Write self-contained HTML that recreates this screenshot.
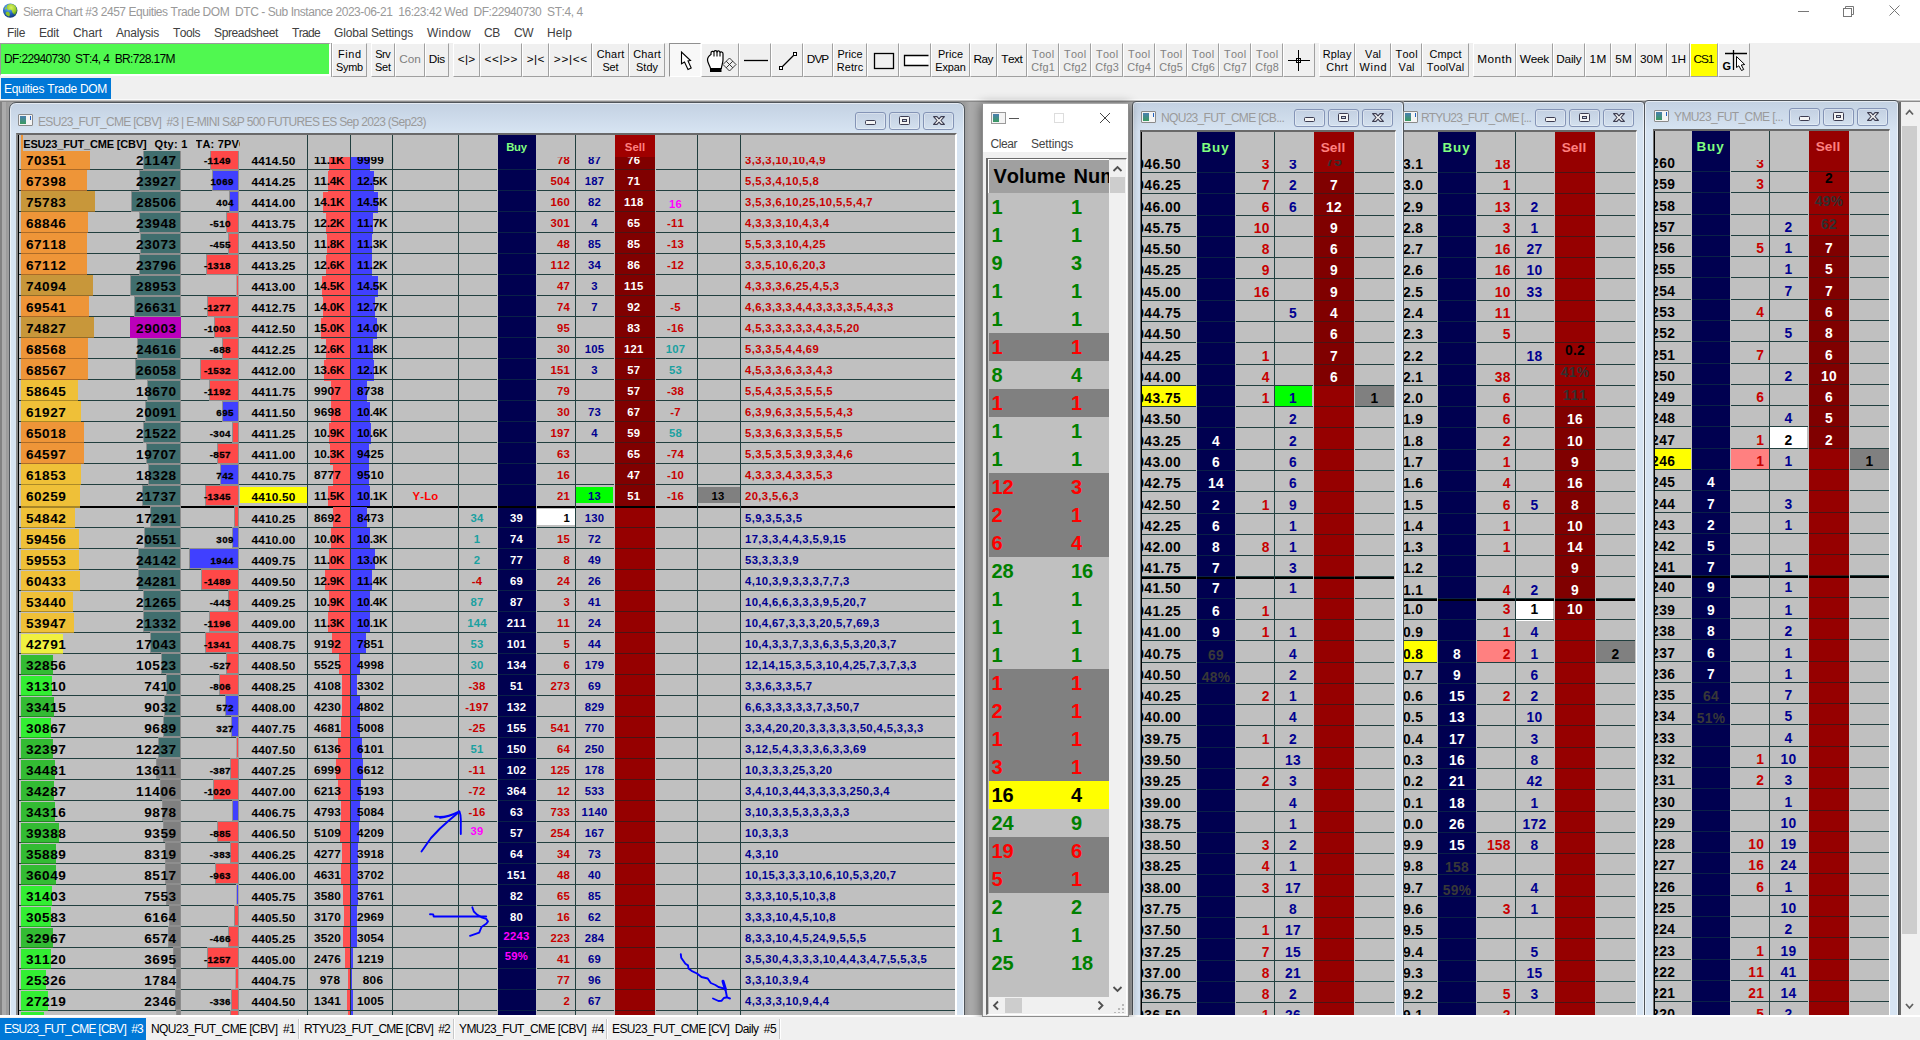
<!DOCTYPE html>
<html><head><meta charset="utf-8"><title>Sierra Chart</title>
<style>
html,body{margin:0;padding:0}
body{width:1920px;height:1040px;overflow:hidden;background:#f0f0f0;position:relative;font-family:"Liberation Sans",sans-serif;font-kerning:none;font-size:12px}
div,span{position:absolute;box-sizing:border-box}
.t{white-space:pre}
.btn{background:#f0f0f0;border-top:1px solid #fff;border-left:1px solid #fff;border-right:1px solid #a0a0a0;border-bottom:1px solid #a0a0a0;top:43px;height:34px}
.bt{white-space:pre;text-align:center;font-size:12px;line-height:13px;color:#000}
.g{color:#7f7f7f}
.win{background:#d4e2f1;border:1px solid #50555a;box-shadow:inset 0 0 0 1px rgba(255,255,255,.55);border-radius:7px 7px 0 0;background:linear-gradient(#c3d1e2 0,#d7e4f2 30px,#d7e4f2 100%)}
.wb{border:1px solid #8494b6;border-radius:3px;background:linear-gradient(#c3d0e2,#d3e0ee);box-shadow:inset 0 0 0 1px rgba(255,255,255,.35)}
</style></head><body>

<div style="left:0px;top:0px;width:1920px;height:22px;background:#fff;"></div>
<svg style="position:absolute;left:2px;top:2px" width="17" height="17" viewBox="0 0 17 17"><defs><radialGradient id="gl" cx="40%" cy="30%" r="75%"><stop offset="0" stop-color="#7fc0ff"/><stop offset="0.55" stop-color="#2668c0"/><stop offset="1" stop-color="#0e2f70"/></radialGradient><radialGradient id="gd" cx="45%" cy="35%" r="70%"><stop offset="0" stop-color="#d8f060"/><stop offset="0.7" stop-color="#98cc28"/><stop offset="1" stop-color="#5a9a18"/></radialGradient></defs><circle cx="8.200" cy="8.600" r="7.200" fill="url(#gl)"/><path d="M5.500 3c1.500-1.200 4-1.500 6-.5 1.500.8 2.800 2.500 3.200 4.500.3 2-.2 4-1.500 5.500-1 .3-1.800-.5-2.500-1.500s-.5-2.500-1.500-3-2.500.5-3.500-.5S4.500 5 5 4.200z" fill="url(#gd)"/><path d="M4.500 10c1-.5 2.500 0 3 1s.5 2.500-.5 3.500c-1.500-.3-2.800-1.500-3.500-3 .2-.7.500-1.200 1-1.500z" fill="#8cc428"/><path d="M3 5.500c.8-.5 1.500-.3 1.500.5s-.8 1.500-1.800 1.500c0-.8.100-1.400.3-2z" fill="#9ad030"/></svg>
<span class="t" style="left:23px;top:4px;font-size:12px;line-height:16px;color:#999;letter-spacing:-0.44px;">Sierra Chart #3 2457 Equities Trade DOM  DTC - Sub Instance 2023-06-21  16:23:42 Wed  DF:22940730  ST:4, 4</span>
<svg style="position:absolute;left:1780px;top:0" width="140" height="22" viewBox="0 0 140 22"><g stroke="#777" stroke-width="1" fill="none"><path d="M18 11.500h11"/><rect x="63.500" y="8.500" width="8" height="8" fill="#fff"/><path d="M65.500 8.500v-2h8v8h-2"/><path d="M109.500 5.500l10 10M119.500 5.500l-10 10"/></g></svg>
<div style="left:0px;top:22px;width:1920px;height:21px;background:#fff;"></div>
<span class="t" style="left:7px;top:25px;font-size:12px;line-height:16px;color:#404040;letter-spacing:-0.33px;">File</span>
<span class="t" style="left:39px;top:25px;font-size:12px;line-height:16px;color:#404040;letter-spacing:-0.17px;">Edit</span>
<span class="t" style="left:73px;top:25px;font-size:12px;line-height:16px;color:#404040;letter-spacing:-0.07px;">Chart</span>
<span class="t" style="left:116px;top:25px;font-size:12px;line-height:16px;color:#404040;letter-spacing:-0.21px;">Analysis</span>
<span class="t" style="left:173px;top:25px;font-size:12px;line-height:16px;color:#404040;letter-spacing:-0.47px;">Tools</span>
<span class="t" style="left:214px;top:25px;font-size:12px;line-height:16px;color:#404040;letter-spacing:-0.37px;">Spreadsheet</span>
<span class="t" style="left:292px;top:25px;font-size:12px;line-height:16px;color:#404040;letter-spacing:-0.67px;">Trade</span>
<span class="t" style="left:334px;top:25px;font-size:12px;line-height:16px;color:#404040;letter-spacing:-0.16px;">Global Settings</span>
<span class="t" style="left:427px;top:25px;font-size:12px;line-height:16px;color:#404040;letter-spacing:0.22px;">Window</span>
<span class="t" style="left:484px;top:25px;font-size:12px;line-height:16px;color:#404040;letter-spacing:-0.34px;">CB</span>
<span class="t" style="left:514px;top:25px;font-size:12px;line-height:16px;color:#404040;letter-spacing:-0.5px;">CW</span>
<span class="t" style="left:547px;top:25px;font-size:12px;line-height:16px;color:#404040;letter-spacing:0.08px;">Help</span>
<div style="left:0px;top:43px;width:1920px;height:34px;background:#f0f0f0;"></div>
<div style="left:0px;top:43px;width:331px;height:33px;background:#50f850;border-top:1px solid #9a9a9a;border-left:1px solid #9a9a9a;border-right:2px solid #fff;border-bottom:2px solid #fff"></div>
<div style="left:331px;top:43px;width:1px;height:34px;background:#a0a0a0;"></div>
<span class="t" style="left:4px;top:51px;font-size:12px;line-height:16px;color:#000;letter-spacing:-0.64px;">DF:22940730  ST:4, 4  BR:728.17M</span>
<div class="btn" style="left:332px;width:35px;"></div>
<span class="bt" style="left:322px;width:55.57px;top:46.5px;font-size:10.9px;line-height:14px;letter-spacing:0.57px">Find</span>
<span class="bt" style="left:322px;width:54.72px;top:59.5px;font-size:10.9px;line-height:14px;letter-spacing:-0.28px">Symb</span>
<div class="btn" style="left:371px;width:24px;"></div>
<span class="bt" style="left:361px;width:43.55px;top:46.5px;font-size:10.9px;line-height:14px;letter-spacing:-0.45px">Srv</span>
<span class="bt" style="left:361px;width:43.88px;top:59.5px;font-size:10.9px;line-height:14px;letter-spacing:-0.12px">Set</span>
<div class="btn" style="left:395px;width:30px;"></div>
<span class="bt g" style="left:385px;width:49.95px;top:51.5px;font-size:11.8px;line-height:14px;letter-spacing:-0.05px">Con</span>
<div class="btn" style="left:425px;width:24px;"></div>
<span class="bt" style="left:415px;width:43.65px;top:51.5px;font-size:11.8px;line-height:14px;letter-spacing:-0.35px">Dis</span>
<div class="btn" style="left:453px;width:27px;"></div>
<span class="bt" style="left:443px;width:47.22px;top:51.5px;font-size:11.8px;line-height:14px;letter-spacing:0.22px">&lt;|&gt;</span>
<div class="btn" style="left:480px;width:42px;"></div>
<span class="bt" style="left:470px;width:62.57px;top:51.5px;font-size:11.8px;line-height:14px;letter-spacing:0.57px">&lt;&lt;|&gt;&gt;</span>
<div class="btn" style="left:522px;width:27px;"></div>
<span class="bt" style="left:512px;width:47.38px;top:51.5px;font-size:11.8px;line-height:14px;letter-spacing:0.38px">&gt;|&lt;</span>
<div class="btn" style="left:549px;width:43px;"></div>
<span class="bt" style="left:539px;width:63.67px;top:51.5px;font-size:11.8px;line-height:14px;letter-spacing:0.67px">&gt;&gt;|&lt;&lt;</span>
<div class="btn" style="left:592px;width:37px;"></div>
<span class="bt" style="left:582px;width:57.27px;top:46.5px;font-size:10.9px;line-height:14px;letter-spacing:0.27px">Chart</span>
<span class="bt" style="left:582px;width:56.88px;top:59.5px;font-size:10.9px;line-height:14px;letter-spacing:-0.12px">Set</span>
<div class="btn" style="left:629px;width:36px;"></div>
<span class="bt" style="left:619px;width:56.27px;top:46.5px;font-size:10.9px;line-height:14px;letter-spacing:0.27px">Chart</span>
<span class="bt" style="left:619px;width:56.11px;top:59.5px;font-size:10.9px;line-height:14px;letter-spacing:0.11px">Stdy</span>
<div class="btn" style="left:669px;width:32px;background:#f8f8f8;border-color:#909090 #fff #fff #909090;"></div>
<div class="btn" style="left:701px;width:38px;"></div>
<div class="btn" style="left:739px;width:32px;"></div>
<div class="btn" style="left:771px;width:32px;"></div>
<div class="btn" style="left:803px;width:30px;"></div>
<span class="bt" style="left:793px;width:49.08px;top:51.5px;font-size:11.8px;line-height:14px;letter-spacing:-0.92px">DVP</span>
<div class="btn" style="left:833px;width:34px;"></div>
<span class="bt" style="left:823px;width:54.03px;top:46.5px;font-size:10.9px;line-height:14px;letter-spacing:0.03px">Price</span>
<span class="bt" style="left:823px;width:54.09px;top:59.5px;font-size:10.9px;line-height:14px;letter-spacing:0.09px">Retrc</span>
<div class="btn" style="left:867px;width:32px;"></div>
<div class="btn" style="left:899px;width:32px;"></div>
<div class="btn" style="left:931px;width:39px;"></div>
<span class="bt" style="left:921px;width:59.03px;top:46.5px;font-size:10.9px;line-height:14px;letter-spacing:0.03px">Price</span>
<span class="bt" style="left:921px;width:58.92px;top:59.5px;font-size:10.9px;line-height:14px;letter-spacing:-0.08px">Expan</span>
<div class="btn" style="left:970px;width:27px;"></div>
<span class="bt" style="left:960px;width:46.51px;top:51.5px;font-size:11.8px;line-height:14px;letter-spacing:-0.49px">Ray</span>
<div class="btn" style="left:997px;width:30px;"></div>
<span class="bt" style="left:987px;width:49.51px;top:51.5px;font-size:11.8px;line-height:14px;letter-spacing:-0.49px">Text</span>
<div class="btn" style="left:1027px;width:32px;"></div>
<span class="bt g" style="left:1017px;width:52.32px;top:46.5px;font-size:10.9px;line-height:14px;letter-spacing:0.32px">Tool</span>
<span class="bt g" style="left:1017px;width:52.24px;top:59.5px;font-size:10.9px;line-height:14px;letter-spacing:0.24px">Cfg1</span>
<div class="btn" style="left:1059px;width:32px;"></div>
<span class="bt g" style="left:1049px;width:52.32px;top:46.5px;font-size:10.9px;line-height:14px;letter-spacing:0.32px">Tool</span>
<span class="bt g" style="left:1049px;width:52.24px;top:59.5px;font-size:10.9px;line-height:14px;letter-spacing:0.24px">Cfg2</span>
<div class="btn" style="left:1091px;width:32px;"></div>
<span class="bt g" style="left:1081px;width:52.32px;top:46.5px;font-size:10.9px;line-height:14px;letter-spacing:0.32px">Tool</span>
<span class="bt g" style="left:1081px;width:52.24px;top:59.5px;font-size:10.9px;line-height:14px;letter-spacing:0.24px">Cfg3</span>
<div class="btn" style="left:1123px;width:32px;"></div>
<span class="bt g" style="left:1113px;width:52.32px;top:46.5px;font-size:10.9px;line-height:14px;letter-spacing:0.32px">Tool</span>
<span class="bt g" style="left:1113px;width:52.24px;top:59.5px;font-size:10.9px;line-height:14px;letter-spacing:0.24px">Cfg4</span>
<div class="btn" style="left:1155px;width:32px;"></div>
<span class="bt g" style="left:1145px;width:52.32px;top:46.5px;font-size:10.9px;line-height:14px;letter-spacing:0.32px">Tool</span>
<span class="bt g" style="left:1145px;width:52.24px;top:59.5px;font-size:10.9px;line-height:14px;letter-spacing:0.24px">Cfg5</span>
<div class="btn" style="left:1187px;width:32px;"></div>
<span class="bt g" style="left:1177px;width:52.32px;top:46.5px;font-size:10.9px;line-height:14px;letter-spacing:0.32px">Tool</span>
<span class="bt g" style="left:1177px;width:52.24px;top:59.5px;font-size:10.9px;line-height:14px;letter-spacing:0.24px">Cfg6</span>
<div class="btn" style="left:1219px;width:32px;"></div>
<span class="bt g" style="left:1209px;width:52.32px;top:46.5px;font-size:10.9px;line-height:14px;letter-spacing:0.32px">Tool</span>
<span class="bt g" style="left:1209px;width:52.24px;top:59.5px;font-size:10.9px;line-height:14px;letter-spacing:0.24px">Cfg7</span>
<div class="btn" style="left:1251px;width:32px;"></div>
<span class="bt g" style="left:1241px;width:52.32px;top:46.5px;font-size:10.9px;line-height:14px;letter-spacing:0.32px">Tool</span>
<span class="bt g" style="left:1241px;width:52.24px;top:59.5px;font-size:10.9px;line-height:14px;letter-spacing:0.24px">Cfg8</span>
<div class="btn" style="left:1283px;width:32px;"></div>
<div class="btn" style="left:1319px;width:36px;"></div>
<span class="bt" style="left:1309px;width:56.21px;top:46.5px;font-size:10.9px;line-height:14px;letter-spacing:0.21px">Rplay</span>
<span class="bt" style="left:1309px;width:56.3px;top:59.5px;font-size:10.9px;line-height:14px;letter-spacing:0.3px">Chrt</span>
<div class="btn" style="left:1355px;width:36px;"></div>
<span class="bt" style="left:1345px;width:56.08px;top:46.5px;font-size:10.9px;line-height:14px;letter-spacing:0.08px">Val</span>
<span class="bt" style="left:1345px;width:56.74px;top:59.5px;font-size:10.9px;line-height:14px;letter-spacing:0.74px">Wind</span>
<div class="btn" style="left:1391px;width:31px;"></div>
<span class="bt" style="left:1381px;width:51.32px;top:46.5px;font-size:10.9px;line-height:14px;letter-spacing:0.32px">Tool</span>
<span class="bt" style="left:1381px;width:51.08px;top:59.5px;font-size:10.9px;line-height:14px;letter-spacing:0.08px">Val</span>
<div class="btn" style="left:1422px;width:47px;"></div>
<span class="bt" style="left:1412px;width:67.14px;top:46.5px;font-size:10.9px;line-height:14px;letter-spacing:0.14px">Cmpct</span>
<span class="bt" style="left:1412px;width:67.06px;top:59.5px;font-size:10.9px;line-height:14px;letter-spacing:0.06px">ToolVal</span>
<div class="btn" style="left:1473px;width:43px;"></div>
<span class="bt" style="left:1463px;width:63.42px;top:51.5px;font-size:11.8px;line-height:14px;letter-spacing:0.42px">Month</span>
<div class="btn" style="left:1516px;width:37px;"></div>
<span class="bt" style="left:1506px;width:56.73px;top:51.5px;font-size:11.8px;line-height:14px;letter-spacing:-0.27px">Week</span>
<div class="btn" style="left:1553px;width:32px;"></div>
<span class="bt" style="left:1543px;width:51.79px;top:51.5px;font-size:11.8px;line-height:14px;letter-spacing:-0.21px">Daily</span>
<div class="btn" style="left:1585px;width:26px;"></div>
<span class="bt" style="left:1575px;width:46.4px;top:51.5px;font-size:11.8px;line-height:14px;letter-spacing:0.4px">1M</span>
<div class="btn" style="left:1611px;width:25px;"></div>
<span class="bt" style="left:1601px;width:45.1px;top:51.5px;font-size:11.8px;line-height:14px;letter-spacing:0.1px">5M</span>
<div class="btn" style="left:1636px;width:31px;"></div>
<span class="bt" style="left:1626px;width:51.05px;top:51.5px;font-size:11.8px;line-height:14px;letter-spacing:0.05px">30M</span>
<div class="btn" style="left:1667px;width:23px;"></div>
<span class="bt" style="left:1657px;width:43.11px;top:51.5px;font-size:11.8px;line-height:14px;letter-spacing:0.11px">1H</span>
<div class="btn" style="left:1690px;width:28px;background:#ffff00;"></div>
<span class="bt" style="left:1680px;width:46.92px;top:51.5px;font-size:11.8px;line-height:14px;letter-spacing:-1.08px">CS1</span>
<div class="btn" style="left:1718px;width:32px;"></div>
<svg style="position:absolute;left:0;top:43px" width="1920" height="34" viewBox="0 43 1920 34">
<g fill="none" stroke="#000" stroke-width="1">
<path d="M681.500 52L681.500 63.700L684.500 62L688 69.500L691.200 68L688 61L690.500 60.500Z" fill="#fff" stroke-width="1.100"/>
<path d="M710.500 68.500c-.5-3-3-5.500-3-8.500 0-2 1-4 3.500-5.500v-1.500c0-1.500 2.500-2.500 3-.5 0-2.500 3-2.500 3 0 .3-2.300 3-2 3 .300 .8-1.500 3-1 3 1v6c0 2.500-1.200 5.700-1.700 8.700z" fill="#fff" stroke-width="1.200"/>
<path d="M714 52.500v4M717 52v4.500M720 52.500v4" stroke-width="1.100"/>
<rect x="710.500" y="68.500" width="10.500" height="3" fill="#000"/>
<path d="M729.500 58L736 64.500L729.500 71L723 64.500ZM726.200 61.200l6.600 6.600M732.800 61.200l-6.600 6.600" stroke="#222" stroke-width="0.900"/>
<path d="M744 60.500h24" stroke-width="1.300"/>
<path d="M782 67l13-13" stroke-width="1.200"/><rect x="779.500" y="66.500" width="3" height="3" fill="#fff"/><rect x="793.500" y="52.500" width="3" height="3" fill="#fff"/>
<rect x="874.500" y="53.500" width="19" height="15" fill="#f0f0f0" stroke-width="1.300"/>
<path d="M928.500 55.500H904.500V65.500H928.500" fill="#fff" stroke-width="1.300"/>
<path d="M1288 60.500h22M1298.500 50v21"/><rect x="1296.500" y="58.500" width="4" height="4"/>
<path d="M1725 53.500h22M1733.500 50v20" stroke-width="1.300"/>
</g>
<path d="M1736.500 56.500v11l2.300-1.700 2.700 4.700 2.200-1-2.400-4.500 3.400-.5z" fill="#fff" stroke="#000" stroke-width="1"/>
</svg>
<span class="t" style="left:1722.5px;top:59.5px;font-size:11px;line-height:13px;color:#000;font-weight:bold;">G</span>
<div style="left:1px;top:78px;width:110px;height:21px;background:#0078d7;"></div>
<span class="t" style="left:4px;top:81px;font-size:12px;line-height:16px;color:#fff;letter-spacing:-0.32px;">Equities Trade DOM</span>
<div style="left:0px;top:100px;width:1920px;height:915px;background:#ababab;border-left:2px solid #828282"></div>
<div style="left:0px;top:99px;width:1920px;height:1px;background:#fafafa;"></div>
<div style="left:0px;top:100px;width:1920px;height:1px;background:#c4c4c4;"></div>
<div style="left:0px;top:101px;width:1920px;height:1px;background:#8a8a8a;"></div>
<div style="left:0px;top:1015px;width:1920px;height:2px;background:#fff;"></div>
<div id="mdi" style="left:0;top:100px;width:1920px;height:915px;overflow:hidden">
<div style="left:6px;top:2px;width:964px;height:920px;background:linear-gradient(90deg,#9a9a9a,#a6a6a6 6px,#a6a6a6 952px,#999 958px,#ababab)"></div>
<div class="win" style="left:9px;top:2px;width:956px;height:940px"></div>
<div style="left:18px;top:14px;width:15px;height:12px;background:#f4f4f4;border:1px solid #8a8a8a;border-radius:1px"></div>
<div style="left:20px;top:16px;width:6px;height:8px;background:linear-gradient(#4a7fb0,#3a9a60)"></div>
<div style="left:30px;top:16px;width:1px;height:4px;background:#2060c0"></div>
<span class="t" style="left:38px;top:14px;font-size:12px;line-height:16px;color:#9a9a9a;letter-spacing:-0.68px;">ESU23_FUT_CME [CBV]  #3 | E-MINI S&amp;P 500 FUTURES ES Sep 2023 (Sep23)</span>
<div class="wb" style="left:855px;top:12px;width:31px;height:18px"></div>
<div style="left:865px;top:20px;width:11px;height:5px;background:#f4f4f4;border:1px solid #3c3c50;border-radius:1.5px"></div>
<div class="wb" style="left:889px;top:12px;width:31px;height:18px"></div>
<div style="left:899px;top:16px;width:11px;height:9px;background:#f4f4f4;border:1px solid #3c3c50;border-radius:1.5px"></div>
<div style="left:902px;top:18.5px;width:5px;height:3.5px;background:#c6d4e6;border:1px solid #3c3c50"></div>
<div class="wb" style="left:923px;top:12px;width:31px;height:18px"></div>
<svg style="position:absolute;left:932.5px;top:16px" width="12" height="9" viewBox="0 0 12 9"><path d="M.6 .6H4L6 2.900 8 .6h3.400L7.900 4.500l3.500 3.900H8L6 6.100 4 8.400H.6l3.500-3.900z" fill="#f4f4f4" stroke="#3c3c50" stroke-width="1.100" stroke-linejoin="round"/></svg>
<div style="left:16px;top:33px;width:941px;height:882px;background:#c0c0c0;overflow:hidden;border-top:2px solid #696969;border-left:2px solid #8a8a8a;border-right:2px solid #fff">
<div style="left:0px;top:-1px;width:1px;height:900px;background:#000;"></div>
<div style="left:480px;top:-1px;width:38px;height:900px;background:#000050;"></div>
<div style="left:597px;top:-1px;width:40px;height:372px;background:#800000;"></div>
<div style="left:597px;top:371px;width:40px;height:600px;background:#960000;"></div>
<div style="left:597px;top:-1px;width:40px;height:17px;background:#a00000;"></div>
<div style="left:3px;top:14px;width:69px;height:20px;background:#ee9538;"></div>
<div style="left:311px;top:15px;width:21px;height:21px;background:#ff5050;"></div>
<div style="left:333px;top:15px;width:19px;height:21px;background:#4040ff;"></div>
<div style="left:1px;top:34px;width:478px;height:1px;background:#213f3f;"></div>
<div style="left:480px;top:34px;width:38px;height:1px;background:#0a2048;"></div>
<div style="left:519px;top:34px;width:77px;height:1px;background:#213f3f;"></div>
<div style="left:597px;top:34px;width:40px;height:1px;background:#4a1414;"></div>
<div style="left:638px;top:34px;width:299px;height:1px;background:#213f3f;"></div>
<div style="left:126px;top:15px;width:36px;height:19px;background:#406e6e;box-shadow:0 0 0 1px #8e8e8e"></div>
<div style="left:193px;top:15px;width:27px;height:19px;background:#ff4848;box-shadow:0 0 0 1px #8e8e8e"></div>
<div style="left:3px;top:34px;width:69px;height:1px;background:#ab6b28;"></div>
<span class="t" style="left:8px;top:16px;font-size:13.6px;line-height:20px;color:#000;font-weight:bold;letter-spacing:0.5px;">70351</span>
<span class="t" style="left:79.2px;top:16px;font-size:13.6px;line-height:20px;color:#000;font-weight:bold;letter-spacing:0.6px;width:79.6px;text-align:right;">21147</span>
<span class="t" style="left:162px;top:16px;font-size:9.8px;line-height:20px;color:#000;font-weight:bold;letter-spacing:0.36px;width:50.8px;text-align:right;-webkit-text-stroke:0.3px #000">-1149</span>
<span class="t" style="left:222px;top:16px;font-size:11.8px;line-height:20px;color:#000;font-weight:bold;letter-spacing:0.22px;width:67px;text-align:center;">4414.50</span>
<span class="t" style="left:296px;top:15px;font-size:11.8px;line-height:20px;color:#000;font-weight:bold;letter-spacing:-0.23px;width:32px;text-align:left;">11.1K</span>
<span class="t" style="left:339px;top:15px;font-size:11.8px;line-height:20px;color:#000;font-weight:bold;letter-spacing:0.22px;width:32px;text-align:left;">9999</span>
<span class="t" style="left:519px;top:15px;font-size:11.3px;line-height:20px;color:#c80000;font-weight:bold;letter-spacing:0.22px;width:33px;text-align:right;">78</span>
<span class="t" style="left:557.4px;top:15px;font-size:11.3px;line-height:20px;color:#000090;font-weight:bold;letter-spacing:0.22px;width:38px;text-align:center;">87</span>
<span class="t" style="left:595.8px;top:15px;font-size:11.3px;line-height:20px;color:#fff;font-weight:bold;letter-spacing:0.22px;width:40px;text-align:center;">76</span>
<span class="t" style="left:727px;top:15px;font-size:11.3px;line-height:20px;color:#c80000;font-weight:bold;letter-spacing:0.36px;">3,3,3,10,10,4,9</span>
<div style="left:3px;top:35px;width:66px;height:20px;background:#ee9538;"></div>
<div style="left:310px;top:36px;width:22px;height:21px;background:#ff5050;"></div>
<div style="left:333px;top:36px;width:23px;height:21px;background:#4040ff;"></div>
<div style="left:1px;top:55px;width:478px;height:1px;background:#213f3f;"></div>
<div style="left:480px;top:55px;width:38px;height:1px;background:#0a2048;"></div>
<div style="left:519px;top:55px;width:77px;height:1px;background:#213f3f;"></div>
<div style="left:597px;top:55px;width:40px;height:1px;background:#4a1414;"></div>
<div style="left:638px;top:55px;width:299px;height:1px;background:#213f3f;"></div>
<div style="left:122px;top:36px;width:40px;height:19px;background:#406e6e;box-shadow:0 0 0 1px #8e8e8e"></div>
<div style="left:195px;top:36px;width:25px;height:19px;background:#4040ff;box-shadow:0 0 0 1px #8e8e8e"></div>
<div style="left:3px;top:55px;width:66px;height:1px;background:#ab6b28;"></div>
<span class="t" style="left:8px;top:37px;font-size:13.6px;line-height:20px;color:#000;font-weight:bold;letter-spacing:0.5px;">67398</span>
<span class="t" style="left:79.2px;top:37px;font-size:13.6px;line-height:20px;color:#000;font-weight:bold;letter-spacing:0.6px;width:79.6px;text-align:right;">23927</span>
<span class="t" style="left:165px;top:37px;font-size:9.8px;line-height:20px;color:#000;font-weight:bold;letter-spacing:0.36px;width:50.8px;text-align:right;-webkit-text-stroke:0.3px #000">1069</span>
<span class="t" style="left:222px;top:37px;font-size:11.8px;line-height:20px;color:#000;font-weight:bold;letter-spacing:0.22px;width:67px;text-align:center;">4414.25</span>
<span class="t" style="left:296px;top:36px;font-size:11.8px;line-height:20px;color:#000;font-weight:bold;letter-spacing:-0.23px;width:32px;text-align:left;">11.4K</span>
<span class="t" style="left:339px;top:36px;font-size:11.8px;line-height:20px;color:#000;font-weight:bold;letter-spacing:-0.23px;width:32px;text-align:left;">12.5K</span>
<span class="t" style="left:519px;top:36px;font-size:11.3px;line-height:20px;color:#c80000;font-weight:bold;letter-spacing:0.22px;width:33px;text-align:right;">504</span>
<span class="t" style="left:557.4px;top:36px;font-size:11.3px;line-height:20px;color:#000090;font-weight:bold;letter-spacing:0.22px;width:38px;text-align:center;">187</span>
<span class="t" style="left:595.8px;top:36px;font-size:11.3px;line-height:20px;color:#fff;font-weight:bold;letter-spacing:0.22px;width:40px;text-align:center;">71</span>
<span class="t" style="left:727px;top:36px;font-size:11.3px;line-height:20px;color:#c80000;font-weight:bold;letter-spacing:0.36px;">5,5,3,4,10,5,8</span>
<div style="left:3px;top:56px;width:74px;height:20px;background:#c8973a;"></div>
<div style="left:305px;top:57px;width:27px;height:21px;background:#ff5050;"></div>
<div style="left:333px;top:57px;width:27px;height:21px;background:#4040ff;"></div>
<div style="left:1px;top:76px;width:478px;height:1px;background:#213f3f;"></div>
<div style="left:480px;top:76px;width:38px;height:1px;background:#0a2048;"></div>
<div style="left:519px;top:76px;width:77px;height:1px;background:#213f3f;"></div>
<div style="left:597px;top:76px;width:40px;height:1px;background:#4a1414;"></div>
<div style="left:638px;top:76px;width:299px;height:1px;background:#213f3f;"></div>
<div style="left:114px;top:57px;width:48px;height:19px;background:#406e6e;box-shadow:0 0 0 1px #8e8e8e"></div>
<div style="left:212px;top:57px;width:8px;height:19px;background:#4040ff;box-shadow:0 0 0 1px #8e8e8e"></div>
<div style="left:3px;top:76px;width:74px;height:1px;background:#906c29;"></div>
<span class="t" style="left:8px;top:58px;font-size:13.6px;line-height:20px;color:#000;font-weight:bold;letter-spacing:0.5px;">75783</span>
<span class="t" style="left:79.2px;top:58px;font-size:13.6px;line-height:20px;color:#000;font-weight:bold;letter-spacing:0.6px;width:79.6px;text-align:right;">28506</span>
<span class="t" style="left:165px;top:58px;font-size:9.8px;line-height:20px;color:#000;font-weight:bold;letter-spacing:0.36px;width:50.8px;text-align:right;-webkit-text-stroke:0.3px #000">404</span>
<span class="t" style="left:222px;top:58px;font-size:11.8px;line-height:20px;color:#000;font-weight:bold;letter-spacing:0.22px;width:67px;text-align:center;">4414.00</span>
<span class="t" style="left:296px;top:57px;font-size:11.8px;line-height:20px;color:#000;font-weight:bold;letter-spacing:-0.23px;width:32px;text-align:left;">14.1K</span>
<span class="t" style="left:339px;top:57px;font-size:11.8px;line-height:20px;color:#000;font-weight:bold;letter-spacing:-0.23px;width:32px;text-align:left;">14.5K</span>
<span class="t" style="left:519px;top:57px;font-size:11.3px;line-height:20px;color:#c80000;font-weight:bold;letter-spacing:0.22px;width:33px;text-align:right;">160</span>
<span class="t" style="left:557.4px;top:57px;font-size:11.3px;line-height:20px;color:#000090;font-weight:bold;letter-spacing:0.22px;width:38px;text-align:center;">82</span>
<span class="t" style="left:595.8px;top:57px;font-size:11.3px;line-height:20px;color:#fff;font-weight:bold;letter-spacing:0.22px;width:40px;text-align:center;">118</span>
<span class="t" style="left:637px;top:59px;font-size:11.3px;line-height:20px;color:#ff00ff;font-weight:bold;letter-spacing:0.22px;width:41px;text-align:center;">16</span>
<span class="t" style="left:727px;top:57px;font-size:11.3px;line-height:20px;color:#c80000;font-weight:bold;letter-spacing:0.36px;">3,5,3,6,10,25,10,5,5,4,7</span>
<div style="left:3px;top:77px;width:67px;height:20px;background:#ee9538;"></div>
<div style="left:308px;top:78px;width:24px;height:21px;background:#ff5050;"></div>
<div style="left:333px;top:78px;width:22px;height:21px;background:#4040ff;"></div>
<div style="left:1px;top:97px;width:478px;height:1px;background:#213f3f;"></div>
<div style="left:480px;top:97px;width:38px;height:1px;background:#0a2048;"></div>
<div style="left:519px;top:97px;width:77px;height:1px;background:#213f3f;"></div>
<div style="left:597px;top:97px;width:40px;height:1px;background:#4a1414;"></div>
<div style="left:638px;top:97px;width:299px;height:1px;background:#213f3f;"></div>
<div style="left:122px;top:78px;width:40px;height:19px;background:#406e6e;box-shadow:0 0 0 1px #8e8e8e"></div>
<div style="left:209px;top:78px;width:11px;height:19px;background:#ff4848;box-shadow:0 0 0 1px #8e8e8e"></div>
<div style="left:3px;top:97px;width:67px;height:1px;background:#ab6b28;"></div>
<span class="t" style="left:8px;top:79px;font-size:13.6px;line-height:20px;color:#000;font-weight:bold;letter-spacing:0.5px;">68846</span>
<span class="t" style="left:79.2px;top:79px;font-size:13.6px;line-height:20px;color:#000;font-weight:bold;letter-spacing:0.6px;width:79.6px;text-align:right;">23948</span>
<span class="t" style="left:162px;top:79px;font-size:9.8px;line-height:20px;color:#000;font-weight:bold;letter-spacing:0.36px;width:50.8px;text-align:right;-webkit-text-stroke:0.3px #000">-510</span>
<span class="t" style="left:222px;top:79px;font-size:11.8px;line-height:20px;color:#000;font-weight:bold;letter-spacing:0.22px;width:67px;text-align:center;">4413.75</span>
<span class="t" style="left:296px;top:78px;font-size:11.8px;line-height:20px;color:#000;font-weight:bold;letter-spacing:-0.23px;width:32px;text-align:left;">12.2K</span>
<span class="t" style="left:339px;top:78px;font-size:11.8px;line-height:20px;color:#000;font-weight:bold;letter-spacing:-0.23px;width:32px;text-align:left;">11.7K</span>
<span class="t" style="left:519px;top:78px;font-size:11.3px;line-height:20px;color:#c80000;font-weight:bold;letter-spacing:0.22px;width:33px;text-align:right;">301</span>
<span class="t" style="left:557.4px;top:78px;font-size:11.3px;line-height:20px;color:#000090;font-weight:bold;letter-spacing:0.22px;width:38px;text-align:center;">4</span>
<span class="t" style="left:595.8px;top:78px;font-size:11.3px;line-height:20px;color:#fff;font-weight:bold;letter-spacing:0.22px;width:40px;text-align:center;">65</span>
<span class="t" style="left:637px;top:78px;font-size:11.3px;line-height:20px;color:#c80000;font-weight:bold;letter-spacing:0.22px;width:41px;text-align:center;">-11</span>
<span class="t" style="left:727px;top:78px;font-size:11.3px;line-height:20px;color:#c80000;font-weight:bold;letter-spacing:0.36px;">4,3,3,3,10,4,3,4</span>
<div style="left:3px;top:98px;width:66px;height:20px;background:#ee9538;"></div>
<div style="left:309px;top:99px;width:23px;height:21px;background:#ff5050;"></div>
<div style="left:333px;top:99px;width:21px;height:21px;background:#4040ff;"></div>
<div style="left:1px;top:118px;width:478px;height:1px;background:#213f3f;"></div>
<div style="left:480px;top:118px;width:38px;height:1px;background:#0a2048;"></div>
<div style="left:519px;top:118px;width:77px;height:1px;background:#213f3f;"></div>
<div style="left:597px;top:118px;width:40px;height:1px;background:#4a1414;"></div>
<div style="left:638px;top:118px;width:299px;height:1px;background:#213f3f;"></div>
<div style="left:123px;top:99px;width:39px;height:19px;background:#406e6e;box-shadow:0 0 0 1px #8e8e8e"></div>
<div style="left:211px;top:99px;width:9px;height:19px;background:#ff4848;box-shadow:0 0 0 1px #8e8e8e"></div>
<div style="left:3px;top:118px;width:66px;height:1px;background:#ab6b28;"></div>
<span class="t" style="left:8px;top:100px;font-size:13.6px;line-height:20px;color:#000;font-weight:bold;letter-spacing:0.5px;">67118</span>
<span class="t" style="left:79.2px;top:100px;font-size:13.6px;line-height:20px;color:#000;font-weight:bold;letter-spacing:0.6px;width:79.6px;text-align:right;">23073</span>
<span class="t" style="left:162px;top:100px;font-size:9.8px;line-height:20px;color:#000;font-weight:bold;letter-spacing:0.36px;width:50.8px;text-align:right;-webkit-text-stroke:0.3px #000">-455</span>
<span class="t" style="left:222px;top:100px;font-size:11.8px;line-height:20px;color:#000;font-weight:bold;letter-spacing:0.22px;width:67px;text-align:center;">4413.50</span>
<span class="t" style="left:296px;top:99px;font-size:11.8px;line-height:20px;color:#000;font-weight:bold;letter-spacing:-0.23px;width:32px;text-align:left;">11.8K</span>
<span class="t" style="left:339px;top:99px;font-size:11.8px;line-height:20px;color:#000;font-weight:bold;letter-spacing:-0.23px;width:32px;text-align:left;">11.3K</span>
<span class="t" style="left:519px;top:99px;font-size:11.3px;line-height:20px;color:#c80000;font-weight:bold;letter-spacing:0.22px;width:33px;text-align:right;">48</span>
<span class="t" style="left:557.4px;top:99px;font-size:11.3px;line-height:20px;color:#000090;font-weight:bold;letter-spacing:0.22px;width:38px;text-align:center;">85</span>
<span class="t" style="left:595.8px;top:99px;font-size:11.3px;line-height:20px;color:#fff;font-weight:bold;letter-spacing:0.22px;width:40px;text-align:center;">85</span>
<span class="t" style="left:637px;top:99px;font-size:11.3px;line-height:20px;color:#c80000;font-weight:bold;letter-spacing:0.22px;width:41px;text-align:center;">-13</span>
<span class="t" style="left:727px;top:99px;font-size:11.3px;line-height:20px;color:#c80000;font-weight:bold;letter-spacing:0.36px;">5,5,3,3,10,4,25</span>
<div style="left:3px;top:119px;width:66px;height:20px;background:#ee9538;"></div>
<div style="left:308px;top:120px;width:24px;height:21px;background:#ff5050;"></div>
<div style="left:333px;top:120px;width:21px;height:21px;background:#4040ff;"></div>
<div style="left:1px;top:139px;width:478px;height:1px;background:#213f3f;"></div>
<div style="left:480px;top:139px;width:38px;height:1px;background:#0a2048;"></div>
<div style="left:519px;top:139px;width:77px;height:1px;background:#213f3f;"></div>
<div style="left:597px;top:139px;width:40px;height:1px;background:#4a1414;"></div>
<div style="left:638px;top:139px;width:299px;height:1px;background:#213f3f;"></div>
<div style="left:122px;top:120px;width:40px;height:19px;background:#406e6e;box-shadow:0 0 0 1px #8e8e8e"></div>
<div style="left:189px;top:120px;width:31px;height:19px;background:#ff4848;box-shadow:0 0 0 1px #8e8e8e"></div>
<div style="left:3px;top:139px;width:66px;height:1px;background:#ab6b28;"></div>
<span class="t" style="left:8px;top:121px;font-size:13.6px;line-height:20px;color:#000;font-weight:bold;letter-spacing:0.5px;">67112</span>
<span class="t" style="left:79.2px;top:121px;font-size:13.6px;line-height:20px;color:#000;font-weight:bold;letter-spacing:0.6px;width:79.6px;text-align:right;">23796</span>
<span class="t" style="left:162px;top:121px;font-size:9.8px;line-height:20px;color:#000;font-weight:bold;letter-spacing:0.36px;width:50.8px;text-align:right;-webkit-text-stroke:0.3px #000">-1318</span>
<span class="t" style="left:222px;top:121px;font-size:11.8px;line-height:20px;color:#000;font-weight:bold;letter-spacing:0.22px;width:67px;text-align:center;">4413.25</span>
<span class="t" style="left:296px;top:120px;font-size:11.8px;line-height:20px;color:#000;font-weight:bold;letter-spacing:-0.23px;width:32px;text-align:left;">12.6K</span>
<span class="t" style="left:339px;top:120px;font-size:11.8px;line-height:20px;color:#000;font-weight:bold;letter-spacing:-0.23px;width:32px;text-align:left;">11.2K</span>
<span class="t" style="left:519px;top:120px;font-size:11.3px;line-height:20px;color:#c80000;font-weight:bold;letter-spacing:0.22px;width:33px;text-align:right;">112</span>
<span class="t" style="left:557.4px;top:120px;font-size:11.3px;line-height:20px;color:#000090;font-weight:bold;letter-spacing:0.22px;width:38px;text-align:center;">34</span>
<span class="t" style="left:595.8px;top:120px;font-size:11.3px;line-height:20px;color:#fff;font-weight:bold;letter-spacing:0.22px;width:40px;text-align:center;">86</span>
<span class="t" style="left:637px;top:120px;font-size:11.3px;line-height:20px;color:#c80000;font-weight:bold;letter-spacing:0.22px;width:41px;text-align:center;">-12</span>
<span class="t" style="left:727px;top:120px;font-size:11.3px;line-height:20px;color:#c80000;font-weight:bold;letter-spacing:0.36px;">3,3,5,10,6,20,3</span>
<div style="left:3px;top:140px;width:72px;height:20px;background:#c8973a;"></div>
<div style="left:304px;top:141px;width:28px;height:21px;background:#ff5050;"></div>
<div style="left:333px;top:141px;width:27px;height:21px;background:#4040ff;"></div>
<div style="left:1px;top:160px;width:478px;height:1px;background:#213f3f;"></div>
<div style="left:480px;top:160px;width:38px;height:1px;background:#0a2048;"></div>
<div style="left:519px;top:160px;width:77px;height:1px;background:#213f3f;"></div>
<div style="left:597px;top:160px;width:40px;height:1px;background:#4a1414;"></div>
<div style="left:638px;top:160px;width:299px;height:1px;background:#213f3f;"></div>
<div style="left:113px;top:141px;width:49px;height:19px;background:#406e6e;box-shadow:0 0 0 1px #8e8e8e"></div>
<div style="left:219px;top:141px;width:1px;height:19px;background:#ff4848;box-shadow:0 0 0 1px #a8a0a0"></div>
<div style="left:3px;top:160px;width:72px;height:1px;background:#906c29;"></div>
<span class="t" style="left:8px;top:142px;font-size:13.6px;line-height:20px;color:#000;font-weight:bold;letter-spacing:0.5px;">74094</span>
<span class="t" style="left:79.2px;top:142px;font-size:13.6px;line-height:20px;color:#000;font-weight:bold;letter-spacing:0.6px;width:79.6px;text-align:right;">28953</span>
<span class="t" style="left:222px;top:142px;font-size:11.8px;line-height:20px;color:#000;font-weight:bold;letter-spacing:0.22px;width:67px;text-align:center;">4413.00</span>
<span class="t" style="left:296px;top:141px;font-size:11.8px;line-height:20px;color:#000;font-weight:bold;letter-spacing:-0.23px;width:32px;text-align:left;">14.5K</span>
<span class="t" style="left:339px;top:141px;font-size:11.8px;line-height:20px;color:#000;font-weight:bold;letter-spacing:-0.23px;width:32px;text-align:left;">14.5K</span>
<span class="t" style="left:519px;top:141px;font-size:11.3px;line-height:20px;color:#c80000;font-weight:bold;letter-spacing:0.22px;width:33px;text-align:right;">47</span>
<span class="t" style="left:557.4px;top:141px;font-size:11.3px;line-height:20px;color:#000090;font-weight:bold;letter-spacing:0.22px;width:38px;text-align:center;">3</span>
<span class="t" style="left:595.8px;top:141px;font-size:11.3px;line-height:20px;color:#fff;font-weight:bold;letter-spacing:0.22px;width:40px;text-align:center;">115</span>
<span class="t" style="left:727px;top:141px;font-size:11.3px;line-height:20px;color:#c80000;font-weight:bold;letter-spacing:0.36px;">4,3,3,3,6,25,4,5,3</span>
<div style="left:3px;top:161px;width:68px;height:20px;background:#ee9538;"></div>
<div style="left:305px;top:162px;width:27px;height:21px;background:#ff5050;"></div>
<div style="left:333px;top:162px;width:24px;height:21px;background:#4040ff;"></div>
<div style="left:1px;top:181px;width:478px;height:1px;background:#213f3f;"></div>
<div style="left:480px;top:181px;width:38px;height:1px;background:#0a2048;"></div>
<div style="left:519px;top:181px;width:77px;height:1px;background:#213f3f;"></div>
<div style="left:597px;top:181px;width:40px;height:1px;background:#4a1414;"></div>
<div style="left:638px;top:181px;width:299px;height:1px;background:#213f3f;"></div>
<div style="left:117px;top:162px;width:45px;height:19px;background:#406e6e;box-shadow:0 0 0 1px #8e8e8e"></div>
<div style="left:190px;top:162px;width:30px;height:19px;background:#ff4848;box-shadow:0 0 0 1px #8e8e8e"></div>
<div style="left:3px;top:181px;width:68px;height:1px;background:#ab6b28;"></div>
<span class="t" style="left:8px;top:163px;font-size:13.6px;line-height:20px;color:#000;font-weight:bold;letter-spacing:0.5px;">69541</span>
<span class="t" style="left:79.2px;top:163px;font-size:13.6px;line-height:20px;color:#000;font-weight:bold;letter-spacing:0.6px;width:79.6px;text-align:right;">26631</span>
<span class="t" style="left:162px;top:163px;font-size:9.8px;line-height:20px;color:#000;font-weight:bold;letter-spacing:0.36px;width:50.8px;text-align:right;-webkit-text-stroke:0.3px #000">-1277</span>
<span class="t" style="left:222px;top:163px;font-size:11.8px;line-height:20px;color:#000;font-weight:bold;letter-spacing:0.22px;width:67px;text-align:center;">4412.75</span>
<span class="t" style="left:296px;top:162px;font-size:11.8px;line-height:20px;color:#000;font-weight:bold;letter-spacing:-0.23px;width:32px;text-align:left;">14.0K</span>
<span class="t" style="left:339px;top:162px;font-size:11.8px;line-height:20px;color:#000;font-weight:bold;letter-spacing:-0.23px;width:32px;text-align:left;">12.7K</span>
<span class="t" style="left:519px;top:162px;font-size:11.3px;line-height:20px;color:#c80000;font-weight:bold;letter-spacing:0.22px;width:33px;text-align:right;">74</span>
<span class="t" style="left:557.4px;top:162px;font-size:11.3px;line-height:20px;color:#000090;font-weight:bold;letter-spacing:0.22px;width:38px;text-align:center;">7</span>
<span class="t" style="left:595.8px;top:162px;font-size:11.3px;line-height:20px;color:#fff;font-weight:bold;letter-spacing:0.22px;width:40px;text-align:center;">92</span>
<span class="t" style="left:637px;top:162px;font-size:11.3px;line-height:20px;color:#c80000;font-weight:bold;letter-spacing:0.22px;width:41px;text-align:center;">-5</span>
<span class="t" style="left:727px;top:162px;font-size:11.3px;line-height:20px;color:#c80000;font-weight:bold;letter-spacing:0.36px;">4,6,3,3,3,4,4,3,3,3,3,5,4,3,3</span>
<div style="left:3px;top:182px;width:73px;height:20px;background:#c8973a;"></div>
<div style="left:303px;top:183px;width:29px;height:21px;background:#ff5050;"></div>
<div style="left:333px;top:183px;width:26px;height:21px;background:#4040ff;"></div>
<div style="left:1px;top:202px;width:478px;height:1px;background:#213f3f;"></div>
<div style="left:480px;top:202px;width:38px;height:1px;background:#0a2048;"></div>
<div style="left:519px;top:202px;width:77px;height:1px;background:#213f3f;"></div>
<div style="left:597px;top:202px;width:40px;height:1px;background:#4a1414;"></div>
<div style="left:638px;top:202px;width:299px;height:1px;background:#213f3f;"></div>
<div style="left:113px;top:183px;width:49px;height:19px;background:#bb00bb;box-shadow:0 0 0 1px #bb00bb"></div>
<div style="left:197px;top:183px;width:23px;height:19px;background:#ff4848;box-shadow:0 0 0 1px #8e8e8e"></div>
<div style="left:3px;top:202px;width:73px;height:1px;background:#906c29;"></div>
<span class="t" style="left:8px;top:184px;font-size:13.6px;line-height:20px;color:#000;font-weight:bold;letter-spacing:0.5px;">74827</span>
<span class="t" style="left:79.2px;top:184px;font-size:13.6px;line-height:20px;color:#000;font-weight:bold;letter-spacing:0.6px;width:79.6px;text-align:right;">29003</span>
<span class="t" style="left:162px;top:184px;font-size:9.8px;line-height:20px;color:#000;font-weight:bold;letter-spacing:0.36px;width:50.8px;text-align:right;-webkit-text-stroke:0.3px #000">-1003</span>
<span class="t" style="left:222px;top:184px;font-size:11.8px;line-height:20px;color:#000;font-weight:bold;letter-spacing:0.22px;width:67px;text-align:center;">4412.50</span>
<span class="t" style="left:296px;top:183px;font-size:11.8px;line-height:20px;color:#000;font-weight:bold;letter-spacing:-0.23px;width:32px;text-align:left;">15.0K</span>
<span class="t" style="left:339px;top:183px;font-size:11.8px;line-height:20px;color:#000;font-weight:bold;letter-spacing:-0.23px;width:32px;text-align:left;">14.0K</span>
<span class="t" style="left:519px;top:183px;font-size:11.3px;line-height:20px;color:#c80000;font-weight:bold;letter-spacing:0.22px;width:33px;text-align:right;">95</span>
<span class="t" style="left:595.8px;top:183px;font-size:11.3px;line-height:20px;color:#fff;font-weight:bold;letter-spacing:0.22px;width:40px;text-align:center;">83</span>
<span class="t" style="left:637px;top:183px;font-size:11.3px;line-height:20px;color:#c80000;font-weight:bold;letter-spacing:0.22px;width:41px;text-align:center;">-16</span>
<span class="t" style="left:727px;top:183px;font-size:11.3px;line-height:20px;color:#c80000;font-weight:bold;letter-spacing:0.36px;">4,5,3,3,3,3,3,4,3,5,20</span>
<div style="left:3px;top:203px;width:67px;height:20px;background:#ee9538;"></div>
<div style="left:308px;top:204px;width:24px;height:21px;background:#ff5050;"></div>
<div style="left:333px;top:204px;width:22px;height:21px;background:#4040ff;"></div>
<div style="left:1px;top:223px;width:478px;height:1px;background:#213f3f;"></div>
<div style="left:480px;top:223px;width:38px;height:1px;background:#0a2048;"></div>
<div style="left:519px;top:223px;width:77px;height:1px;background:#213f3f;"></div>
<div style="left:597px;top:223px;width:40px;height:1px;background:#4a1414;"></div>
<div style="left:638px;top:223px;width:299px;height:1px;background:#213f3f;"></div>
<div style="left:120px;top:204px;width:42px;height:19px;background:#406e6e;box-shadow:0 0 0 1px #8e8e8e"></div>
<div style="left:205px;top:204px;width:15px;height:19px;background:#ff4848;box-shadow:0 0 0 1px #8e8e8e"></div>
<div style="left:3px;top:223px;width:67px;height:1px;background:#ab6b28;"></div>
<span class="t" style="left:8px;top:205px;font-size:13.6px;line-height:20px;color:#000;font-weight:bold;letter-spacing:0.5px;">68568</span>
<span class="t" style="left:79.2px;top:205px;font-size:13.6px;line-height:20px;color:#000;font-weight:bold;letter-spacing:0.6px;width:79.6px;text-align:right;">24616</span>
<span class="t" style="left:162px;top:205px;font-size:9.8px;line-height:20px;color:#000;font-weight:bold;letter-spacing:0.36px;width:50.8px;text-align:right;-webkit-text-stroke:0.3px #000">-688</span>
<span class="t" style="left:222px;top:205px;font-size:11.8px;line-height:20px;color:#000;font-weight:bold;letter-spacing:0.22px;width:67px;text-align:center;">4412.25</span>
<span class="t" style="left:296px;top:204px;font-size:11.8px;line-height:20px;color:#000;font-weight:bold;letter-spacing:-0.23px;width:32px;text-align:left;">12.6K</span>
<span class="t" style="left:339px;top:204px;font-size:11.8px;line-height:20px;color:#000;font-weight:bold;letter-spacing:-0.23px;width:32px;text-align:left;">11.8K</span>
<span class="t" style="left:519px;top:204px;font-size:11.3px;line-height:20px;color:#c80000;font-weight:bold;letter-spacing:0.22px;width:33px;text-align:right;">30</span>
<span class="t" style="left:557.4px;top:204px;font-size:11.3px;line-height:20px;color:#000090;font-weight:bold;letter-spacing:0.22px;width:38px;text-align:center;">105</span>
<span class="t" style="left:595.8px;top:204px;font-size:11.3px;line-height:20px;color:#fff;font-weight:bold;letter-spacing:0.22px;width:40px;text-align:center;">121</span>
<span class="t" style="left:637px;top:204px;font-size:11.3px;line-height:20px;color:#1aa0a0;font-weight:bold;letter-spacing:0.22px;width:41px;text-align:center;">107</span>
<span class="t" style="left:727px;top:204px;font-size:11.3px;line-height:20px;color:#c80000;font-weight:bold;letter-spacing:0.36px;">5,3,3,5,4,4,69</span>
<div style="left:3px;top:224px;width:67px;height:20px;background:#ee9538;"></div>
<div style="left:306px;top:225px;width:26px;height:21px;background:#ff5050;"></div>
<div style="left:333px;top:225px;width:23px;height:21px;background:#4040ff;"></div>
<div style="left:1px;top:244px;width:478px;height:1px;background:#213f3f;"></div>
<div style="left:480px;top:244px;width:38px;height:1px;background:#0a2048;"></div>
<div style="left:519px;top:244px;width:77px;height:1px;background:#213f3f;"></div>
<div style="left:597px;top:244px;width:40px;height:1px;background:#4a1414;"></div>
<div style="left:638px;top:244px;width:299px;height:1px;background:#213f3f;"></div>
<div style="left:118px;top:225px;width:44px;height:19px;background:#406e6e;box-shadow:0 0 0 1px #8e8e8e"></div>
<div style="left:183px;top:225px;width:37px;height:19px;background:#ff4848;box-shadow:0 0 0 1px #8e8e8e"></div>
<div style="left:3px;top:244px;width:67px;height:1px;background:#ab6b28;"></div>
<span class="t" style="left:8px;top:226px;font-size:13.6px;line-height:20px;color:#000;font-weight:bold;letter-spacing:0.5px;">68567</span>
<span class="t" style="left:79.2px;top:226px;font-size:13.6px;line-height:20px;color:#000;font-weight:bold;letter-spacing:0.6px;width:79.6px;text-align:right;">26058</span>
<span class="t" style="left:162px;top:226px;font-size:9.8px;line-height:20px;color:#000;font-weight:bold;letter-spacing:0.36px;width:50.8px;text-align:right;-webkit-text-stroke:0.3px #000">-1532</span>
<span class="t" style="left:222px;top:226px;font-size:11.8px;line-height:20px;color:#000;font-weight:bold;letter-spacing:0.22px;width:67px;text-align:center;">4412.00</span>
<span class="t" style="left:296px;top:225px;font-size:11.8px;line-height:20px;color:#000;font-weight:bold;letter-spacing:-0.23px;width:32px;text-align:left;">13.6K</span>
<span class="t" style="left:339px;top:225px;font-size:11.8px;line-height:20px;color:#000;font-weight:bold;letter-spacing:-0.23px;width:32px;text-align:left;">12.1K</span>
<span class="t" style="left:519px;top:225px;font-size:11.3px;line-height:20px;color:#c80000;font-weight:bold;letter-spacing:0.22px;width:33px;text-align:right;">151</span>
<span class="t" style="left:557.4px;top:225px;font-size:11.3px;line-height:20px;color:#000090;font-weight:bold;letter-spacing:0.22px;width:38px;text-align:center;">3</span>
<span class="t" style="left:595.8px;top:225px;font-size:11.3px;line-height:20px;color:#fff;font-weight:bold;letter-spacing:0.22px;width:40px;text-align:center;">57</span>
<span class="t" style="left:637px;top:225px;font-size:11.3px;line-height:20px;color:#1aa0a0;font-weight:bold;letter-spacing:0.22px;width:41px;text-align:center;">53</span>
<span class="t" style="left:727px;top:225px;font-size:11.3px;line-height:20px;color:#c80000;font-weight:bold;letter-spacing:0.36px;">4,5,3,3,6,3,3,4,3</span>
<div style="left:3px;top:245px;width:57px;height:20px;background:#efc038;"></div>
<div style="left:313px;top:246px;width:19px;height:21px;background:#ff5050;"></div>
<div style="left:333px;top:246px;width:16px;height:21px;background:#4040ff;"></div>
<div style="left:1px;top:265px;width:478px;height:1px;background:#213f3f;"></div>
<div style="left:480px;top:265px;width:38px;height:1px;background:#0a2048;"></div>
<div style="left:519px;top:265px;width:77px;height:1px;background:#213f3f;"></div>
<div style="left:597px;top:265px;width:40px;height:1px;background:#4a1414;"></div>
<div style="left:638px;top:265px;width:299px;height:1px;background:#213f3f;"></div>
<div style="left:130px;top:246px;width:32px;height:19px;background:#406e6e;box-shadow:0 0 0 1px #8e8e8e"></div>
<div style="left:192px;top:246px;width:28px;height:19px;background:#ff4848;box-shadow:0 0 0 1px #8e8e8e"></div>
<div style="left:3px;top:265px;width:57px;height:1px;background:#ac8a28;"></div>
<span class="t" style="left:8px;top:247px;font-size:13.6px;line-height:20px;color:#000;font-weight:bold;letter-spacing:0.5px;">58645</span>
<span class="t" style="left:79.2px;top:247px;font-size:13.6px;line-height:20px;color:#000;font-weight:bold;letter-spacing:0.6px;width:79.6px;text-align:right;">18670</span>
<span class="t" style="left:162px;top:247px;font-size:9.8px;line-height:20px;color:#000;font-weight:bold;letter-spacing:0.36px;width:50.8px;text-align:right;-webkit-text-stroke:0.3px #000">-1192</span>
<span class="t" style="left:222px;top:247px;font-size:11.8px;line-height:20px;color:#000;font-weight:bold;letter-spacing:0.22px;width:67px;text-align:center;">4411.75</span>
<span class="t" style="left:296px;top:246px;font-size:11.8px;line-height:20px;color:#000;font-weight:bold;letter-spacing:0.22px;width:32px;text-align:left;">9907</span>
<span class="t" style="left:339px;top:246px;font-size:11.8px;line-height:20px;color:#000;font-weight:bold;letter-spacing:0.22px;width:32px;text-align:left;">8738</span>
<span class="t" style="left:519px;top:246px;font-size:11.3px;line-height:20px;color:#c80000;font-weight:bold;letter-spacing:0.22px;width:33px;text-align:right;">79</span>
<span class="t" style="left:595.8px;top:246px;font-size:11.3px;line-height:20px;color:#fff;font-weight:bold;letter-spacing:0.22px;width:40px;text-align:center;">57</span>
<span class="t" style="left:637px;top:246px;font-size:11.3px;line-height:20px;color:#c80000;font-weight:bold;letter-spacing:0.22px;width:41px;text-align:center;">-38</span>
<span class="t" style="left:727px;top:246px;font-size:11.3px;line-height:20px;color:#c80000;font-weight:bold;letter-spacing:0.36px;">5,5,4,3,5,3,5,5,5</span>
<div style="left:3px;top:266px;width:60px;height:20px;background:#efc038;"></div>
<div style="left:313px;top:267px;width:19px;height:21px;background:#ff5050;"></div>
<div style="left:333px;top:267px;width:19px;height:21px;background:#4040ff;"></div>
<div style="left:1px;top:286px;width:478px;height:1px;background:#213f3f;"></div>
<div style="left:480px;top:286px;width:38px;height:1px;background:#0a2048;"></div>
<div style="left:519px;top:286px;width:77px;height:1px;background:#213f3f;"></div>
<div style="left:597px;top:286px;width:40px;height:1px;background:#4a1414;"></div>
<div style="left:638px;top:286px;width:299px;height:1px;background:#213f3f;"></div>
<div style="left:128px;top:267px;width:34px;height:19px;background:#406e6e;box-shadow:0 0 0 1px #8e8e8e"></div>
<div style="left:205px;top:267px;width:15px;height:19px;background:#4040ff;box-shadow:0 0 0 1px #8e8e8e"></div>
<div style="left:3px;top:286px;width:60px;height:1px;background:#ac8a28;"></div>
<span class="t" style="left:8px;top:268px;font-size:13.6px;line-height:20px;color:#000;font-weight:bold;letter-spacing:0.5px;">61927</span>
<span class="t" style="left:79.2px;top:268px;font-size:13.6px;line-height:20px;color:#000;font-weight:bold;letter-spacing:0.6px;width:79.6px;text-align:right;">20091</span>
<span class="t" style="left:165px;top:268px;font-size:9.8px;line-height:20px;color:#000;font-weight:bold;letter-spacing:0.36px;width:50.8px;text-align:right;-webkit-text-stroke:0.3px #000">695</span>
<span class="t" style="left:222px;top:268px;font-size:11.8px;line-height:20px;color:#000;font-weight:bold;letter-spacing:0.22px;width:67px;text-align:center;">4411.50</span>
<span class="t" style="left:296px;top:267px;font-size:11.8px;line-height:20px;color:#000;font-weight:bold;letter-spacing:0.22px;width:32px;text-align:left;">9698</span>
<span class="t" style="left:339px;top:267px;font-size:11.8px;line-height:20px;color:#000;font-weight:bold;letter-spacing:-0.23px;width:32px;text-align:left;">10.4K</span>
<span class="t" style="left:519px;top:267px;font-size:11.3px;line-height:20px;color:#c80000;font-weight:bold;letter-spacing:0.22px;width:33px;text-align:right;">30</span>
<span class="t" style="left:557.4px;top:267px;font-size:11.3px;line-height:20px;color:#000090;font-weight:bold;letter-spacing:0.22px;width:38px;text-align:center;">73</span>
<span class="t" style="left:595.8px;top:267px;font-size:11.3px;line-height:20px;color:#fff;font-weight:bold;letter-spacing:0.22px;width:40px;text-align:center;">67</span>
<span class="t" style="left:637px;top:267px;font-size:11.3px;line-height:20px;color:#c80000;font-weight:bold;letter-spacing:0.22px;width:41px;text-align:center;">-7</span>
<span class="t" style="left:727px;top:267px;font-size:11.3px;line-height:20px;color:#c80000;font-weight:bold;letter-spacing:0.36px;">6,3,9,6,3,3,5,5,5,4,3</span>
<div style="left:3px;top:287px;width:63px;height:20px;background:#ee9538;"></div>
<div style="left:311px;top:288px;width:21px;height:21px;background:#ff5050;"></div>
<div style="left:333px;top:288px;width:20px;height:21px;background:#4040ff;"></div>
<div style="left:1px;top:307px;width:478px;height:1px;background:#213f3f;"></div>
<div style="left:480px;top:307px;width:38px;height:1px;background:#0a2048;"></div>
<div style="left:519px;top:307px;width:77px;height:1px;background:#213f3f;"></div>
<div style="left:597px;top:307px;width:40px;height:1px;background:#4a1414;"></div>
<div style="left:638px;top:307px;width:299px;height:1px;background:#213f3f;"></div>
<div style="left:126px;top:288px;width:36px;height:19px;background:#406e6e;box-shadow:0 0 0 1px #8e8e8e"></div>
<div style="left:215px;top:288px;width:5px;height:19px;background:#ff4848;box-shadow:0 0 0 1px #8e8e8e"></div>
<div style="left:3px;top:307px;width:63px;height:1px;background:#ab6b28;"></div>
<span class="t" style="left:8px;top:289px;font-size:13.6px;line-height:20px;color:#000;font-weight:bold;letter-spacing:0.5px;">65018</span>
<span class="t" style="left:79.2px;top:289px;font-size:13.6px;line-height:20px;color:#000;font-weight:bold;letter-spacing:0.6px;width:79.6px;text-align:right;">21522</span>
<span class="t" style="left:162px;top:289px;font-size:9.8px;line-height:20px;color:#000;font-weight:bold;letter-spacing:0.36px;width:50.8px;text-align:right;-webkit-text-stroke:0.3px #000">-304</span>
<span class="t" style="left:222px;top:289px;font-size:11.8px;line-height:20px;color:#000;font-weight:bold;letter-spacing:0.22px;width:67px;text-align:center;">4411.25</span>
<span class="t" style="left:296px;top:288px;font-size:11.8px;line-height:20px;color:#000;font-weight:bold;letter-spacing:-0.23px;width:32px;text-align:left;">10.9K</span>
<span class="t" style="left:339px;top:288px;font-size:11.8px;line-height:20px;color:#000;font-weight:bold;letter-spacing:-0.23px;width:32px;text-align:left;">10.6K</span>
<span class="t" style="left:519px;top:288px;font-size:11.3px;line-height:20px;color:#c80000;font-weight:bold;letter-spacing:0.22px;width:33px;text-align:right;">197</span>
<span class="t" style="left:557.4px;top:288px;font-size:11.3px;line-height:20px;color:#000090;font-weight:bold;letter-spacing:0.22px;width:38px;text-align:center;">4</span>
<span class="t" style="left:595.8px;top:288px;font-size:11.3px;line-height:20px;color:#fff;font-weight:bold;letter-spacing:0.22px;width:40px;text-align:center;">59</span>
<span class="t" style="left:637px;top:288px;font-size:11.3px;line-height:20px;color:#1aa0a0;font-weight:bold;letter-spacing:0.22px;width:41px;text-align:center;">58</span>
<span class="t" style="left:727px;top:288px;font-size:11.3px;line-height:20px;color:#c80000;font-weight:bold;letter-spacing:0.36px;">5,3,3,6,3,3,3,5,5,5</span>
<div style="left:3px;top:308px;width:63px;height:20px;background:#ee9538;"></div>
<div style="left:312px;top:309px;width:20px;height:21px;background:#ff5050;"></div>
<div style="left:333px;top:309px;width:18px;height:21px;background:#4040ff;"></div>
<div style="left:1px;top:328px;width:478px;height:1px;background:#213f3f;"></div>
<div style="left:480px;top:328px;width:38px;height:1px;background:#0a2048;"></div>
<div style="left:519px;top:328px;width:77px;height:1px;background:#213f3f;"></div>
<div style="left:597px;top:328px;width:40px;height:1px;background:#4a1414;"></div>
<div style="left:638px;top:328px;width:299px;height:1px;background:#213f3f;"></div>
<div style="left:129px;top:309px;width:33px;height:19px;background:#406e6e;box-shadow:0 0 0 1px #8e8e8e"></div>
<div style="left:200px;top:309px;width:20px;height:19px;background:#ff4848;box-shadow:0 0 0 1px #8e8e8e"></div>
<div style="left:3px;top:328px;width:63px;height:1px;background:#ab6b28;"></div>
<span class="t" style="left:8px;top:310px;font-size:13.6px;line-height:20px;color:#000;font-weight:bold;letter-spacing:0.5px;">64597</span>
<span class="t" style="left:79.2px;top:310px;font-size:13.6px;line-height:20px;color:#000;font-weight:bold;letter-spacing:0.6px;width:79.6px;text-align:right;">19707</span>
<span class="t" style="left:162px;top:310px;font-size:9.8px;line-height:20px;color:#000;font-weight:bold;letter-spacing:0.36px;width:50.8px;text-align:right;-webkit-text-stroke:0.3px #000">-857</span>
<span class="t" style="left:222px;top:310px;font-size:11.8px;line-height:20px;color:#000;font-weight:bold;letter-spacing:0.22px;width:67px;text-align:center;">4411.00</span>
<span class="t" style="left:296px;top:309px;font-size:11.8px;line-height:20px;color:#000;font-weight:bold;letter-spacing:-0.23px;width:32px;text-align:left;">10.3K</span>
<span class="t" style="left:339px;top:309px;font-size:11.8px;line-height:20px;color:#000;font-weight:bold;letter-spacing:0.22px;width:32px;text-align:left;">9425</span>
<span class="t" style="left:519px;top:309px;font-size:11.3px;line-height:20px;color:#c80000;font-weight:bold;letter-spacing:0.22px;width:33px;text-align:right;">63</span>
<span class="t" style="left:595.8px;top:309px;font-size:11.3px;line-height:20px;color:#fff;font-weight:bold;letter-spacing:0.22px;width:40px;text-align:center;">65</span>
<span class="t" style="left:637px;top:309px;font-size:11.3px;line-height:20px;color:#c80000;font-weight:bold;letter-spacing:0.22px;width:41px;text-align:center;">-74</span>
<span class="t" style="left:727px;top:309px;font-size:11.3px;line-height:20px;color:#c80000;font-weight:bold;letter-spacing:0.36px;">5,3,5,3,5,3,9,3,3,4,6</span>
<div style="left:3px;top:329px;width:60px;height:20px;background:#efc038;"></div>
<div style="left:315px;top:330px;width:17px;height:21px;background:#ff5050;"></div>
<div style="left:333px;top:330px;width:18px;height:21px;background:#4040ff;"></div>
<div style="left:1px;top:349px;width:478px;height:1px;background:#213f3f;"></div>
<div style="left:480px;top:349px;width:38px;height:1px;background:#0a2048;"></div>
<div style="left:519px;top:349px;width:77px;height:1px;background:#213f3f;"></div>
<div style="left:597px;top:349px;width:40px;height:1px;background:#4a1414;"></div>
<div style="left:638px;top:349px;width:299px;height:1px;background:#213f3f;"></div>
<div style="left:131px;top:330px;width:31px;height:19px;background:#406e6e;box-shadow:0 0 0 1px #8e8e8e"></div>
<div style="left:203px;top:330px;width:17px;height:19px;background:#4040ff;box-shadow:0 0 0 1px #8e8e8e"></div>
<div style="left:3px;top:349px;width:60px;height:1px;background:#ac8a28;"></div>
<span class="t" style="left:8px;top:331px;font-size:13.6px;line-height:20px;color:#000;font-weight:bold;letter-spacing:0.5px;">61853</span>
<span class="t" style="left:79.2px;top:331px;font-size:13.6px;line-height:20px;color:#000;font-weight:bold;letter-spacing:0.6px;width:79.6px;text-align:right;">18328</span>
<span class="t" style="left:165px;top:331px;font-size:9.8px;line-height:20px;color:#000;font-weight:bold;letter-spacing:0.36px;width:50.8px;text-align:right;-webkit-text-stroke:0.3px #000">742</span>
<span class="t" style="left:222px;top:331px;font-size:11.8px;line-height:20px;color:#000;font-weight:bold;letter-spacing:0.22px;width:67px;text-align:center;">4410.75</span>
<span class="t" style="left:296px;top:330px;font-size:11.8px;line-height:20px;color:#000;font-weight:bold;letter-spacing:0.22px;width:32px;text-align:left;">8777</span>
<span class="t" style="left:339px;top:330px;font-size:11.8px;line-height:20px;color:#000;font-weight:bold;letter-spacing:0.22px;width:32px;text-align:left;">9510</span>
<span class="t" style="left:519px;top:330px;font-size:11.3px;line-height:20px;color:#c80000;font-weight:bold;letter-spacing:0.22px;width:33px;text-align:right;">16</span>
<span class="t" style="left:595.8px;top:330px;font-size:11.3px;line-height:20px;color:#fff;font-weight:bold;letter-spacing:0.22px;width:40px;text-align:center;">47</span>
<span class="t" style="left:637px;top:330px;font-size:11.3px;line-height:20px;color:#c80000;font-weight:bold;letter-spacing:0.22px;width:41px;text-align:center;">-10</span>
<span class="t" style="left:727px;top:330px;font-size:11.3px;line-height:20px;color:#c80000;font-weight:bold;letter-spacing:0.36px;">4,3,3,3,4,3,3,5,3</span>
<div style="left:3px;top:350px;width:59px;height:21px;background:#efc038;"></div>
<div style="left:310px;top:351px;width:22px;height:21px;background:#ff5050;"></div>
<div style="left:333px;top:351px;width:19px;height:21px;background:#4040ff;"></div>
<div style="left:222px;top:352px;width:67px;height:16px;background:#ffff00;"></div>
<div style="left:1px;top:371px;width:478px;height:2px;background:#000;"></div>
<div style="left:480px;top:371px;width:38px;height:2px;background:#000;"></div>
<div style="left:519px;top:371px;width:77px;height:2px;background:#000;"></div>
<div style="left:597px;top:371px;width:40px;height:2px;background:#000;"></div>
<div style="left:638px;top:371px;width:299px;height:2px;background:#000;"></div>
<div style="left:125px;top:351px;width:37px;height:19px;background:#406e6e;box-shadow:0 0 0 1px #8e8e8e"></div>
<div style="left:188px;top:351px;width:32px;height:19px;background:#ff4848;box-shadow:0 0 0 1px #8e8e8e"></div>
<div style="left:3px;top:370px;width:59px;height:1px;background:#efc038;"></div>
<div style="left:3px;top:371px;width:59px;height:2px;background:#a78627;"></div>
<span class="t" style="left:8px;top:352px;font-size:13.6px;line-height:20px;color:#000;font-weight:bold;letter-spacing:0.5px;">60259</span>
<span class="t" style="left:79.2px;top:352px;font-size:13.6px;line-height:20px;color:#000;font-weight:bold;letter-spacing:0.6px;width:79.6px;text-align:right;">21737</span>
<span class="t" style="left:162px;top:352px;font-size:9.8px;line-height:20px;color:#000;font-weight:bold;letter-spacing:0.36px;width:50.8px;text-align:right;-webkit-text-stroke:0.3px #000">-1345</span>
<span class="t" style="left:222px;top:352px;font-size:11.8px;line-height:20px;color:#000;font-weight:bold;letter-spacing:0.22px;width:67px;text-align:center;">4410.50</span>
<span class="t" style="left:296px;top:351px;font-size:11.8px;line-height:20px;color:#000;font-weight:bold;letter-spacing:-0.23px;width:32px;text-align:left;">11.5K</span>
<span class="t" style="left:339px;top:351px;font-size:11.8px;line-height:20px;color:#000;font-weight:bold;letter-spacing:-0.23px;width:32px;text-align:left;">10.1K</span>
<span class="t" style="left:375px;top:351px;font-size:11.3px;line-height:20px;color:#ff0000;font-weight:bold;letter-spacing:0.22px;width:65px;text-align:center;">Y-Lo</span>
<span class="t" style="left:519px;top:351px;font-size:11.3px;line-height:20px;color:#c80000;font-weight:bold;letter-spacing:0.22px;width:33px;text-align:right;">21</span>
<div style="left:558px;top:352px;width:37px;height:16px;background:#00ff00;"></div>
<span class="t" style="left:557.4px;top:351px;font-size:11.3px;line-height:20px;color:#000090;font-weight:bold;letter-spacing:0.22px;width:38px;text-align:center;">13</span>
<span class="t" style="left:595.8px;top:351px;font-size:11.3px;line-height:20px;color:#fff;font-weight:bold;letter-spacing:0.22px;width:40px;text-align:center;">51</span>
<span class="t" style="left:637px;top:351px;font-size:11.3px;line-height:20px;color:#c80000;font-weight:bold;letter-spacing:0.22px;width:41px;text-align:center;">-16</span>
<div style="left:680px;top:352px;width:42px;height:16px;background:#808080;"></div>
<span class="t" style="left:679px;top:351px;font-size:11.3px;line-height:20px;color:#000;font-weight:bold;letter-spacing:0.22px;width:42px;text-align:center;">13</span>
<span class="t" style="left:727px;top:351px;font-size:11.3px;line-height:20px;color:#c80000;font-weight:bold;letter-spacing:0.36px;">20,3,5,6,3</span>
<div style="left:3px;top:373px;width:54px;height:19px;background:#efc038;"></div>
<div style="left:315px;top:372px;width:17px;height:21px;background:#ff5050;"></div>
<div style="left:333px;top:372px;width:16px;height:21px;background:#4040ff;"></div>
<div style="left:1px;top:392px;width:478px;height:1px;background:#213f3f;"></div>
<div style="left:480px;top:392px;width:38px;height:1px;background:#0a2048;"></div>
<div style="left:519px;top:392px;width:77px;height:1px;background:#213f3f;"></div>
<div style="left:597px;top:392px;width:40px;height:1px;background:#4a1414;"></div>
<div style="left:638px;top:392px;width:299px;height:1px;background:#213f3f;"></div>
<div style="left:133px;top:372px;width:29px;height:19px;background:#406e6e;box-shadow:0 0 0 1px #8e8e8e"></div>
<div style="left:217px;top:372px;width:3px;height:19px;background:#ff4848;box-shadow:0 0 0 1px #8e8e8e"></div>
<div style="left:3px;top:392px;width:54px;height:1px;background:#ac8a28;"></div>
<span class="t" style="left:8px;top:374px;font-size:13.6px;line-height:20px;color:#000;font-weight:bold;letter-spacing:0.5px;">54842</span>
<span class="t" style="left:79.2px;top:374px;font-size:13.6px;line-height:20px;color:#000;font-weight:bold;letter-spacing:0.6px;width:79.6px;text-align:right;">17291</span>
<span class="t" style="left:222px;top:374px;font-size:11.8px;line-height:20px;color:#000;font-weight:bold;letter-spacing:0.22px;width:67px;text-align:center;">4410.25</span>
<span class="t" style="left:296px;top:373px;font-size:11.8px;line-height:20px;color:#000;font-weight:bold;letter-spacing:0.22px;width:32px;text-align:left;">8692</span>
<span class="t" style="left:339px;top:373px;font-size:11.8px;line-height:20px;color:#000;font-weight:bold;letter-spacing:0.22px;width:32px;text-align:left;">8473</span>
<span class="t" style="left:439.6px;top:373px;font-size:11.3px;line-height:20px;color:#1aa0a0;font-weight:bold;letter-spacing:0.22px;width:39px;text-align:center;">34</span>
<span class="t" style="left:479px;top:373px;font-size:11.3px;line-height:20px;color:#fff;font-weight:bold;letter-spacing:0.22px;width:39px;text-align:center;">39</span>
<div style="left:519px;top:374px;width:38px;height:16px;background:#fff;"></div>
<span class="t" style="left:519px;top:373px;font-size:11.3px;line-height:20px;color:#000;font-weight:bold;letter-spacing:0.22px;width:33px;text-align:right;">1</span>
<span class="t" style="left:557.4px;top:373px;font-size:11.3px;line-height:20px;color:#000090;font-weight:bold;letter-spacing:0.22px;width:38px;text-align:center;">130</span>
<span class="t" style="left:727px;top:373px;font-size:11.3px;line-height:20px;color:#000090;font-weight:bold;letter-spacing:0.36px;">5,9,3,5,3,5</span>
<div style="left:3px;top:394px;width:58px;height:19px;background:#efc038;"></div>
<div style="left:313px;top:393px;width:19px;height:21px;background:#ff5050;"></div>
<div style="left:333px;top:393px;width:19px;height:21px;background:#4040ff;"></div>
<div style="left:1px;top:413px;width:478px;height:1px;background:#213f3f;"></div>
<div style="left:480px;top:413px;width:38px;height:1px;background:#0a2048;"></div>
<div style="left:519px;top:413px;width:77px;height:1px;background:#213f3f;"></div>
<div style="left:597px;top:413px;width:40px;height:1px;background:#4a1414;"></div>
<div style="left:638px;top:413px;width:299px;height:1px;background:#213f3f;"></div>
<div style="left:127px;top:393px;width:35px;height:19px;background:#406e6e;box-shadow:0 0 0 1px #8e8e8e"></div>
<div style="left:215px;top:393px;width:5px;height:19px;background:#4040ff;box-shadow:0 0 0 1px #8e8e8e"></div>
<div style="left:3px;top:413px;width:58px;height:1px;background:#ac8a28;"></div>
<span class="t" style="left:8px;top:395px;font-size:13.6px;line-height:20px;color:#000;font-weight:bold;letter-spacing:0.5px;">59456</span>
<span class="t" style="left:79.2px;top:395px;font-size:13.6px;line-height:20px;color:#000;font-weight:bold;letter-spacing:0.6px;width:79.6px;text-align:right;">20551</span>
<span class="t" style="left:165px;top:395px;font-size:9.8px;line-height:20px;color:#000;font-weight:bold;letter-spacing:0.36px;width:50.8px;text-align:right;-webkit-text-stroke:0.3px #000">309</span>
<span class="t" style="left:222px;top:395px;font-size:11.8px;line-height:20px;color:#000;font-weight:bold;letter-spacing:0.22px;width:67px;text-align:center;">4410.00</span>
<span class="t" style="left:296px;top:394px;font-size:11.8px;line-height:20px;color:#000;font-weight:bold;letter-spacing:-0.23px;width:32px;text-align:left;">10.0K</span>
<span class="t" style="left:339px;top:394px;font-size:11.8px;line-height:20px;color:#000;font-weight:bold;letter-spacing:-0.23px;width:32px;text-align:left;">10.3K</span>
<span class="t" style="left:439.6px;top:394px;font-size:11.3px;line-height:20px;color:#1aa0a0;font-weight:bold;letter-spacing:0.22px;width:39px;text-align:center;">1</span>
<span class="t" style="left:479px;top:394px;font-size:11.3px;line-height:20px;color:#fff;font-weight:bold;letter-spacing:0.22px;width:39px;text-align:center;">74</span>
<span class="t" style="left:519px;top:394px;font-size:11.3px;line-height:20px;color:#c80000;font-weight:bold;letter-spacing:0.22px;width:33px;text-align:right;">15</span>
<span class="t" style="left:557.4px;top:394px;font-size:11.3px;line-height:20px;color:#000090;font-weight:bold;letter-spacing:0.22px;width:38px;text-align:center;">72</span>
<span class="t" style="left:727px;top:394px;font-size:11.3px;line-height:20px;color:#000090;font-weight:bold;letter-spacing:0.36px;">17,3,3,4,4,3,5,9,15</span>
<div style="left:3px;top:415px;width:58px;height:19px;background:#efc038;"></div>
<div style="left:311px;top:414px;width:21px;height:21px;background:#ff5050;"></div>
<div style="left:333px;top:414px;width:24px;height:21px;background:#4040ff;"></div>
<div style="left:1px;top:434px;width:478px;height:1px;background:#213f3f;"></div>
<div style="left:480px;top:434px;width:38px;height:1px;background:#0a2048;"></div>
<div style="left:519px;top:434px;width:77px;height:1px;background:#213f3f;"></div>
<div style="left:597px;top:434px;width:40px;height:1px;background:#4a1414;"></div>
<div style="left:638px;top:434px;width:299px;height:1px;background:#213f3f;"></div>
<div style="left:121px;top:414px;width:41px;height:19px;background:#406e6e;box-shadow:0 0 0 1px #8e8e8e"></div>
<div style="left:172px;top:414px;width:48px;height:19px;background:#4040ff;box-shadow:0 0 0 1px #8e8e8e"></div>
<div style="left:3px;top:434px;width:58px;height:1px;background:#ac8a28;"></div>
<span class="t" style="left:8px;top:416px;font-size:13.6px;line-height:20px;color:#000;font-weight:bold;letter-spacing:0.5px;">59553</span>
<span class="t" style="left:79.2px;top:416px;font-size:13.6px;line-height:20px;color:#000;font-weight:bold;letter-spacing:0.6px;width:79.6px;text-align:right;">24142</span>
<span class="t" style="left:165px;top:416px;font-size:9.8px;line-height:20px;color:#000;font-weight:bold;letter-spacing:0.36px;width:50.8px;text-align:right;-webkit-text-stroke:0.3px #000">1944</span>
<span class="t" style="left:222px;top:416px;font-size:11.8px;line-height:20px;color:#000;font-weight:bold;letter-spacing:0.22px;width:67px;text-align:center;">4409.75</span>
<span class="t" style="left:296px;top:415px;font-size:11.8px;line-height:20px;color:#000;font-weight:bold;letter-spacing:-0.23px;width:32px;text-align:left;">11.0K</span>
<span class="t" style="left:339px;top:415px;font-size:11.8px;line-height:20px;color:#000;font-weight:bold;letter-spacing:-0.23px;width:32px;text-align:left;">13.0K</span>
<span class="t" style="left:439.6px;top:415px;font-size:11.3px;line-height:20px;color:#1aa0a0;font-weight:bold;letter-spacing:0.22px;width:39px;text-align:center;">2</span>
<span class="t" style="left:479px;top:415px;font-size:11.3px;line-height:20px;color:#fff;font-weight:bold;letter-spacing:0.22px;width:39px;text-align:center;">77</span>
<span class="t" style="left:519px;top:415px;font-size:11.3px;line-height:20px;color:#c80000;font-weight:bold;letter-spacing:0.22px;width:33px;text-align:right;">8</span>
<span class="t" style="left:557.4px;top:415px;font-size:11.3px;line-height:20px;color:#000090;font-weight:bold;letter-spacing:0.22px;width:38px;text-align:center;">49</span>
<span class="t" style="left:727px;top:415px;font-size:11.3px;line-height:20px;color:#000090;font-weight:bold;letter-spacing:0.36px;">53,3,3,3,9</span>
<div style="left:3px;top:436px;width:59px;height:19px;background:#efc038;"></div>
<div style="left:307px;top:435px;width:25px;height:21px;background:#ff5050;"></div>
<div style="left:333px;top:435px;width:21px;height:21px;background:#4040ff;"></div>
<div style="left:1px;top:455px;width:478px;height:1px;background:#213f3f;"></div>
<div style="left:480px;top:455px;width:38px;height:1px;background:#0a2048;"></div>
<div style="left:519px;top:455px;width:77px;height:1px;background:#213f3f;"></div>
<div style="left:597px;top:455px;width:40px;height:1px;background:#4a1414;"></div>
<div style="left:638px;top:455px;width:299px;height:1px;background:#213f3f;"></div>
<div style="left:121px;top:435px;width:41px;height:19px;background:#406e6e;box-shadow:0 0 0 1px #8e8e8e"></div>
<div style="left:184px;top:435px;width:36px;height:19px;background:#ff4848;box-shadow:0 0 0 1px #8e8e8e"></div>
<div style="left:3px;top:455px;width:59px;height:1px;background:#ac8a28;"></div>
<span class="t" style="left:8px;top:437px;font-size:13.6px;line-height:20px;color:#000;font-weight:bold;letter-spacing:0.5px;">60433</span>
<span class="t" style="left:79.2px;top:437px;font-size:13.6px;line-height:20px;color:#000;font-weight:bold;letter-spacing:0.6px;width:79.6px;text-align:right;">24281</span>
<span class="t" style="left:162px;top:437px;font-size:9.8px;line-height:20px;color:#000;font-weight:bold;letter-spacing:0.36px;width:50.8px;text-align:right;-webkit-text-stroke:0.3px #000">-1489</span>
<span class="t" style="left:222px;top:437px;font-size:11.8px;line-height:20px;color:#000;font-weight:bold;letter-spacing:0.22px;width:67px;text-align:center;">4409.50</span>
<span class="t" style="left:296px;top:436px;font-size:11.8px;line-height:20px;color:#000;font-weight:bold;letter-spacing:-0.23px;width:32px;text-align:left;">12.9K</span>
<span class="t" style="left:339px;top:436px;font-size:11.8px;line-height:20px;color:#000;font-weight:bold;letter-spacing:-0.23px;width:32px;text-align:left;">11.4K</span>
<span class="t" style="left:439.6px;top:436px;font-size:11.3px;line-height:20px;color:#c80000;font-weight:bold;letter-spacing:0.22px;width:39px;text-align:center;">-4</span>
<span class="t" style="left:479px;top:436px;font-size:11.3px;line-height:20px;color:#fff;font-weight:bold;letter-spacing:0.22px;width:39px;text-align:center;">69</span>
<span class="t" style="left:519px;top:436px;font-size:11.3px;line-height:20px;color:#c80000;font-weight:bold;letter-spacing:0.22px;width:33px;text-align:right;">24</span>
<span class="t" style="left:557.4px;top:436px;font-size:11.3px;line-height:20px;color:#000090;font-weight:bold;letter-spacing:0.22px;width:38px;text-align:center;">26</span>
<span class="t" style="left:727px;top:436px;font-size:11.3px;line-height:20px;color:#000090;font-weight:bold;letter-spacing:0.36px;">4,10,3,9,3,3,3,7,7,3</span>
<div style="left:3px;top:457px;width:52px;height:19px;background:#efc038;"></div>
<div style="left:311px;top:456px;width:21px;height:21px;background:#ff5050;"></div>
<div style="left:333px;top:456px;width:19px;height:21px;background:#4040ff;"></div>
<div style="left:1px;top:476px;width:478px;height:1px;background:#213f3f;"></div>
<div style="left:480px;top:476px;width:38px;height:1px;background:#0a2048;"></div>
<div style="left:519px;top:476px;width:77px;height:1px;background:#213f3f;"></div>
<div style="left:597px;top:476px;width:40px;height:1px;background:#4a1414;"></div>
<div style="left:638px;top:476px;width:299px;height:1px;background:#213f3f;"></div>
<div style="left:126px;top:456px;width:36px;height:19px;background:#406e6e;box-shadow:0 0 0 1px #8e8e8e"></div>
<div style="left:211px;top:456px;width:9px;height:19px;background:#ff4848;box-shadow:0 0 0 1px #8e8e8e"></div>
<div style="left:3px;top:476px;width:52px;height:1px;background:#ac8a28;"></div>
<span class="t" style="left:8px;top:458px;font-size:13.6px;line-height:20px;color:#000;font-weight:bold;letter-spacing:0.5px;">53440</span>
<span class="t" style="left:79.2px;top:458px;font-size:13.6px;line-height:20px;color:#000;font-weight:bold;letter-spacing:0.6px;width:79.6px;text-align:right;">21265</span>
<span class="t" style="left:162px;top:458px;font-size:9.8px;line-height:20px;color:#000;font-weight:bold;letter-spacing:0.36px;width:50.8px;text-align:right;-webkit-text-stroke:0.3px #000">-443</span>
<span class="t" style="left:222px;top:458px;font-size:11.8px;line-height:20px;color:#000;font-weight:bold;letter-spacing:0.22px;width:67px;text-align:center;">4409.25</span>
<span class="t" style="left:296px;top:457px;font-size:11.8px;line-height:20px;color:#000;font-weight:bold;letter-spacing:-0.23px;width:32px;text-align:left;">10.9K</span>
<span class="t" style="left:339px;top:457px;font-size:11.8px;line-height:20px;color:#000;font-weight:bold;letter-spacing:-0.23px;width:32px;text-align:left;">10.4K</span>
<span class="t" style="left:439.6px;top:457px;font-size:11.3px;line-height:20px;color:#1aa0a0;font-weight:bold;letter-spacing:0.22px;width:39px;text-align:center;">87</span>
<span class="t" style="left:479px;top:457px;font-size:11.3px;line-height:20px;color:#fff;font-weight:bold;letter-spacing:0.22px;width:39px;text-align:center;">87</span>
<span class="t" style="left:519px;top:457px;font-size:11.3px;line-height:20px;color:#c80000;font-weight:bold;letter-spacing:0.22px;width:33px;text-align:right;">3</span>
<span class="t" style="left:557.4px;top:457px;font-size:11.3px;line-height:20px;color:#000090;font-weight:bold;letter-spacing:0.22px;width:38px;text-align:center;">41</span>
<span class="t" style="left:727px;top:457px;font-size:11.3px;line-height:20px;color:#000090;font-weight:bold;letter-spacing:0.36px;">10,4,6,6,3,3,3,9,5,20,7</span>
<div style="left:3px;top:478px;width:53px;height:19px;background:#efc038;"></div>
<div style="left:310px;top:477px;width:22px;height:21px;background:#ff5050;"></div>
<div style="left:333px;top:477px;width:19px;height:21px;background:#4040ff;"></div>
<div style="left:1px;top:497px;width:478px;height:1px;background:#213f3f;"></div>
<div style="left:480px;top:497px;width:38px;height:1px;background:#0a2048;"></div>
<div style="left:519px;top:497px;width:77px;height:1px;background:#213f3f;"></div>
<div style="left:597px;top:497px;width:40px;height:1px;background:#4a1414;"></div>
<div style="left:638px;top:497px;width:299px;height:1px;background:#213f3f;"></div>
<div style="left:126px;top:477px;width:36px;height:19px;background:#406e6e;box-shadow:0 0 0 1px #8e8e8e"></div>
<div style="left:192px;top:477px;width:28px;height:19px;background:#ff4848;box-shadow:0 0 0 1px #8e8e8e"></div>
<div style="left:3px;top:497px;width:53px;height:1px;background:#ac8a28;"></div>
<span class="t" style="left:8px;top:479px;font-size:13.6px;line-height:20px;color:#000;font-weight:bold;letter-spacing:0.5px;">53947</span>
<span class="t" style="left:79.2px;top:479px;font-size:13.6px;line-height:20px;color:#000;font-weight:bold;letter-spacing:0.6px;width:79.6px;text-align:right;">21332</span>
<span class="t" style="left:162px;top:479px;font-size:9.8px;line-height:20px;color:#000;font-weight:bold;letter-spacing:0.36px;width:50.8px;text-align:right;-webkit-text-stroke:0.3px #000">-1196</span>
<span class="t" style="left:222px;top:479px;font-size:11.8px;line-height:20px;color:#000;font-weight:bold;letter-spacing:0.22px;width:67px;text-align:center;">4409.00</span>
<span class="t" style="left:296px;top:478px;font-size:11.8px;line-height:20px;color:#000;font-weight:bold;letter-spacing:-0.23px;width:32px;text-align:left;">11.3K</span>
<span class="t" style="left:339px;top:478px;font-size:11.8px;line-height:20px;color:#000;font-weight:bold;letter-spacing:-0.23px;width:32px;text-align:left;">10.1K</span>
<span class="t" style="left:439.6px;top:478px;font-size:11.3px;line-height:20px;color:#1aa0a0;font-weight:bold;letter-spacing:0.22px;width:39px;text-align:center;">144</span>
<span class="t" style="left:479px;top:478px;font-size:11.3px;line-height:20px;color:#fff;font-weight:bold;letter-spacing:0.22px;width:39px;text-align:center;">211</span>
<span class="t" style="left:519px;top:478px;font-size:11.3px;line-height:20px;color:#c80000;font-weight:bold;letter-spacing:0.22px;width:33px;text-align:right;">11</span>
<span class="t" style="left:557.4px;top:478px;font-size:11.3px;line-height:20px;color:#000090;font-weight:bold;letter-spacing:0.22px;width:38px;text-align:center;">24</span>
<span class="t" style="left:727px;top:478px;font-size:11.3px;line-height:20px;color:#000090;font-weight:bold;letter-spacing:0.36px;">10,4,67,3,3,3,20,5,7,69,3</span>
<div style="left:3px;top:499px;width:42px;height:19px;background:#f0f040;"></div>
<div style="left:314px;top:498px;width:18px;height:21px;background:#ff5050;"></div>
<div style="left:333px;top:498px;width:15px;height:21px;background:#4040ff;"></div>
<div style="left:1px;top:518px;width:478px;height:1px;background:#213f3f;"></div>
<div style="left:480px;top:518px;width:38px;height:1px;background:#0a2048;"></div>
<div style="left:519px;top:518px;width:77px;height:1px;background:#213f3f;"></div>
<div style="left:597px;top:518px;width:40px;height:1px;background:#4a1414;"></div>
<div style="left:638px;top:518px;width:299px;height:1px;background:#213f3f;"></div>
<div style="left:133px;top:498px;width:29px;height:19px;background:#406e6e;box-shadow:0 0 0 1px #8e8e8e"></div>
<div style="left:188px;top:498px;width:32px;height:19px;background:#ff4848;box-shadow:0 0 0 1px #8e8e8e"></div>
<div style="left:3px;top:518px;width:42px;height:1px;background:#acac2e;"></div>
<span class="t" style="left:8px;top:500px;font-size:13.6px;line-height:20px;color:#000;font-weight:bold;letter-spacing:0.5px;">42791</span>
<span class="t" style="left:79.2px;top:500px;font-size:13.6px;line-height:20px;color:#000;font-weight:bold;letter-spacing:0.6px;width:79.6px;text-align:right;">17043</span>
<span class="t" style="left:162px;top:500px;font-size:9.8px;line-height:20px;color:#000;font-weight:bold;letter-spacing:0.36px;width:50.8px;text-align:right;-webkit-text-stroke:0.3px #000">-1341</span>
<span class="t" style="left:222px;top:500px;font-size:11.8px;line-height:20px;color:#000;font-weight:bold;letter-spacing:0.22px;width:67px;text-align:center;">4408.75</span>
<span class="t" style="left:296px;top:499px;font-size:11.8px;line-height:20px;color:#000;font-weight:bold;letter-spacing:0.22px;width:32px;text-align:left;">9192</span>
<span class="t" style="left:339px;top:499px;font-size:11.8px;line-height:20px;color:#000;font-weight:bold;letter-spacing:0.22px;width:32px;text-align:left;">7851</span>
<span class="t" style="left:439.6px;top:499px;font-size:11.3px;line-height:20px;color:#1aa0a0;font-weight:bold;letter-spacing:0.22px;width:39px;text-align:center;">53</span>
<span class="t" style="left:479px;top:499px;font-size:11.3px;line-height:20px;color:#fff;font-weight:bold;letter-spacing:0.22px;width:39px;text-align:center;">101</span>
<span class="t" style="left:519px;top:499px;font-size:11.3px;line-height:20px;color:#c80000;font-weight:bold;letter-spacing:0.22px;width:33px;text-align:right;">5</span>
<span class="t" style="left:557.4px;top:499px;font-size:11.3px;line-height:20px;color:#000090;font-weight:bold;letter-spacing:0.22px;width:38px;text-align:center;">44</span>
<span class="t" style="left:727px;top:499px;font-size:11.3px;line-height:20px;color:#000090;font-weight:bold;letter-spacing:0.36px;">10,4,3,3,7,3,3,6,3,5,3,20,3,7</span>
<div style="left:3px;top:520px;width:32px;height:19px;background:#33bb33;"></div>
<div style="left:321px;top:519px;width:11px;height:21px;background:#ff5050;"></div>
<div style="left:333px;top:519px;width:9px;height:21px;background:#4040ff;"></div>
<div style="left:1px;top:539px;width:478px;height:1px;background:#213f3f;"></div>
<div style="left:480px;top:539px;width:38px;height:1px;background:#0a2048;"></div>
<div style="left:519px;top:539px;width:77px;height:1px;background:#213f3f;"></div>
<div style="left:597px;top:539px;width:40px;height:1px;background:#4a1414;"></div>
<div style="left:638px;top:539px;width:299px;height:1px;background:#213f3f;"></div>
<div style="left:144px;top:519px;width:18px;height:19px;background:#406e6e;box-shadow:0 0 0 1px #8e8e8e"></div>
<div style="left:209px;top:519px;width:11px;height:19px;background:#ff4848;box-shadow:0 0 0 1px #8e8e8e"></div>
<div style="left:3px;top:539px;width:32px;height:1px;background:#248624;"></div>
<span class="t" style="left:8px;top:521px;font-size:13.6px;line-height:20px;color:#000;font-weight:bold;letter-spacing:0.5px;">32856</span>
<span class="t" style="left:79.2px;top:521px;font-size:13.6px;line-height:20px;color:#000;font-weight:bold;letter-spacing:0.6px;width:79.6px;text-align:right;">10523</span>
<span class="t" style="left:162px;top:521px;font-size:9.8px;line-height:20px;color:#000;font-weight:bold;letter-spacing:0.36px;width:50.8px;text-align:right;-webkit-text-stroke:0.3px #000">-527</span>
<span class="t" style="left:222px;top:521px;font-size:11.8px;line-height:20px;color:#000;font-weight:bold;letter-spacing:0.22px;width:67px;text-align:center;">4408.50</span>
<span class="t" style="left:296px;top:520px;font-size:11.8px;line-height:20px;color:#000;font-weight:bold;letter-spacing:0.22px;width:32px;text-align:left;">5525</span>
<span class="t" style="left:339px;top:520px;font-size:11.8px;line-height:20px;color:#000;font-weight:bold;letter-spacing:0.22px;width:32px;text-align:left;">4998</span>
<span class="t" style="left:439.6px;top:520px;font-size:11.3px;line-height:20px;color:#1aa0a0;font-weight:bold;letter-spacing:0.22px;width:39px;text-align:center;">30</span>
<span class="t" style="left:479px;top:520px;font-size:11.3px;line-height:20px;color:#fff;font-weight:bold;letter-spacing:0.22px;width:39px;text-align:center;">134</span>
<span class="t" style="left:519px;top:520px;font-size:11.3px;line-height:20px;color:#c80000;font-weight:bold;letter-spacing:0.22px;width:33px;text-align:right;">6</span>
<span class="t" style="left:557.4px;top:520px;font-size:11.3px;line-height:20px;color:#000090;font-weight:bold;letter-spacing:0.22px;width:38px;text-align:center;">179</span>
<span class="t" style="left:727px;top:520px;font-size:11.3px;line-height:20px;color:#000090;font-weight:bold;letter-spacing:0.36px;">12,14,15,3,5,3,10,4,25,7,3,7,3,3</span>
<div style="left:3px;top:541px;width:31px;height:19px;background:#33ee33;"></div>
<div style="left:324px;top:540px;width:8px;height:21px;background:#ff5050;"></div>
<div style="left:333px;top:540px;width:6px;height:21px;background:#4040ff;"></div>
<div style="left:1px;top:560px;width:478px;height:1px;background:#213f3f;"></div>
<div style="left:480px;top:560px;width:38px;height:1px;background:#0a2048;"></div>
<div style="left:519px;top:560px;width:77px;height:1px;background:#213f3f;"></div>
<div style="left:597px;top:560px;width:40px;height:1px;background:#4a1414;"></div>
<div style="left:638px;top:560px;width:299px;height:1px;background:#213f3f;"></div>
<div style="left:149px;top:540px;width:13px;height:19px;background:#406e6e;box-shadow:0 0 0 1px #8e8e8e"></div>
<div style="left:202px;top:540px;width:18px;height:19px;background:#ff4848;box-shadow:0 0 0 1px #8e8e8e"></div>
<div style="left:3px;top:560px;width:31px;height:1px;background:#24ab24;"></div>
<span class="t" style="left:8px;top:542px;font-size:13.6px;line-height:20px;color:#000;font-weight:bold;letter-spacing:0.5px;">31310</span>
<span class="t" style="left:79.2px;top:542px;font-size:13.6px;line-height:20px;color:#000;font-weight:bold;letter-spacing:0.6px;width:79.6px;text-align:right;">7410</span>
<span class="t" style="left:162px;top:542px;font-size:9.8px;line-height:20px;color:#000;font-weight:bold;letter-spacing:0.36px;width:50.8px;text-align:right;-webkit-text-stroke:0.3px #000">-806</span>
<span class="t" style="left:222px;top:542px;font-size:11.8px;line-height:20px;color:#000;font-weight:bold;letter-spacing:0.22px;width:67px;text-align:center;">4408.25</span>
<span class="t" style="left:296px;top:541px;font-size:11.8px;line-height:20px;color:#000;font-weight:bold;letter-spacing:0.22px;width:32px;text-align:left;">4108</span>
<span class="t" style="left:339px;top:541px;font-size:11.8px;line-height:20px;color:#000;font-weight:bold;letter-spacing:0.22px;width:32px;text-align:left;">3302</span>
<span class="t" style="left:439.6px;top:541px;font-size:11.3px;line-height:20px;color:#c80000;font-weight:bold;letter-spacing:0.22px;width:39px;text-align:center;">-38</span>
<span class="t" style="left:479px;top:541px;font-size:11.3px;line-height:20px;color:#fff;font-weight:bold;letter-spacing:0.22px;width:39px;text-align:center;">51</span>
<span class="t" style="left:519px;top:541px;font-size:11.3px;line-height:20px;color:#c80000;font-weight:bold;letter-spacing:0.22px;width:33px;text-align:right;">273</span>
<span class="t" style="left:557.4px;top:541px;font-size:11.3px;line-height:20px;color:#000090;font-weight:bold;letter-spacing:0.22px;width:38px;text-align:center;">69</span>
<span class="t" style="left:727px;top:541px;font-size:11.3px;line-height:20px;color:#000090;font-weight:bold;letter-spacing:0.36px;">3,3,6,3,3,5,7</span>
<div style="left:3px;top:562px;width:33px;height:19px;background:#33bb33;"></div>
<div style="left:324px;top:561px;width:8px;height:21px;background:#ff5050;"></div>
<div style="left:333px;top:561px;width:9px;height:21px;background:#4040ff;"></div>
<div style="left:1px;top:581px;width:478px;height:1px;background:#213f3f;"></div>
<div style="left:480px;top:581px;width:38px;height:1px;background:#0a2048;"></div>
<div style="left:519px;top:581px;width:77px;height:1px;background:#213f3f;"></div>
<div style="left:597px;top:581px;width:40px;height:1px;background:#4a1414;"></div>
<div style="left:638px;top:581px;width:299px;height:1px;background:#213f3f;"></div>
<div style="left:147px;top:561px;width:15px;height:19px;background:#406e6e;box-shadow:0 0 0 1px #8e8e8e"></div>
<div style="left:208px;top:561px;width:12px;height:19px;background:#4040ff;box-shadow:0 0 0 1px #8e8e8e"></div>
<div style="left:3px;top:581px;width:33px;height:1px;background:#248624;"></div>
<span class="t" style="left:8px;top:563px;font-size:13.6px;line-height:20px;color:#000;font-weight:bold;letter-spacing:0.5px;">33415</span>
<span class="t" style="left:79.2px;top:563px;font-size:13.6px;line-height:20px;color:#000;font-weight:bold;letter-spacing:0.6px;width:79.6px;text-align:right;">9032</span>
<span class="t" style="left:165px;top:563px;font-size:9.8px;line-height:20px;color:#000;font-weight:bold;letter-spacing:0.36px;width:50.8px;text-align:right;-webkit-text-stroke:0.3px #000">572</span>
<span class="t" style="left:222px;top:563px;font-size:11.8px;line-height:20px;color:#000;font-weight:bold;letter-spacing:0.22px;width:67px;text-align:center;">4408.00</span>
<span class="t" style="left:296px;top:562px;font-size:11.8px;line-height:20px;color:#000;font-weight:bold;letter-spacing:0.22px;width:32px;text-align:left;">4230</span>
<span class="t" style="left:339px;top:562px;font-size:11.8px;line-height:20px;color:#000;font-weight:bold;letter-spacing:0.22px;width:32px;text-align:left;">4802</span>
<span class="t" style="left:439.6px;top:562px;font-size:11.3px;line-height:20px;color:#c80000;font-weight:bold;letter-spacing:0.22px;width:39px;text-align:center;">-197</span>
<span class="t" style="left:479px;top:562px;font-size:11.3px;line-height:20px;color:#fff;font-weight:bold;letter-spacing:0.22px;width:39px;text-align:center;">132</span>
<span class="t" style="left:557.4px;top:562px;font-size:11.3px;line-height:20px;color:#000090;font-weight:bold;letter-spacing:0.22px;width:38px;text-align:center;">829</span>
<span class="t" style="left:727px;top:562px;font-size:11.3px;line-height:20px;color:#000090;font-weight:bold;letter-spacing:0.36px;">6,6,3,3,3,3,3,7,3,50,7</span>
<div style="left:3px;top:583px;width:30px;height:19px;background:#33ee33;"></div>
<div style="left:323px;top:582px;width:9px;height:21px;background:#ff5050;"></div>
<div style="left:333px;top:582px;width:9px;height:21px;background:#4040ff;"></div>
<div style="left:1px;top:602px;width:478px;height:1px;background:#213f3f;"></div>
<div style="left:480px;top:602px;width:38px;height:1px;background:#0a2048;"></div>
<div style="left:519px;top:602px;width:77px;height:1px;background:#213f3f;"></div>
<div style="left:597px;top:602px;width:40px;height:1px;background:#4a1414;"></div>
<div style="left:638px;top:602px;width:299px;height:1px;background:#213f3f;"></div>
<div style="left:146px;top:582px;width:16px;height:19px;background:#406e6e;box-shadow:0 0 0 1px #8e8e8e"></div>
<div style="left:214px;top:582px;width:6px;height:19px;background:#4040ff;box-shadow:0 0 0 1px #8e8e8e"></div>
<div style="left:3px;top:602px;width:30px;height:1px;background:#24ab24;"></div>
<span class="t" style="left:8px;top:584px;font-size:13.6px;line-height:20px;color:#000;font-weight:bold;letter-spacing:0.5px;">30867</span>
<span class="t" style="left:79.2px;top:584px;font-size:13.6px;line-height:20px;color:#000;font-weight:bold;letter-spacing:0.6px;width:79.6px;text-align:right;">9689</span>
<span class="t" style="left:165px;top:584px;font-size:9.8px;line-height:20px;color:#000;font-weight:bold;letter-spacing:0.36px;width:50.8px;text-align:right;-webkit-text-stroke:0.3px #000">327</span>
<span class="t" style="left:222px;top:584px;font-size:11.8px;line-height:20px;color:#000;font-weight:bold;letter-spacing:0.22px;width:67px;text-align:center;">4407.75</span>
<span class="t" style="left:296px;top:583px;font-size:11.8px;line-height:20px;color:#000;font-weight:bold;letter-spacing:0.22px;width:32px;text-align:left;">4681</span>
<span class="t" style="left:339px;top:583px;font-size:11.8px;line-height:20px;color:#000;font-weight:bold;letter-spacing:0.22px;width:32px;text-align:left;">5008</span>
<span class="t" style="left:439.6px;top:583px;font-size:11.3px;line-height:20px;color:#c80000;font-weight:bold;letter-spacing:0.22px;width:39px;text-align:center;">-25</span>
<span class="t" style="left:479px;top:583px;font-size:11.3px;line-height:20px;color:#fff;font-weight:bold;letter-spacing:0.22px;width:39px;text-align:center;">155</span>
<span class="t" style="left:519px;top:583px;font-size:11.3px;line-height:20px;color:#c80000;font-weight:bold;letter-spacing:0.22px;width:33px;text-align:right;">541</span>
<span class="t" style="left:557.4px;top:583px;font-size:11.3px;line-height:20px;color:#000090;font-weight:bold;letter-spacing:0.22px;width:38px;text-align:center;">770</span>
<span class="t" style="left:727px;top:583px;font-size:11.3px;line-height:20px;color:#000090;font-weight:bold;letter-spacing:0.36px;">3,3,4,20,20,3,3,3,3,3,50,4,5,3,3,3</span>
<div style="left:3px;top:604px;width:32px;height:19px;background:#33bb33;"></div>
<div style="left:320px;top:603px;width:12px;height:21px;background:#ff5050;"></div>
<div style="left:333px;top:603px;width:11px;height:21px;background:#4040ff;"></div>
<div style="left:1px;top:623px;width:478px;height:1px;background:#213f3f;"></div>
<div style="left:480px;top:623px;width:38px;height:1px;background:#0a2048;"></div>
<div style="left:519px;top:623px;width:77px;height:1px;background:#213f3f;"></div>
<div style="left:597px;top:623px;width:40px;height:1px;background:#4a1414;"></div>
<div style="left:638px;top:623px;width:299px;height:1px;background:#213f3f;"></div>
<div style="left:141px;top:603px;width:21px;height:19px;background:#406e6e;box-shadow:0 0 0 1px #8e8e8e"></div>
<div style="left:219px;top:603px;width:1px;height:19px;background:#ff4848;box-shadow:0 0 0 1px #a8a0a0"></div>
<div style="left:3px;top:623px;width:32px;height:1px;background:#248624;"></div>
<span class="t" style="left:8px;top:605px;font-size:13.6px;line-height:20px;color:#000;font-weight:bold;letter-spacing:0.5px;">32397</span>
<span class="t" style="left:79.2px;top:605px;font-size:13.6px;line-height:20px;color:#000;font-weight:bold;letter-spacing:0.6px;width:79.6px;text-align:right;">12237</span>
<span class="t" style="left:222px;top:605px;font-size:11.8px;line-height:20px;color:#000;font-weight:bold;letter-spacing:0.22px;width:67px;text-align:center;">4407.50</span>
<span class="t" style="left:296px;top:604px;font-size:11.8px;line-height:20px;color:#000;font-weight:bold;letter-spacing:0.22px;width:32px;text-align:left;">6136</span>
<span class="t" style="left:339px;top:604px;font-size:11.8px;line-height:20px;color:#000;font-weight:bold;letter-spacing:0.22px;width:32px;text-align:left;">6101</span>
<span class="t" style="left:439.6px;top:604px;font-size:11.3px;line-height:20px;color:#1aa0a0;font-weight:bold;letter-spacing:0.22px;width:39px;text-align:center;">51</span>
<span class="t" style="left:479px;top:604px;font-size:11.3px;line-height:20px;color:#fff;font-weight:bold;letter-spacing:0.22px;width:39px;text-align:center;">150</span>
<span class="t" style="left:519px;top:604px;font-size:11.3px;line-height:20px;color:#c80000;font-weight:bold;letter-spacing:0.22px;width:33px;text-align:right;">64</span>
<span class="t" style="left:557.4px;top:604px;font-size:11.3px;line-height:20px;color:#000090;font-weight:bold;letter-spacing:0.22px;width:38px;text-align:center;">250</span>
<span class="t" style="left:727px;top:604px;font-size:11.3px;line-height:20px;color:#000090;font-weight:bold;letter-spacing:0.36px;">3,12,5,4,3,3,3,6,3,3,69</span>
<div style="left:3px;top:625px;width:34px;height:19px;background:#33bb33;"></div>
<div style="left:318px;top:624px;width:14px;height:21px;background:#ff5050;"></div>
<div style="left:333px;top:624px;width:12px;height:21px;background:#4040ff;"></div>
<div style="left:1px;top:644px;width:478px;height:1px;background:#213f3f;"></div>
<div style="left:480px;top:644px;width:38px;height:1px;background:#0a2048;"></div>
<div style="left:519px;top:644px;width:77px;height:1px;background:#213f3f;"></div>
<div style="left:597px;top:644px;width:40px;height:1px;background:#4a1414;"></div>
<div style="left:638px;top:644px;width:299px;height:1px;background:#213f3f;"></div>
<div style="left:139px;top:624px;width:23px;height:19px;background:#808080;box-shadow:0 0 0 1px #8e8e8e"></div>
<div style="left:213px;top:624px;width:7px;height:19px;background:#ff4848;box-shadow:0 0 0 1px #8e8e8e"></div>
<div style="left:3px;top:644px;width:34px;height:1px;background:#248624;"></div>
<span class="t" style="left:8px;top:626px;font-size:13.6px;line-height:20px;color:#000;font-weight:bold;letter-spacing:0.5px;">34481</span>
<span class="t" style="left:79.2px;top:626px;font-size:13.6px;line-height:20px;color:#000;font-weight:bold;letter-spacing:0.6px;width:79.6px;text-align:right;">13611</span>
<span class="t" style="left:162px;top:626px;font-size:9.8px;line-height:20px;color:#000;font-weight:bold;letter-spacing:0.36px;width:50.8px;text-align:right;-webkit-text-stroke:0.3px #000">-387</span>
<span class="t" style="left:222px;top:626px;font-size:11.8px;line-height:20px;color:#000;font-weight:bold;letter-spacing:0.22px;width:67px;text-align:center;">4407.25</span>
<span class="t" style="left:296px;top:625px;font-size:11.8px;line-height:20px;color:#000;font-weight:bold;letter-spacing:0.22px;width:32px;text-align:left;">6999</span>
<span class="t" style="left:339px;top:625px;font-size:11.8px;line-height:20px;color:#000;font-weight:bold;letter-spacing:0.22px;width:32px;text-align:left;">6612</span>
<span class="t" style="left:439.6px;top:625px;font-size:11.3px;line-height:20px;color:#c80000;font-weight:bold;letter-spacing:0.22px;width:39px;text-align:center;">-11</span>
<span class="t" style="left:479px;top:625px;font-size:11.3px;line-height:20px;color:#fff;font-weight:bold;letter-spacing:0.22px;width:39px;text-align:center;">102</span>
<span class="t" style="left:519px;top:625px;font-size:11.3px;line-height:20px;color:#c80000;font-weight:bold;letter-spacing:0.22px;width:33px;text-align:right;">125</span>
<span class="t" style="left:557.4px;top:625px;font-size:11.3px;line-height:20px;color:#000090;font-weight:bold;letter-spacing:0.22px;width:38px;text-align:center;">178</span>
<span class="t" style="left:727px;top:625px;font-size:11.3px;line-height:20px;color:#000090;font-weight:bold;letter-spacing:0.36px;">10,3,3,3,25,3,20</span>
<div style="left:3px;top:646px;width:33px;height:19px;background:#33bb33;"></div>
<div style="left:320px;top:645px;width:12px;height:21px;background:#ff5050;"></div>
<div style="left:333px;top:645px;width:10px;height:21px;background:#4040ff;"></div>
<div style="left:1px;top:665px;width:478px;height:1px;background:#213f3f;"></div>
<div style="left:480px;top:665px;width:38px;height:1px;background:#0a2048;"></div>
<div style="left:519px;top:665px;width:77px;height:1px;background:#213f3f;"></div>
<div style="left:597px;top:665px;width:40px;height:1px;background:#4a1414;"></div>
<div style="left:638px;top:665px;width:299px;height:1px;background:#213f3f;"></div>
<div style="left:143px;top:645px;width:19px;height:19px;background:#808080;box-shadow:0 0 0 1px #8e8e8e"></div>
<div style="left:196px;top:645px;width:24px;height:19px;background:#ff4848;box-shadow:0 0 0 1px #8e8e8e"></div>
<div style="left:3px;top:665px;width:33px;height:1px;background:#248624;"></div>
<span class="t" style="left:8px;top:647px;font-size:13.6px;line-height:20px;color:#000;font-weight:bold;letter-spacing:0.5px;">34287</span>
<span class="t" style="left:79.2px;top:647px;font-size:13.6px;line-height:20px;color:#000;font-weight:bold;letter-spacing:0.6px;width:79.6px;text-align:right;">11406</span>
<span class="t" style="left:162px;top:647px;font-size:9.8px;line-height:20px;color:#000;font-weight:bold;letter-spacing:0.36px;width:50.8px;text-align:right;-webkit-text-stroke:0.3px #000">-1020</span>
<span class="t" style="left:222px;top:647px;font-size:11.8px;line-height:20px;color:#000;font-weight:bold;letter-spacing:0.22px;width:67px;text-align:center;">4407.00</span>
<span class="t" style="left:296px;top:646px;font-size:11.8px;line-height:20px;color:#000;font-weight:bold;letter-spacing:0.22px;width:32px;text-align:left;">6213</span>
<span class="t" style="left:339px;top:646px;font-size:11.8px;line-height:20px;color:#000;font-weight:bold;letter-spacing:0.22px;width:32px;text-align:left;">5193</span>
<span class="t" style="left:439.6px;top:646px;font-size:11.3px;line-height:20px;color:#c80000;font-weight:bold;letter-spacing:0.22px;width:39px;text-align:center;">-72</span>
<span class="t" style="left:479px;top:646px;font-size:11.3px;line-height:20px;color:#fff;font-weight:bold;letter-spacing:0.22px;width:39px;text-align:center;">364</span>
<span class="t" style="left:519px;top:646px;font-size:11.3px;line-height:20px;color:#c80000;font-weight:bold;letter-spacing:0.22px;width:33px;text-align:right;">12</span>
<span class="t" style="left:557.4px;top:646px;font-size:11.3px;line-height:20px;color:#000090;font-weight:bold;letter-spacing:0.22px;width:38px;text-align:center;">533</span>
<span class="t" style="left:727px;top:646px;font-size:11.3px;line-height:20px;color:#000090;font-weight:bold;letter-spacing:0.36px;">3,4,10,3,44,3,3,3,3,250,3,4</span>
<div style="left:3px;top:667px;width:34px;height:19px;background:#33bb33;"></div>
<div style="left:323px;top:666px;width:9px;height:21px;background:#ff5050;"></div>
<div style="left:333px;top:666px;width:9px;height:21px;background:#4040ff;"></div>
<div style="left:1px;top:686px;width:478px;height:1px;background:#213f3f;"></div>
<div style="left:480px;top:686px;width:38px;height:1px;background:#0a2048;"></div>
<div style="left:519px;top:686px;width:77px;height:1px;background:#213f3f;"></div>
<div style="left:597px;top:686px;width:40px;height:1px;background:#4a1414;"></div>
<div style="left:638px;top:686px;width:299px;height:1px;background:#213f3f;"></div>
<div style="left:145px;top:666px;width:17px;height:19px;background:#808080;box-shadow:0 0 0 1px #8e8e8e"></div>
<div style="left:215px;top:666px;width:5px;height:19px;background:#4040ff;box-shadow:0 0 0 1px #8e8e8e"></div>
<div style="left:3px;top:686px;width:34px;height:1px;background:#248624;"></div>
<span class="t" style="left:8px;top:668px;font-size:13.6px;line-height:20px;color:#000;font-weight:bold;letter-spacing:0.5px;">34316</span>
<span class="t" style="left:79.2px;top:668px;font-size:13.6px;line-height:20px;color:#000;font-weight:bold;letter-spacing:0.6px;width:79.6px;text-align:right;">9878</span>
<span class="t" style="left:222px;top:668px;font-size:11.8px;line-height:20px;color:#000;font-weight:bold;letter-spacing:0.22px;width:67px;text-align:center;">4406.75</span>
<span class="t" style="left:296px;top:667px;font-size:11.8px;line-height:20px;color:#000;font-weight:bold;letter-spacing:0.22px;width:32px;text-align:left;">4793</span>
<span class="t" style="left:339px;top:667px;font-size:11.8px;line-height:20px;color:#000;font-weight:bold;letter-spacing:0.22px;width:32px;text-align:left;">5084</span>
<span class="t" style="left:439.6px;top:667px;font-size:11.3px;line-height:20px;color:#c80000;font-weight:bold;letter-spacing:0.22px;width:39px;text-align:center;">-16</span>
<span class="t" style="left:479px;top:667px;font-size:11.3px;line-height:20px;color:#fff;font-weight:bold;letter-spacing:0.22px;width:39px;text-align:center;">63</span>
<span class="t" style="left:519px;top:667px;font-size:11.3px;line-height:20px;color:#c80000;font-weight:bold;letter-spacing:0.22px;width:33px;text-align:right;">733</span>
<span class="t" style="left:557.4px;top:667px;font-size:11.3px;line-height:20px;color:#000090;font-weight:bold;letter-spacing:0.22px;width:38px;text-align:center;">1140</span>
<span class="t" style="left:727px;top:667px;font-size:11.3px;line-height:20px;color:#000090;font-weight:bold;letter-spacing:0.36px;">3,10,3,3,5,3,3,3,3,3</span>
<div style="left:3px;top:688px;width:38px;height:19px;background:#33bb33;"></div>
<div style="left:322px;top:687px;width:10px;height:21px;background:#ff5050;"></div>
<div style="left:333px;top:687px;width:8px;height:21px;background:#4040ff;"></div>
<div style="left:1px;top:707px;width:478px;height:1px;background:#213f3f;"></div>
<div style="left:480px;top:707px;width:38px;height:1px;background:#0a2048;"></div>
<div style="left:519px;top:707px;width:77px;height:1px;background:#213f3f;"></div>
<div style="left:597px;top:707px;width:40px;height:1px;background:#4a1414;"></div>
<div style="left:638px;top:707px;width:299px;height:1px;background:#213f3f;"></div>
<div style="left:146px;top:687px;width:16px;height:19px;background:#808080;box-shadow:0 0 0 1px #8e8e8e"></div>
<div style="left:200px;top:687px;width:20px;height:19px;background:#ff4848;box-shadow:0 0 0 1px #8e8e8e"></div>
<div style="left:3px;top:707px;width:38px;height:1px;background:#248624;"></div>
<span class="t" style="left:8px;top:689px;font-size:13.6px;line-height:20px;color:#000;font-weight:bold;letter-spacing:0.5px;">39388</span>
<span class="t" style="left:79.2px;top:689px;font-size:13.6px;line-height:20px;color:#000;font-weight:bold;letter-spacing:0.6px;width:79.6px;text-align:right;">9359</span>
<span class="t" style="left:162px;top:689px;font-size:9.8px;line-height:20px;color:#000;font-weight:bold;letter-spacing:0.36px;width:50.8px;text-align:right;-webkit-text-stroke:0.3px #000">-885</span>
<span class="t" style="left:222px;top:689px;font-size:11.8px;line-height:20px;color:#000;font-weight:bold;letter-spacing:0.22px;width:67px;text-align:center;">4406.50</span>
<span class="t" style="left:296px;top:688px;font-size:11.8px;line-height:20px;color:#000;font-weight:bold;letter-spacing:0.22px;width:32px;text-align:left;">5109</span>
<span class="t" style="left:339px;top:688px;font-size:11.8px;line-height:20px;color:#000;font-weight:bold;letter-spacing:0.22px;width:32px;text-align:left;">4209</span>
<span class="t" style="left:439.6px;top:686px;font-size:11.3px;line-height:20px;color:#ff00ff;font-weight:bold;letter-spacing:0.22px;width:39px;text-align:center;">39</span>
<span class="t" style="left:479px;top:688px;font-size:11.3px;line-height:20px;color:#fff;font-weight:bold;letter-spacing:0.22px;width:39px;text-align:center;">57</span>
<span class="t" style="left:519px;top:688px;font-size:11.3px;line-height:20px;color:#c80000;font-weight:bold;letter-spacing:0.22px;width:33px;text-align:right;">254</span>
<span class="t" style="left:557.4px;top:688px;font-size:11.3px;line-height:20px;color:#000090;font-weight:bold;letter-spacing:0.22px;width:38px;text-align:center;">167</span>
<span class="t" style="left:727px;top:688px;font-size:11.3px;line-height:20px;color:#000090;font-weight:bold;letter-spacing:0.36px;">10,3,3,3</span>
<div style="left:3px;top:709px;width:35px;height:19px;background:#33bb33;"></div>
<div style="left:324px;top:708px;width:8px;height:21px;background:#ff5050;"></div>
<div style="left:333px;top:708px;width:7px;height:21px;background:#4040ff;"></div>
<div style="left:1px;top:728px;width:478px;height:1px;background:#213f3f;"></div>
<div style="left:480px;top:728px;width:38px;height:1px;background:#0a2048;"></div>
<div style="left:519px;top:728px;width:77px;height:1px;background:#213f3f;"></div>
<div style="left:597px;top:728px;width:40px;height:1px;background:#4a1414;"></div>
<div style="left:638px;top:728px;width:299px;height:1px;background:#213f3f;"></div>
<div style="left:148px;top:708px;width:14px;height:19px;background:#808080;box-shadow:0 0 0 1px #8e8e8e"></div>
<div style="left:213px;top:708px;width:7px;height:19px;background:#ff4848;box-shadow:0 0 0 1px #8e8e8e"></div>
<div style="left:3px;top:728px;width:35px;height:1px;background:#248624;"></div>
<span class="t" style="left:8px;top:710px;font-size:13.6px;line-height:20px;color:#000;font-weight:bold;letter-spacing:0.5px;">35889</span>
<span class="t" style="left:79.2px;top:710px;font-size:13.6px;line-height:20px;color:#000;font-weight:bold;letter-spacing:0.6px;width:79.6px;text-align:right;">8319</span>
<span class="t" style="left:162px;top:710px;font-size:9.8px;line-height:20px;color:#000;font-weight:bold;letter-spacing:0.36px;width:50.8px;text-align:right;-webkit-text-stroke:0.3px #000">-383</span>
<span class="t" style="left:222px;top:710px;font-size:11.8px;line-height:20px;color:#000;font-weight:bold;letter-spacing:0.22px;width:67px;text-align:center;">4406.25</span>
<span class="t" style="left:296px;top:709px;font-size:11.8px;line-height:20px;color:#000;font-weight:bold;letter-spacing:0.22px;width:32px;text-align:left;">4277</span>
<span class="t" style="left:339px;top:709px;font-size:11.8px;line-height:20px;color:#000;font-weight:bold;letter-spacing:0.22px;width:32px;text-align:left;">3918</span>
<span class="t" style="left:479px;top:709px;font-size:11.3px;line-height:20px;color:#fff;font-weight:bold;letter-spacing:0.22px;width:39px;text-align:center;">64</span>
<span class="t" style="left:519px;top:709px;font-size:11.3px;line-height:20px;color:#c80000;font-weight:bold;letter-spacing:0.22px;width:33px;text-align:right;">34</span>
<span class="t" style="left:557.4px;top:709px;font-size:11.3px;line-height:20px;color:#000090;font-weight:bold;letter-spacing:0.22px;width:38px;text-align:center;">73</span>
<span class="t" style="left:727px;top:709px;font-size:11.3px;line-height:20px;color:#000090;font-weight:bold;letter-spacing:0.36px;">4,3,10</span>
<div style="left:3px;top:730px;width:35px;height:19px;background:#33bb33;"></div>
<div style="left:323px;top:729px;width:9px;height:21px;background:#ff5050;"></div>
<div style="left:333px;top:729px;width:7px;height:21px;background:#4040ff;"></div>
<div style="left:1px;top:749px;width:478px;height:1px;background:#213f3f;"></div>
<div style="left:480px;top:749px;width:38px;height:1px;background:#0a2048;"></div>
<div style="left:519px;top:749px;width:77px;height:1px;background:#213f3f;"></div>
<div style="left:597px;top:749px;width:40px;height:1px;background:#4a1414;"></div>
<div style="left:638px;top:749px;width:299px;height:1px;background:#213f3f;"></div>
<div style="left:148px;top:729px;width:14px;height:19px;background:#808080;box-shadow:0 0 0 1px #8e8e8e"></div>
<div style="left:198px;top:729px;width:22px;height:19px;background:#ff4848;box-shadow:0 0 0 1px #8e8e8e"></div>
<div style="left:3px;top:749px;width:35px;height:1px;background:#248624;"></div>
<span class="t" style="left:8px;top:731px;font-size:13.6px;line-height:20px;color:#000;font-weight:bold;letter-spacing:0.5px;">36049</span>
<span class="t" style="left:79.2px;top:731px;font-size:13.6px;line-height:20px;color:#000;font-weight:bold;letter-spacing:0.6px;width:79.6px;text-align:right;">8517</span>
<span class="t" style="left:162px;top:731px;font-size:9.8px;line-height:20px;color:#000;font-weight:bold;letter-spacing:0.36px;width:50.8px;text-align:right;-webkit-text-stroke:0.3px #000">-963</span>
<span class="t" style="left:222px;top:731px;font-size:11.8px;line-height:20px;color:#000;font-weight:bold;letter-spacing:0.22px;width:67px;text-align:center;">4406.00</span>
<span class="t" style="left:296px;top:730px;font-size:11.8px;line-height:20px;color:#000;font-weight:bold;letter-spacing:0.22px;width:32px;text-align:left;">4631</span>
<span class="t" style="left:339px;top:730px;font-size:11.8px;line-height:20px;color:#000;font-weight:bold;letter-spacing:0.22px;width:32px;text-align:left;">3702</span>
<span class="t" style="left:479px;top:730px;font-size:11.3px;line-height:20px;color:#fff;font-weight:bold;letter-spacing:0.22px;width:39px;text-align:center;">151</span>
<span class="t" style="left:519px;top:730px;font-size:11.3px;line-height:20px;color:#c80000;font-weight:bold;letter-spacing:0.22px;width:33px;text-align:right;">48</span>
<span class="t" style="left:557.4px;top:730px;font-size:11.3px;line-height:20px;color:#000090;font-weight:bold;letter-spacing:0.22px;width:38px;text-align:center;">40</span>
<span class="t" style="left:727px;top:730px;font-size:11.3px;line-height:20px;color:#000090;font-weight:bold;letter-spacing:0.36px;">10,15,3,3,3,10,6,10,5,3,20,7</span>
<div style="left:3px;top:751px;width:31px;height:19px;background:#33ee33;"></div>
<div style="left:325px;top:750px;width:7px;height:21px;background:#ff5050;"></div>
<div style="left:333px;top:750px;width:7px;height:21px;background:#4040ff;"></div>
<div style="left:1px;top:770px;width:478px;height:1px;background:#213f3f;"></div>
<div style="left:480px;top:770px;width:38px;height:1px;background:#0a2048;"></div>
<div style="left:519px;top:770px;width:77px;height:1px;background:#213f3f;"></div>
<div style="left:597px;top:770px;width:40px;height:1px;background:#4a1414;"></div>
<div style="left:638px;top:770px;width:299px;height:1px;background:#213f3f;"></div>
<div style="left:149px;top:750px;width:13px;height:19px;background:#808080;box-shadow:0 0 0 1px #8e8e8e"></div>
<div style="left:219px;top:750px;width:1px;height:19px;background:#4040ff;box-shadow:0 0 0 1px #a8a0a0"></div>
<div style="left:3px;top:770px;width:31px;height:1px;background:#24ab24;"></div>
<span class="t" style="left:8px;top:752px;font-size:13.6px;line-height:20px;color:#000;font-weight:bold;letter-spacing:0.5px;">31403</span>
<span class="t" style="left:79.2px;top:752px;font-size:13.6px;line-height:20px;color:#000;font-weight:bold;letter-spacing:0.6px;width:79.6px;text-align:right;">7553</span>
<span class="t" style="left:222px;top:752px;font-size:11.8px;line-height:20px;color:#000;font-weight:bold;letter-spacing:0.22px;width:67px;text-align:center;">4405.75</span>
<span class="t" style="left:296px;top:751px;font-size:11.8px;line-height:20px;color:#000;font-weight:bold;letter-spacing:0.22px;width:32px;text-align:left;">3580</span>
<span class="t" style="left:339px;top:751px;font-size:11.8px;line-height:20px;color:#000;font-weight:bold;letter-spacing:0.22px;width:32px;text-align:left;">3761</span>
<span class="t" style="left:479px;top:751px;font-size:11.3px;line-height:20px;color:#fff;font-weight:bold;letter-spacing:0.22px;width:39px;text-align:center;">82</span>
<span class="t" style="left:519px;top:751px;font-size:11.3px;line-height:20px;color:#c80000;font-weight:bold;letter-spacing:0.22px;width:33px;text-align:right;">65</span>
<span class="t" style="left:557.4px;top:751px;font-size:11.3px;line-height:20px;color:#000090;font-weight:bold;letter-spacing:0.22px;width:38px;text-align:center;">85</span>
<span class="t" style="left:727px;top:751px;font-size:11.3px;line-height:20px;color:#000090;font-weight:bold;letter-spacing:0.36px;">3,3,3,10,5,10,3,8</span>
<div style="left:3px;top:772px;width:30px;height:19px;background:#33ee33;"></div>
<div style="left:326px;top:771px;width:6px;height:21px;background:#ff5050;"></div>
<div style="left:333px;top:771px;width:6px;height:21px;background:#4040ff;"></div>
<div style="left:1px;top:791px;width:478px;height:1px;background:#213f3f;"></div>
<div style="left:480px;top:791px;width:38px;height:1px;background:#0a2048;"></div>
<div style="left:519px;top:791px;width:77px;height:1px;background:#213f3f;"></div>
<div style="left:597px;top:791px;width:40px;height:1px;background:#4a1414;"></div>
<div style="left:638px;top:791px;width:299px;height:1px;background:#213f3f;"></div>
<div style="left:152px;top:771px;width:10px;height:19px;background:#808080;box-shadow:0 0 0 1px #8e8e8e"></div>
<div style="left:217px;top:771px;width:3px;height:19px;background:#ff4848;box-shadow:0 0 0 1px #8e8e8e"></div>
<div style="left:3px;top:791px;width:30px;height:1px;background:#24ab24;"></div>
<span class="t" style="left:8px;top:773px;font-size:13.6px;line-height:20px;color:#000;font-weight:bold;letter-spacing:0.5px;">30583</span>
<span class="t" style="left:79.2px;top:773px;font-size:13.6px;line-height:20px;color:#000;font-weight:bold;letter-spacing:0.6px;width:79.6px;text-align:right;">6164</span>
<span class="t" style="left:222px;top:773px;font-size:11.8px;line-height:20px;color:#000;font-weight:bold;letter-spacing:0.22px;width:67px;text-align:center;">4405.50</span>
<span class="t" style="left:296px;top:772px;font-size:11.8px;line-height:20px;color:#000;font-weight:bold;letter-spacing:0.22px;width:32px;text-align:left;">3170</span>
<span class="t" style="left:339px;top:772px;font-size:11.8px;line-height:20px;color:#000;font-weight:bold;letter-spacing:0.22px;width:32px;text-align:left;">2969</span>
<span class="t" style="left:479px;top:772px;font-size:11.3px;line-height:20px;color:#fff;font-weight:bold;letter-spacing:0.22px;width:39px;text-align:center;">80</span>
<span class="t" style="left:519px;top:772px;font-size:11.3px;line-height:20px;color:#c80000;font-weight:bold;letter-spacing:0.22px;width:33px;text-align:right;">16</span>
<span class="t" style="left:557.4px;top:772px;font-size:11.3px;line-height:20px;color:#000090;font-weight:bold;letter-spacing:0.22px;width:38px;text-align:center;">62</span>
<span class="t" style="left:727px;top:772px;font-size:11.3px;line-height:20px;color:#000090;font-weight:bold;letter-spacing:0.36px;">3,3,3,10,4,5,10,8</span>
<div style="left:3px;top:793px;width:32px;height:19px;background:#33bb33;"></div>
<div style="left:325px;top:792px;width:7px;height:21px;background:#ff5050;"></div>
<div style="left:333px;top:792px;width:6px;height:21px;background:#4040ff;"></div>
<div style="left:1px;top:812px;width:478px;height:1px;background:#213f3f;"></div>
<div style="left:480px;top:812px;width:38px;height:1px;background:#0a2048;"></div>
<div style="left:519px;top:812px;width:77px;height:1px;background:#213f3f;"></div>
<div style="left:597px;top:812px;width:40px;height:1px;background:#4a1414;"></div>
<div style="left:638px;top:812px;width:299px;height:1px;background:#213f3f;"></div>
<div style="left:151px;top:792px;width:11px;height:19px;background:#808080;box-shadow:0 0 0 1px #8e8e8e"></div>
<div style="left:211px;top:792px;width:9px;height:19px;background:#ff4848;box-shadow:0 0 0 1px #8e8e8e"></div>
<div style="left:3px;top:812px;width:32px;height:1px;background:#248624;"></div>
<span class="t" style="left:8px;top:794px;font-size:13.6px;line-height:20px;color:#000;font-weight:bold;letter-spacing:0.5px;">32967</span>
<span class="t" style="left:79.2px;top:794px;font-size:13.6px;line-height:20px;color:#000;font-weight:bold;letter-spacing:0.6px;width:79.6px;text-align:right;">6574</span>
<span class="t" style="left:162px;top:794px;font-size:9.8px;line-height:20px;color:#000;font-weight:bold;letter-spacing:0.36px;width:50.8px;text-align:right;-webkit-text-stroke:0.3px #000">-466</span>
<span class="t" style="left:222px;top:794px;font-size:11.8px;line-height:20px;color:#000;font-weight:bold;letter-spacing:0.22px;width:67px;text-align:center;">4405.25</span>
<span class="t" style="left:296px;top:793px;font-size:11.8px;line-height:20px;color:#000;font-weight:bold;letter-spacing:0.22px;width:32px;text-align:left;">3520</span>
<span class="t" style="left:339px;top:793px;font-size:11.8px;line-height:20px;color:#000;font-weight:bold;letter-spacing:0.22px;width:32px;text-align:left;">3054</span>
<span class="t" style="left:479px;top:791px;font-size:11.3px;line-height:20px;color:#ff00ff;font-weight:bold;letter-spacing:0.22px;width:39px;text-align:center;">2243</span>
<span class="t" style="left:519px;top:793px;font-size:11.3px;line-height:20px;color:#c80000;font-weight:bold;letter-spacing:0.22px;width:33px;text-align:right;">223</span>
<span class="t" style="left:557.4px;top:793px;font-size:11.3px;line-height:20px;color:#000090;font-weight:bold;letter-spacing:0.22px;width:38px;text-align:center;">284</span>
<span class="t" style="left:727px;top:793px;font-size:11.3px;line-height:20px;color:#000090;font-weight:bold;letter-spacing:0.36px;">8,3,3,10,4,5,24,9,5,5,5</span>
<div style="left:3px;top:814px;width:30px;height:19px;background:#33ee33;"></div>
<div style="left:327px;top:813px;width:5px;height:21px;background:#ff5050;"></div>
<div style="left:333px;top:813px;width:2px;height:21px;background:#4040ff;"></div>
<div style="left:1px;top:833px;width:478px;height:1px;background:#213f3f;"></div>
<div style="left:480px;top:833px;width:38px;height:1px;background:#0a2048;"></div>
<div style="left:519px;top:833px;width:77px;height:1px;background:#213f3f;"></div>
<div style="left:597px;top:833px;width:40px;height:1px;background:#4a1414;"></div>
<div style="left:638px;top:833px;width:299px;height:1px;background:#213f3f;"></div>
<div style="left:156px;top:813px;width:6px;height:19px;background:#808080;box-shadow:0 0 0 1px #8e8e8e"></div>
<div style="left:190px;top:813px;width:30px;height:19px;background:#ff4848;box-shadow:0 0 0 1px #8e8e8e"></div>
<div style="left:3px;top:833px;width:30px;height:1px;background:#24ab24;"></div>
<span class="t" style="left:8px;top:815px;font-size:13.6px;line-height:20px;color:#000;font-weight:bold;letter-spacing:0.5px;">31120</span>
<span class="t" style="left:79.2px;top:815px;font-size:13.6px;line-height:20px;color:#000;font-weight:bold;letter-spacing:0.6px;width:79.6px;text-align:right;">3695</span>
<span class="t" style="left:162px;top:815px;font-size:9.8px;line-height:20px;color:#000;font-weight:bold;letter-spacing:0.36px;width:50.8px;text-align:right;-webkit-text-stroke:0.3px #000">-1257</span>
<span class="t" style="left:222px;top:815px;font-size:11.8px;line-height:20px;color:#000;font-weight:bold;letter-spacing:0.22px;width:67px;text-align:center;">4405.00</span>
<span class="t" style="left:296px;top:814px;font-size:11.8px;line-height:20px;color:#000;font-weight:bold;letter-spacing:0.22px;width:32px;text-align:left;">2476</span>
<span class="t" style="left:339px;top:814px;font-size:11.8px;line-height:20px;color:#000;font-weight:bold;letter-spacing:0.22px;width:32px;text-align:left;">1219</span>
<span class="t" style="left:479px;top:811px;font-size:11.3px;line-height:20px;color:#ff00ff;font-weight:bold;letter-spacing:0.22px;width:39px;text-align:center;">59%</span>
<span class="t" style="left:519px;top:814px;font-size:11.3px;line-height:20px;color:#c80000;font-weight:bold;letter-spacing:0.22px;width:33px;text-align:right;">41</span>
<span class="t" style="left:557.4px;top:814px;font-size:11.3px;line-height:20px;color:#000090;font-weight:bold;letter-spacing:0.22px;width:38px;text-align:center;">69</span>
<span class="t" style="left:727px;top:814px;font-size:11.3px;line-height:20px;color:#000090;font-weight:bold;letter-spacing:0.36px;">3,5,30,4,3,3,3,10,4,4,3,4,7,5,5,3,5</span>
<div style="left:3px;top:835px;width:25px;height:19px;background:#33ee33;"></div>
<div style="left:330px;top:834px;width:2px;height:21px;background:#ff5050;"></div>
<div style="left:333px;top:834px;width:1px;height:21px;background:#4040ff;"></div>
<div style="left:1px;top:854px;width:478px;height:1px;background:#213f3f;"></div>
<div style="left:480px;top:854px;width:38px;height:1px;background:#0a2048;"></div>
<div style="left:519px;top:854px;width:77px;height:1px;background:#213f3f;"></div>
<div style="left:597px;top:854px;width:40px;height:1px;background:#4a1414;"></div>
<div style="left:638px;top:854px;width:299px;height:1px;background:#213f3f;"></div>
<div style="left:159px;top:834px;width:3px;height:19px;background:#808080;box-shadow:0 0 0 1px #8e8e8e"></div>
<div style="left:218px;top:834px;width:2px;height:19px;background:#ff4848;box-shadow:0 0 0 1px #a8a0a0"></div>
<div style="left:3px;top:854px;width:25px;height:1px;background:#24ab24;"></div>
<span class="t" style="left:8px;top:836px;font-size:13.6px;line-height:20px;color:#000;font-weight:bold;letter-spacing:0.5px;">25326</span>
<span class="t" style="left:79.2px;top:836px;font-size:13.6px;line-height:20px;color:#000;font-weight:bold;letter-spacing:0.6px;width:79.6px;text-align:right;">1784</span>
<span class="t" style="left:222px;top:836px;font-size:11.8px;line-height:20px;color:#000;font-weight:bold;letter-spacing:0.22px;width:67px;text-align:center;">4404.75</span>
<span class="t" style="left:296px;top:835px;font-size:11.8px;line-height:20px;color:#000;font-weight:bold;letter-spacing:0.22px;width:32px;text-align:center;">978</span>
<span class="t" style="left:339px;top:835px;font-size:11.8px;line-height:20px;color:#000;font-weight:bold;letter-spacing:0.22px;width:32px;text-align:center;">806</span>
<span class="t" style="left:519px;top:835px;font-size:11.3px;line-height:20px;color:#c80000;font-weight:bold;letter-spacing:0.22px;width:33px;text-align:right;">77</span>
<span class="t" style="left:557.4px;top:835px;font-size:11.3px;line-height:20px;color:#000090;font-weight:bold;letter-spacing:0.22px;width:38px;text-align:center;">96</span>
<span class="t" style="left:727px;top:835px;font-size:11.3px;line-height:20px;color:#000090;font-weight:bold;letter-spacing:0.36px;">3,3,10,3,9,4</span>
<div style="left:3px;top:856px;width:27px;height:19px;background:#33ee33;"></div>
<div style="left:329px;top:855px;width:3px;height:21px;background:#ff5050;"></div>
<div style="left:333px;top:855px;width:2px;height:21px;background:#4040ff;"></div>
<div style="left:1px;top:875px;width:478px;height:1px;background:#213f3f;"></div>
<div style="left:480px;top:875px;width:38px;height:1px;background:#0a2048;"></div>
<div style="left:519px;top:875px;width:77px;height:1px;background:#213f3f;"></div>
<div style="left:597px;top:875px;width:40px;height:1px;background:#4a1414;"></div>
<div style="left:638px;top:875px;width:299px;height:1px;background:#213f3f;"></div>
<div style="left:158px;top:855px;width:4px;height:19px;background:#808080;box-shadow:0 0 0 1px #8e8e8e"></div>
<div style="left:214px;top:855px;width:6px;height:19px;background:#ff4848;box-shadow:0 0 0 1px #8e8e8e"></div>
<div style="left:3px;top:875px;width:27px;height:1px;background:#24ab24;"></div>
<span class="t" style="left:8px;top:857px;font-size:13.6px;line-height:20px;color:#000;font-weight:bold;letter-spacing:0.5px;">27219</span>
<span class="t" style="left:79.2px;top:857px;font-size:13.6px;line-height:20px;color:#000;font-weight:bold;letter-spacing:0.6px;width:79.6px;text-align:right;">2346</span>
<span class="t" style="left:162px;top:857px;font-size:9.8px;line-height:20px;color:#000;font-weight:bold;letter-spacing:0.36px;width:50.8px;text-align:right;-webkit-text-stroke:0.3px #000">-336</span>
<span class="t" style="left:222px;top:857px;font-size:11.8px;line-height:20px;color:#000;font-weight:bold;letter-spacing:0.22px;width:67px;text-align:center;">4404.50</span>
<span class="t" style="left:296px;top:856px;font-size:11.8px;line-height:20px;color:#000;font-weight:bold;letter-spacing:0.22px;width:32px;text-align:left;">1341</span>
<span class="t" style="left:339px;top:856px;font-size:11.8px;line-height:20px;color:#000;font-weight:bold;letter-spacing:0.22px;width:32px;text-align:left;">1005</span>
<span class="t" style="left:519px;top:856px;font-size:11.3px;line-height:20px;color:#c80000;font-weight:bold;letter-spacing:0.22px;width:33px;text-align:right;">2</span>
<span class="t" style="left:557.4px;top:856px;font-size:11.3px;line-height:20px;color:#000090;font-weight:bold;letter-spacing:0.22px;width:38px;text-align:center;">67</span>
<span class="t" style="left:727px;top:856px;font-size:11.3px;line-height:20px;color:#000090;font-weight:bold;letter-spacing:0.36px;">4,3,3,3,10,9,4,4</span>
<div style="left:3px;top:877px;width:23px;height:19px;background:#33ee33;"></div>
<div style="left:330px;top:876px;width:2px;height:21px;background:#ff5050;"></div>
<div style="left:333px;top:876px;width:2px;height:21px;background:#4040ff;"></div>
<div style="left:1px;top:896px;width:478px;height:1px;background:#213f3f;"></div>
<div style="left:480px;top:896px;width:38px;height:1px;background:#0a2048;"></div>
<div style="left:519px;top:896px;width:77px;height:1px;background:#213f3f;"></div>
<div style="left:597px;top:896px;width:40px;height:1px;background:#4a1414;"></div>
<div style="left:638px;top:896px;width:299px;height:1px;background:#213f3f;"></div>
<div style="left:159px;top:876px;width:3px;height:19px;background:#808080;box-shadow:0 0 0 1px #8e8e8e"></div>
<div style="left:213px;top:876px;width:7px;height:19px;background:#ff4848;box-shadow:0 0 0 1px #8e8e8e"></div>
<div style="left:3px;top:896px;width:23px;height:1px;background:#24ab24;"></div>
<span class="t" style="left:8px;top:878px;font-size:13.6px;line-height:20px;color:#000;font-weight:bold;letter-spacing:0.5px;">24000</span>
<span class="t" style="left:79.2px;top:878px;font-size:13.6px;line-height:20px;color:#000;font-weight:bold;letter-spacing:0.6px;width:79.6px;text-align:right;">1500</span>
<span class="t" style="left:296px;top:877px;font-size:11.8px;line-height:20px;color:#000;font-weight:bold;letter-spacing:0.22px;width:32px;text-align:left;">1200</span>
<span class="t" style="left:339px;top:877px;font-size:11.8px;line-height:20px;color:#000;font-weight:bold;letter-spacing:0.22px;width:32px;text-align:center;">900</span>
<div style="left:5px;top:-1px;width:217px;height:17px;background:#c0c0c0;"></div>
<div style="left:222px;top:-1px;width:68px;height:17px;background:#c0c0c0;"></div>
<div style="left:290px;top:-1px;width:190px;height:23px;background:#c0c0c0;"></div>
<div style="left:519px;top:-1px;width:78px;height:23px;background:#c0c0c0;"></div>
<div style="left:638px;top:-1px;width:300px;height:23px;background:#c0c0c0;"></div>
<div style="left:3px;top:-1px;width:2px;height:17px;background:#ee9538;"></div>
<div style="left:480px;top:-1px;width:38px;height:23px;background:#000050;"></div>
<div style="left:597px;top:-1px;width:40px;height:23px;background:#a00000;"></div>
<span class="t" style="left:5.25px;top:1px;font-size:11px;line-height:17px;color:#000;font-weight:bold;letter-spacing:-0.17px;">ESU23_FUT_CME [CBV]</span>
<span class="t" style="left:136.5px;top:1px;font-size:11px;line-height:17px;color:#000;font-weight:bold;letter-spacing:0.35px;">Qty: 1</span>
<span class="t" style="left:177.5px;top:1px;font-size:11px;line-height:17px;color:#000;font-weight:bold;letter-spacing:0.2px;width:44.5px;overflow:hidden">TA: 7PVC</span>
<span class="t" style="left:479px;top:4px;font-size:11.3px;line-height:17px;color:#80ff80;font-weight:bold;letter-spacing:-0.3px;width:39px;text-align:center;">Buy</span>
<span class="t" style="left:597px;top:4px;font-size:11.3px;line-height:17px;color:#ff8080;font-weight:bold;letter-spacing:0.1px;width:40px;text-align:center;">Sell</span>
<div style="left:289px;top:-1px;width:1px;height:900px;background:#213f3f;"></div>
<div style="left:332px;top:-1px;width:1px;height:900px;background:#213f3f;"></div>
<div style="left:374px;top:-1px;width:1px;height:900px;background:#213f3f;"></div>
<div style="left:440px;top:-1px;width:1px;height:900px;background:#213f3f;"></div>
<div style="left:557px;top:-1px;width:1px;height:900px;background:#213f3f;"></div>
<div style="left:679px;top:-1px;width:1px;height:900px;background:#213f3f;"></div>
<div style="left:722px;top:-1px;width:1px;height:900px;background:#213f3f;"></div>
</div>
<svg style="position:absolute;left:0;top:0" width="1920" height="915" viewBox="0 100 1920 915">
<g fill="none" stroke="#0000ff" stroke-width="1.900" stroke-linecap="round" stroke-linejoin="round">
<path d="M421.500 851.500l9.500-13.500 9-9.500 9.500-8.500 9.500-8"/>
<path d="M435 816.500c7 1.200 16-1 24-5-6 3.500-13 6-19 6.300"/>
<path d="M459.500 811.500c1.200 3 1.300 5 1.300 8v14.500"/>
<path d="M430 914.200l3.200.200.500 2.100h52.500"/>
<path d="M472.300 907.300l1.500 4.200 3.200 3.100 4.500 2.700 4.700 1.500 1.800 2.700-1.800 2.300-4.700 3.200-2.300 5.700-9.200 3.100"/>
<path d="M680.800 954.200l.4 3.500 4.200 6.100 2.600 1.600.5 3.100 3 2.300 5.500 2.700 4.500 3.500 6.200 1.500 3.100 4.500 4.600 2 3.100 2 6.900 1.800"/>
<path d="M723 981.200l2.400 8" stroke-width="3"/>
<path d="M725.400 989.200l1.600 8.100 3 1.200M727 997.300l-3.200.7-2.300 2.800-3 .2-5.500-2.500"/>
</g></svg>
<div style="left:1132px;top:1px;width:272px;height:940px;overflow:hidden">
<div class="win" style="left:0px;top:0;width:272px;height:960px;border-radius:4px 4px 0 0"></div>
</div>
<div style="left:1141px;top:11px;width:15px;height:12px;background:#f4f4f4;border:1px solid #8a8a8a;border-radius:1px"></div>
<div style="left:1143px;top:13px;width:6px;height:8px;background:linear-gradient(#4a7fb0,#3a9a60)"></div>
<div style="left:1153px;top:13px;width:1px;height:4px;background:#2060c0"></div>
<span class="t" style="left:1161px;top:10px;font-size:12px;line-height:16px;color:#9a9a9a;letter-spacing:-0.68px;">NQU23_FUT_CME [CB...</span>
<div class="wb" style="left:1294px;top:9px;width:31px;height:18px"></div>
<div style="left:1304px;top:17px;width:11px;height:5px;background:#f4f4f4;border:1px solid #3c3c50;border-radius:1.5px"></div>
<div class="wb" style="left:1328px;top:9px;width:31px;height:18px"></div>
<div style="left:1338px;top:13px;width:11px;height:9px;background:#f4f4f4;border:1px solid #3c3c50;border-radius:1.5px"></div>
<div style="left:1341px;top:15.5px;width:5px;height:3.5px;background:#c6d4e6;border:1px solid #3c3c50"></div>
<div class="wb" style="left:1362px;top:9px;width:31px;height:18px"></div>
<svg style="position:absolute;left:1371.5px;top:13px" width="12" height="9" viewBox="0 0 12 9"><path d="M.6 .6H4L6 2.900 8 .6h3.400L7.900 4.500l3.500 3.900H8L6 6.100 4 8.400H.6l3.500-3.900z" fill="#f4f4f4" stroke="#3c3c50" stroke-width="1.100" stroke-linejoin="round"/></svg>
<div style="left:1140px;top:30px;width:256px;height:885px;background:#c0c0c0;overflow:hidden;border-top:2px solid #696969;border-right:1px solid #fff">
<div style="left:57px;top:-2px;width:38px;height:900px;background:#000050;"></div>
<div style="left:174px;top:-2px;width:40px;height:900px;background:#960000;"></div>
<div style="left:174px;top:41px;width:40px;height:212px;background:#800000;"></div>
<span class="t" style="left:-59.299999999999955px;top:22px;font-size:13.8px;line-height:21px;color:#000;font-weight:bold;letter-spacing:0.45px;width:100.45px;text-align:right;">15046.50</span>
<span class="t" style="left:96px;top:22px;font-size:13.8px;line-height:21px;color:#c80000;font-weight:bold;letter-spacing:0.3px;width:33.8px;text-align:right;">3</span>
<span class="t" style="left:135px;top:22px;font-size:13.8px;line-height:21px;color:#000090;font-weight:bold;letter-spacing:0.3px;width:36px;text-align:center;">3</span>
<span class="t" style="left:174px;top:19px;font-size:13.8px;line-height:21px;color:#303030;font-weight:bold;letter-spacing:0.3px;width:40px;text-align:center;">75</span>
<div style="left:2px;top:40px;width:54px;height:1px;background:#213f3f;"></div>
<div style="left:57px;top:40px;width:38px;height:1px;background:#0a2048;"></div>
<div style="left:96px;top:40px;width:77px;height:1px;background:#213f3f;"></div>
<div style="left:174px;top:40px;width:40px;height:1px;background:#4a1414;"></div>
<div style="left:215px;top:40px;width:39px;height:1px;background:#213f3f;"></div>
<span class="t" style="left:-59.299999999999955px;top:43px;font-size:13.8px;line-height:21px;color:#000;font-weight:bold;letter-spacing:0.45px;width:100.45px;text-align:right;">15046.25</span>
<span class="t" style="left:96px;top:43px;font-size:13.8px;line-height:21px;color:#c80000;font-weight:bold;letter-spacing:0.3px;width:33.8px;text-align:right;">7</span>
<span class="t" style="left:135px;top:43px;font-size:13.8px;line-height:21px;color:#000090;font-weight:bold;letter-spacing:0.3px;width:36px;text-align:center;">2</span>
<span class="t" style="left:174px;top:43px;font-size:13.8px;line-height:21px;color:#fff;font-weight:bold;letter-spacing:0.3px;width:40px;text-align:center;">7</span>
<div style="left:2px;top:61px;width:54px;height:1px;background:#213f3f;"></div>
<div style="left:57px;top:61px;width:38px;height:1px;background:#0a2048;"></div>
<div style="left:96px;top:61px;width:77px;height:1px;background:#213f3f;"></div>
<div style="left:174px;top:61px;width:40px;height:1px;background:#4a1414;"></div>
<div style="left:215px;top:61px;width:39px;height:1px;background:#213f3f;"></div>
<span class="t" style="left:-59.299999999999955px;top:65px;font-size:13.8px;line-height:21px;color:#000;font-weight:bold;letter-spacing:0.45px;width:100.45px;text-align:right;">15046.00</span>
<span class="t" style="left:96px;top:65px;font-size:13.8px;line-height:21px;color:#c80000;font-weight:bold;letter-spacing:0.3px;width:33.8px;text-align:right;">6</span>
<span class="t" style="left:135px;top:65px;font-size:13.8px;line-height:21px;color:#000090;font-weight:bold;letter-spacing:0.3px;width:36px;text-align:center;">6</span>
<span class="t" style="left:174px;top:65px;font-size:13.8px;line-height:21px;color:#fff;font-weight:bold;letter-spacing:0.3px;width:40px;text-align:center;">12</span>
<div style="left:2px;top:83px;width:54px;height:1px;background:#213f3f;"></div>
<div style="left:57px;top:83px;width:38px;height:1px;background:#0a2048;"></div>
<div style="left:96px;top:83px;width:77px;height:1px;background:#213f3f;"></div>
<div style="left:174px;top:83px;width:40px;height:1px;background:#4a1414;"></div>
<div style="left:215px;top:83px;width:39px;height:1px;background:#213f3f;"></div>
<span class="t" style="left:-59.299999999999955px;top:86px;font-size:13.8px;line-height:21px;color:#000;font-weight:bold;letter-spacing:0.45px;width:100.45px;text-align:right;">15045.75</span>
<span class="t" style="left:96px;top:86px;font-size:13.8px;line-height:21px;color:#c80000;font-weight:bold;letter-spacing:0.3px;width:33.8px;text-align:right;">10</span>
<span class="t" style="left:174px;top:86px;font-size:13.8px;line-height:21px;color:#fff;font-weight:bold;letter-spacing:0.3px;width:40px;text-align:center;">9</span>
<div style="left:2px;top:104px;width:54px;height:1px;background:#213f3f;"></div>
<div style="left:57px;top:104px;width:38px;height:1px;background:#0a2048;"></div>
<div style="left:96px;top:104px;width:77px;height:1px;background:#213f3f;"></div>
<div style="left:174px;top:104px;width:40px;height:1px;background:#4a1414;"></div>
<div style="left:215px;top:104px;width:39px;height:1px;background:#213f3f;"></div>
<span class="t" style="left:-59.299999999999955px;top:107px;font-size:13.8px;line-height:21px;color:#000;font-weight:bold;letter-spacing:0.45px;width:100.45px;text-align:right;">15045.50</span>
<span class="t" style="left:96px;top:107px;font-size:13.8px;line-height:21px;color:#c80000;font-weight:bold;letter-spacing:0.3px;width:33.8px;text-align:right;">8</span>
<span class="t" style="left:174px;top:107px;font-size:13.8px;line-height:21px;color:#fff;font-weight:bold;letter-spacing:0.3px;width:40px;text-align:center;">6</span>
<div style="left:2px;top:125px;width:54px;height:1px;background:#213f3f;"></div>
<div style="left:57px;top:125px;width:38px;height:1px;background:#0a2048;"></div>
<div style="left:96px;top:125px;width:77px;height:1px;background:#213f3f;"></div>
<div style="left:174px;top:125px;width:40px;height:1px;background:#4a1414;"></div>
<div style="left:215px;top:125px;width:39px;height:1px;background:#213f3f;"></div>
<span class="t" style="left:-59.299999999999955px;top:128px;font-size:13.8px;line-height:21px;color:#000;font-weight:bold;letter-spacing:0.45px;width:100.45px;text-align:right;">15045.25</span>
<span class="t" style="left:96px;top:128px;font-size:13.8px;line-height:21px;color:#c80000;font-weight:bold;letter-spacing:0.3px;width:33.8px;text-align:right;">9</span>
<span class="t" style="left:174px;top:128px;font-size:13.8px;line-height:21px;color:#fff;font-weight:bold;letter-spacing:0.3px;width:40px;text-align:center;">9</span>
<div style="left:2px;top:146px;width:54px;height:1px;background:#213f3f;"></div>
<div style="left:57px;top:146px;width:38px;height:1px;background:#0a2048;"></div>
<div style="left:96px;top:146px;width:77px;height:1px;background:#213f3f;"></div>
<div style="left:174px;top:146px;width:40px;height:1px;background:#4a1414;"></div>
<div style="left:215px;top:146px;width:39px;height:1px;background:#213f3f;"></div>
<span class="t" style="left:-59.299999999999955px;top:150px;font-size:13.8px;line-height:21px;color:#000;font-weight:bold;letter-spacing:0.45px;width:100.45px;text-align:right;">15045.00</span>
<span class="t" style="left:96px;top:150px;font-size:13.8px;line-height:21px;color:#c80000;font-weight:bold;letter-spacing:0.3px;width:33.8px;text-align:right;">16</span>
<span class="t" style="left:174px;top:150px;font-size:13.8px;line-height:21px;color:#fff;font-weight:bold;letter-spacing:0.3px;width:40px;text-align:center;">9</span>
<div style="left:2px;top:168px;width:54px;height:1px;background:#213f3f;"></div>
<div style="left:57px;top:168px;width:38px;height:1px;background:#0a2048;"></div>
<div style="left:96px;top:168px;width:77px;height:1px;background:#213f3f;"></div>
<div style="left:174px;top:168px;width:40px;height:1px;background:#4a1414;"></div>
<div style="left:215px;top:168px;width:39px;height:1px;background:#213f3f;"></div>
<span class="t" style="left:-59.299999999999955px;top:171px;font-size:13.8px;line-height:21px;color:#000;font-weight:bold;letter-spacing:0.45px;width:100.45px;text-align:right;">15044.75</span>
<span class="t" style="left:135px;top:171px;font-size:13.8px;line-height:21px;color:#000090;font-weight:bold;letter-spacing:0.3px;width:36px;text-align:center;">5</span>
<span class="t" style="left:174px;top:171px;font-size:13.8px;line-height:21px;color:#fff;font-weight:bold;letter-spacing:0.3px;width:40px;text-align:center;">4</span>
<div style="left:2px;top:189px;width:54px;height:1px;background:#213f3f;"></div>
<div style="left:57px;top:189px;width:38px;height:1px;background:#0a2048;"></div>
<div style="left:96px;top:189px;width:77px;height:1px;background:#213f3f;"></div>
<div style="left:174px;top:189px;width:40px;height:1px;background:#4a1414;"></div>
<div style="left:215px;top:189px;width:39px;height:1px;background:#213f3f;"></div>
<span class="t" style="left:-59.299999999999955px;top:192px;font-size:13.8px;line-height:21px;color:#000;font-weight:bold;letter-spacing:0.45px;width:100.45px;text-align:right;">15044.50</span>
<span class="t" style="left:174px;top:192px;font-size:13.8px;line-height:21px;color:#fff;font-weight:bold;letter-spacing:0.3px;width:40px;text-align:center;">6</span>
<div style="left:2px;top:210px;width:54px;height:1px;background:#213f3f;"></div>
<div style="left:57px;top:210px;width:38px;height:1px;background:#0a2048;"></div>
<div style="left:96px;top:210px;width:77px;height:1px;background:#213f3f;"></div>
<div style="left:174px;top:210px;width:40px;height:1px;background:#4a1414;"></div>
<div style="left:215px;top:210px;width:39px;height:1px;background:#213f3f;"></div>
<span class="t" style="left:-59.299999999999955px;top:214px;font-size:13.8px;line-height:21px;color:#000;font-weight:bold;letter-spacing:0.45px;width:100.45px;text-align:right;">15044.25</span>
<span class="t" style="left:96px;top:214px;font-size:13.8px;line-height:21px;color:#c80000;font-weight:bold;letter-spacing:0.3px;width:33.8px;text-align:right;">1</span>
<span class="t" style="left:174px;top:214px;font-size:13.8px;line-height:21px;color:#fff;font-weight:bold;letter-spacing:0.3px;width:40px;text-align:center;">7</span>
<div style="left:2px;top:232px;width:54px;height:1px;background:#213f3f;"></div>
<div style="left:57px;top:232px;width:38px;height:1px;background:#0a2048;"></div>
<div style="left:96px;top:232px;width:77px;height:1px;background:#213f3f;"></div>
<div style="left:174px;top:232px;width:40px;height:1px;background:#4a1414;"></div>
<div style="left:215px;top:232px;width:39px;height:1px;background:#213f3f;"></div>
<span class="t" style="left:-59.299999999999955px;top:235px;font-size:13.8px;line-height:21px;color:#000;font-weight:bold;letter-spacing:0.45px;width:100.45px;text-align:right;">15044.00</span>
<span class="t" style="left:96px;top:235px;font-size:13.8px;line-height:21px;color:#c80000;font-weight:bold;letter-spacing:0.3px;width:33.8px;text-align:right;">4</span>
<span class="t" style="left:174px;top:235px;font-size:13.8px;line-height:21px;color:#fff;font-weight:bold;letter-spacing:0.3px;width:40px;text-align:center;">6</span>
<div style="left:2px;top:253px;width:54px;height:1px;background:#213f3f;"></div>
<div style="left:57px;top:253px;width:38px;height:1px;background:#0a2048;"></div>
<div style="left:96px;top:253px;width:77px;height:1px;background:#213f3f;"></div>
<div style="left:174px;top:253px;width:40px;height:1px;background:#4a1414;"></div>
<div style="left:215px;top:253px;width:39px;height:1px;background:#213f3f;"></div>
<div style="left:2px;top:254px;width:54px;height:20px;background:#ffff00;"></div>
<span class="t" style="left:-59.299999999999955px;top:256px;font-size:13.8px;line-height:21px;color:#000;font-weight:bold;letter-spacing:0.45px;width:100.45px;text-align:right;">15043.75</span>
<span class="t" style="left:96px;top:256px;font-size:13.8px;line-height:21px;color:#c80000;font-weight:bold;letter-spacing:0.3px;width:33.8px;text-align:right;">1</span>
<div style="left:135px;top:254px;width:37px;height:20px;background:#00ff00;"></div>
<span class="t" style="left:135px;top:256px;font-size:13.8px;line-height:21px;color:#000090;font-weight:bold;letter-spacing:0.3px;width:36px;text-align:center;">1</span>
<div style="left:215px;top:254px;width:39px;height:20px;background:#808080;"></div>
<span class="t" style="left:215px;top:256px;font-size:13.8px;line-height:21px;color:#000;font-weight:bold;letter-spacing:0.3px;width:39px;text-align:center;">1</span>
<div style="left:2px;top:274px;width:54px;height:1px;background:#213f3f;"></div>
<div style="left:57px;top:274px;width:38px;height:1px;background:#0a2048;"></div>
<div style="left:96px;top:274px;width:77px;height:1px;background:#213f3f;"></div>
<div style="left:174px;top:274px;width:40px;height:1px;background:#4a1414;"></div>
<div style="left:215px;top:274px;width:39px;height:1px;background:#213f3f;"></div>
<span class="t" style="left:-59.299999999999955px;top:277px;font-size:13.8px;line-height:21px;color:#000;font-weight:bold;letter-spacing:0.45px;width:100.45px;text-align:right;">15043.50</span>
<span class="t" style="left:135px;top:277px;font-size:13.8px;line-height:21px;color:#000090;font-weight:bold;letter-spacing:0.3px;width:36px;text-align:center;">2</span>
<div style="left:2px;top:295px;width:54px;height:1px;background:#213f3f;"></div>
<div style="left:57px;top:295px;width:38px;height:1px;background:#0a2048;"></div>
<div style="left:96px;top:295px;width:77px;height:1px;background:#213f3f;"></div>
<div style="left:174px;top:295px;width:40px;height:1px;background:#4a1414;"></div>
<div style="left:215px;top:295px;width:39px;height:1px;background:#213f3f;"></div>
<span class="t" style="left:-59.299999999999955px;top:299px;font-size:13.8px;line-height:21px;color:#000;font-weight:bold;letter-spacing:0.45px;width:100.45px;text-align:right;">15043.25</span>
<span class="t" style="left:57px;top:299px;font-size:13.8px;line-height:21px;color:#fff;font-weight:bold;letter-spacing:0.3px;width:38px;text-align:center;">4</span>
<span class="t" style="left:135px;top:299px;font-size:13.8px;line-height:21px;color:#000090;font-weight:bold;letter-spacing:0.3px;width:36px;text-align:center;">2</span>
<div style="left:2px;top:317px;width:54px;height:1px;background:#213f3f;"></div>
<div style="left:57px;top:317px;width:38px;height:1px;background:#0a2048;"></div>
<div style="left:96px;top:317px;width:77px;height:1px;background:#213f3f;"></div>
<div style="left:174px;top:317px;width:40px;height:1px;background:#4a1414;"></div>
<div style="left:215px;top:317px;width:39px;height:1px;background:#213f3f;"></div>
<span class="t" style="left:-59.299999999999955px;top:320px;font-size:13.8px;line-height:21px;color:#000;font-weight:bold;letter-spacing:0.45px;width:100.45px;text-align:right;">15043.00</span>
<span class="t" style="left:57px;top:320px;font-size:13.8px;line-height:21px;color:#fff;font-weight:bold;letter-spacing:0.3px;width:38px;text-align:center;">6</span>
<span class="t" style="left:135px;top:320px;font-size:13.8px;line-height:21px;color:#000090;font-weight:bold;letter-spacing:0.3px;width:36px;text-align:center;">6</span>
<div style="left:2px;top:338px;width:54px;height:1px;background:#213f3f;"></div>
<div style="left:57px;top:338px;width:38px;height:1px;background:#0a2048;"></div>
<div style="left:96px;top:338px;width:77px;height:1px;background:#213f3f;"></div>
<div style="left:174px;top:338px;width:40px;height:1px;background:#4a1414;"></div>
<div style="left:215px;top:338px;width:39px;height:1px;background:#213f3f;"></div>
<span class="t" style="left:-59.299999999999955px;top:341px;font-size:13.8px;line-height:21px;color:#000;font-weight:bold;letter-spacing:0.45px;width:100.45px;text-align:right;">15042.75</span>
<span class="t" style="left:57px;top:341px;font-size:13.8px;line-height:21px;color:#fff;font-weight:bold;letter-spacing:0.3px;width:38px;text-align:center;">14</span>
<span class="t" style="left:135px;top:341px;font-size:13.8px;line-height:21px;color:#000090;font-weight:bold;letter-spacing:0.3px;width:36px;text-align:center;">6</span>
<div style="left:2px;top:359px;width:54px;height:1px;background:#213f3f;"></div>
<div style="left:57px;top:359px;width:38px;height:1px;background:#0a2048;"></div>
<div style="left:96px;top:359px;width:77px;height:1px;background:#213f3f;"></div>
<div style="left:174px;top:359px;width:40px;height:1px;background:#4a1414;"></div>
<div style="left:215px;top:359px;width:39px;height:1px;background:#213f3f;"></div>
<span class="t" style="left:-59.299999999999955px;top:363px;font-size:13.8px;line-height:21px;color:#000;font-weight:bold;letter-spacing:0.45px;width:100.45px;text-align:right;">15042.50</span>
<span class="t" style="left:57px;top:363px;font-size:13.8px;line-height:21px;color:#fff;font-weight:bold;letter-spacing:0.3px;width:38px;text-align:center;">2</span>
<span class="t" style="left:96px;top:363px;font-size:13.8px;line-height:21px;color:#c80000;font-weight:bold;letter-spacing:0.3px;width:33.8px;text-align:right;">1</span>
<span class="t" style="left:135px;top:363px;font-size:13.8px;line-height:21px;color:#000090;font-weight:bold;letter-spacing:0.3px;width:36px;text-align:center;">9</span>
<div style="left:2px;top:381px;width:54px;height:1px;background:#213f3f;"></div>
<div style="left:57px;top:381px;width:38px;height:1px;background:#0a2048;"></div>
<div style="left:96px;top:381px;width:77px;height:1px;background:#213f3f;"></div>
<div style="left:174px;top:381px;width:40px;height:1px;background:#4a1414;"></div>
<div style="left:215px;top:381px;width:39px;height:1px;background:#213f3f;"></div>
<span class="t" style="left:-59.299999999999955px;top:384px;font-size:13.8px;line-height:21px;color:#000;font-weight:bold;letter-spacing:0.45px;width:100.45px;text-align:right;">15042.25</span>
<span class="t" style="left:57px;top:384px;font-size:13.8px;line-height:21px;color:#fff;font-weight:bold;letter-spacing:0.3px;width:38px;text-align:center;">6</span>
<span class="t" style="left:135px;top:384px;font-size:13.8px;line-height:21px;color:#000090;font-weight:bold;letter-spacing:0.3px;width:36px;text-align:center;">1</span>
<div style="left:2px;top:402px;width:54px;height:1px;background:#213f3f;"></div>
<div style="left:57px;top:402px;width:38px;height:1px;background:#0a2048;"></div>
<div style="left:96px;top:402px;width:77px;height:1px;background:#213f3f;"></div>
<div style="left:174px;top:402px;width:40px;height:1px;background:#4a1414;"></div>
<div style="left:215px;top:402px;width:39px;height:1px;background:#213f3f;"></div>
<span class="t" style="left:-59.299999999999955px;top:405px;font-size:13.8px;line-height:21px;color:#000;font-weight:bold;letter-spacing:0.45px;width:100.45px;text-align:right;">15042.00</span>
<span class="t" style="left:57px;top:405px;font-size:13.8px;line-height:21px;color:#fff;font-weight:bold;letter-spacing:0.3px;width:38px;text-align:center;">8</span>
<span class="t" style="left:96px;top:405px;font-size:13.8px;line-height:21px;color:#c80000;font-weight:bold;letter-spacing:0.3px;width:33.8px;text-align:right;">8</span>
<span class="t" style="left:135px;top:405px;font-size:13.8px;line-height:21px;color:#000090;font-weight:bold;letter-spacing:0.3px;width:36px;text-align:center;">1</span>
<div style="left:2px;top:423px;width:54px;height:1px;background:#213f3f;"></div>
<div style="left:57px;top:423px;width:38px;height:1px;background:#0a2048;"></div>
<div style="left:96px;top:423px;width:77px;height:1px;background:#213f3f;"></div>
<div style="left:174px;top:423px;width:40px;height:1px;background:#4a1414;"></div>
<div style="left:215px;top:423px;width:39px;height:1px;background:#213f3f;"></div>
<span class="t" style="left:-59.299999999999955px;top:426px;font-size:13.8px;line-height:21px;color:#000;font-weight:bold;letter-spacing:0.45px;width:100.45px;text-align:right;">15041.75</span>
<span class="t" style="left:57px;top:426px;font-size:13.8px;line-height:21px;color:#fff;font-weight:bold;letter-spacing:0.3px;width:38px;text-align:center;">7</span>
<span class="t" style="left:135px;top:426px;font-size:13.8px;line-height:21px;color:#000090;font-weight:bold;letter-spacing:0.3px;width:36px;text-align:center;">3</span>
<div style="left:2px;top:444px;width:54px;height:1px;background:#213f3f;"></div>
<div style="left:2px;top:445px;width:54px;height:2px;background:#000;"></div>
<div style="left:57px;top:444px;width:38px;height:1px;background:#0a2048;"></div>
<div style="left:57px;top:445px;width:38px;height:2px;background:#000;"></div>
<div style="left:96px;top:444px;width:77px;height:1px;background:#213f3f;"></div>
<div style="left:96px;top:445px;width:77px;height:2px;background:#000;"></div>
<div style="left:174px;top:444px;width:40px;height:1px;background:#4a1414;"></div>
<div style="left:174px;top:445px;width:40px;height:2px;background:#000;"></div>
<div style="left:215px;top:444px;width:39px;height:1px;background:#213f3f;"></div>
<div style="left:215px;top:445px;width:39px;height:2px;background:#000;"></div>
<span class="t" style="left:-59.299999999999955px;top:446px;font-size:13.8px;line-height:21px;color:#000;font-weight:bold;letter-spacing:0.45px;width:100.45px;text-align:right;">15041.50</span>
<span class="t" style="left:57px;top:446px;font-size:13.8px;line-height:21px;color:#fff;font-weight:bold;letter-spacing:0.3px;width:38px;text-align:center;">7</span>
<span class="t" style="left:135px;top:446px;font-size:13.8px;line-height:21px;color:#000090;font-weight:bold;letter-spacing:0.3px;width:36px;text-align:center;">1</span>
<div style="left:2px;top:466px;width:54px;height:1px;background:#213f3f;"></div>
<div style="left:57px;top:466px;width:38px;height:1px;background:#0a2048;"></div>
<div style="left:96px;top:466px;width:77px;height:1px;background:#213f3f;"></div>
<div style="left:174px;top:466px;width:40px;height:1px;background:#4a1414;"></div>
<div style="left:215px;top:466px;width:39px;height:1px;background:#213f3f;"></div>
<span class="t" style="left:-59.299999999999955px;top:469px;font-size:13.8px;line-height:21px;color:#000;font-weight:bold;letter-spacing:0.45px;width:100.45px;text-align:right;">15041.25</span>
<span class="t" style="left:57px;top:469px;font-size:13.8px;line-height:21px;color:#fff;font-weight:bold;letter-spacing:0.3px;width:38px;text-align:center;">6</span>
<span class="t" style="left:96px;top:469px;font-size:13.8px;line-height:21px;color:#c80000;font-weight:bold;letter-spacing:0.3px;width:33.8px;text-align:right;">1</span>
<div style="left:2px;top:487px;width:54px;height:1px;background:#213f3f;"></div>
<div style="left:57px;top:487px;width:38px;height:1px;background:#0a2048;"></div>
<div style="left:96px;top:487px;width:77px;height:1px;background:#213f3f;"></div>
<div style="left:174px;top:487px;width:40px;height:1px;background:#4a1414;"></div>
<div style="left:215px;top:487px;width:39px;height:1px;background:#213f3f;"></div>
<span class="t" style="left:-59.299999999999955px;top:490px;font-size:13.8px;line-height:21px;color:#000;font-weight:bold;letter-spacing:0.45px;width:100.45px;text-align:right;">15041.00</span>
<span class="t" style="left:57px;top:490px;font-size:13.8px;line-height:21px;color:#fff;font-weight:bold;letter-spacing:0.3px;width:38px;text-align:center;">9</span>
<span class="t" style="left:96px;top:490px;font-size:13.8px;line-height:21px;color:#c80000;font-weight:bold;letter-spacing:0.3px;width:33.8px;text-align:right;">1</span>
<span class="t" style="left:135px;top:490px;font-size:13.8px;line-height:21px;color:#000090;font-weight:bold;letter-spacing:0.3px;width:36px;text-align:center;">1</span>
<div style="left:2px;top:508px;width:54px;height:1px;background:#213f3f;"></div>
<div style="left:57px;top:508px;width:38px;height:1px;background:#0a2048;"></div>
<div style="left:96px;top:508px;width:77px;height:1px;background:#213f3f;"></div>
<div style="left:174px;top:508px;width:40px;height:1px;background:#4a1414;"></div>
<div style="left:215px;top:508px;width:39px;height:1px;background:#213f3f;"></div>
<span class="t" style="left:-59.299999999999955px;top:512px;font-size:13.8px;line-height:21px;color:#000;font-weight:bold;letter-spacing:0.45px;width:100.45px;text-align:right;">15040.75</span>
<span class="t" style="left:57px;top:513px;font-size:13.8px;line-height:21px;color:#383838;font-weight:bold;letter-spacing:0.3px;width:38px;text-align:center;">69</span>
<span class="t" style="left:135px;top:512px;font-size:13.8px;line-height:21px;color:#000090;font-weight:bold;letter-spacing:0.3px;width:36px;text-align:center;">4</span>
<div style="left:2px;top:530px;width:54px;height:1px;background:#213f3f;"></div>
<div style="left:57px;top:530px;width:38px;height:1px;background:#0a2048;"></div>
<div style="left:96px;top:530px;width:77px;height:1px;background:#213f3f;"></div>
<div style="left:174px;top:530px;width:40px;height:1px;background:#4a1414;"></div>
<div style="left:215px;top:530px;width:39px;height:1px;background:#213f3f;"></div>
<span class="t" style="left:-59.299999999999955px;top:533px;font-size:13.8px;line-height:21px;color:#000;font-weight:bold;letter-spacing:0.45px;width:100.45px;text-align:right;">15040.50</span>
<span class="t" style="left:57px;top:535px;font-size:13.8px;line-height:21px;color:#383838;font-weight:bold;letter-spacing:0.3px;width:38px;text-align:center;">48%</span>
<span class="t" style="left:135px;top:533px;font-size:13.8px;line-height:21px;color:#000090;font-weight:bold;letter-spacing:0.3px;width:36px;text-align:center;">2</span>
<div style="left:2px;top:551px;width:54px;height:1px;background:#213f3f;"></div>
<div style="left:57px;top:551px;width:38px;height:1px;background:#0a2048;"></div>
<div style="left:96px;top:551px;width:77px;height:1px;background:#213f3f;"></div>
<div style="left:174px;top:551px;width:40px;height:1px;background:#4a1414;"></div>
<div style="left:215px;top:551px;width:39px;height:1px;background:#213f3f;"></div>
<span class="t" style="left:-59.299999999999955px;top:554px;font-size:13.8px;line-height:21px;color:#000;font-weight:bold;letter-spacing:0.45px;width:100.45px;text-align:right;">15040.25</span>
<span class="t" style="left:96px;top:554px;font-size:13.8px;line-height:21px;color:#c80000;font-weight:bold;letter-spacing:0.3px;width:33.8px;text-align:right;">2</span>
<span class="t" style="left:135px;top:554px;font-size:13.8px;line-height:21px;color:#000090;font-weight:bold;letter-spacing:0.3px;width:36px;text-align:center;">1</span>
<div style="left:2px;top:572px;width:54px;height:1px;background:#213f3f;"></div>
<div style="left:57px;top:572px;width:38px;height:1px;background:#0a2048;"></div>
<div style="left:96px;top:572px;width:77px;height:1px;background:#213f3f;"></div>
<div style="left:174px;top:572px;width:40px;height:1px;background:#4a1414;"></div>
<div style="left:215px;top:572px;width:39px;height:1px;background:#213f3f;"></div>
<span class="t" style="left:-59.299999999999955px;top:575px;font-size:13.8px;line-height:21px;color:#000;font-weight:bold;letter-spacing:0.45px;width:100.45px;text-align:right;">15040.00</span>
<span class="t" style="left:135px;top:575px;font-size:13.8px;line-height:21px;color:#000090;font-weight:bold;letter-spacing:0.3px;width:36px;text-align:center;">4</span>
<div style="left:2px;top:593px;width:54px;height:1px;background:#213f3f;"></div>
<div style="left:57px;top:593px;width:38px;height:1px;background:#0a2048;"></div>
<div style="left:96px;top:593px;width:77px;height:1px;background:#213f3f;"></div>
<div style="left:174px;top:593px;width:40px;height:1px;background:#4a1414;"></div>
<div style="left:215px;top:593px;width:39px;height:1px;background:#213f3f;"></div>
<span class="t" style="left:-59.299999999999955px;top:597px;font-size:13.8px;line-height:21px;color:#000;font-weight:bold;letter-spacing:0.45px;width:100.45px;text-align:right;">15039.75</span>
<span class="t" style="left:96px;top:597px;font-size:13.8px;line-height:21px;color:#c80000;font-weight:bold;letter-spacing:0.3px;width:33.8px;text-align:right;">1</span>
<span class="t" style="left:135px;top:597px;font-size:13.8px;line-height:21px;color:#000090;font-weight:bold;letter-spacing:0.3px;width:36px;text-align:center;">2</span>
<div style="left:2px;top:615px;width:54px;height:1px;background:#213f3f;"></div>
<div style="left:57px;top:615px;width:38px;height:1px;background:#0a2048;"></div>
<div style="left:96px;top:615px;width:77px;height:1px;background:#213f3f;"></div>
<div style="left:174px;top:615px;width:40px;height:1px;background:#4a1414;"></div>
<div style="left:215px;top:615px;width:39px;height:1px;background:#213f3f;"></div>
<span class="t" style="left:-59.299999999999955px;top:618px;font-size:13.8px;line-height:21px;color:#000;font-weight:bold;letter-spacing:0.45px;width:100.45px;text-align:right;">15039.50</span>
<span class="t" style="left:135px;top:618px;font-size:13.8px;line-height:21px;color:#000090;font-weight:bold;letter-spacing:0.3px;width:36px;text-align:center;">13</span>
<div style="left:2px;top:636px;width:54px;height:1px;background:#213f3f;"></div>
<div style="left:57px;top:636px;width:38px;height:1px;background:#0a2048;"></div>
<div style="left:96px;top:636px;width:77px;height:1px;background:#213f3f;"></div>
<div style="left:174px;top:636px;width:40px;height:1px;background:#4a1414;"></div>
<div style="left:215px;top:636px;width:39px;height:1px;background:#213f3f;"></div>
<span class="t" style="left:-59.299999999999955px;top:639px;font-size:13.8px;line-height:21px;color:#000;font-weight:bold;letter-spacing:0.45px;width:100.45px;text-align:right;">15039.25</span>
<span class="t" style="left:96px;top:639px;font-size:13.8px;line-height:21px;color:#c80000;font-weight:bold;letter-spacing:0.3px;width:33.8px;text-align:right;">2</span>
<span class="t" style="left:135px;top:639px;font-size:13.8px;line-height:21px;color:#000090;font-weight:bold;letter-spacing:0.3px;width:36px;text-align:center;">3</span>
<div style="left:2px;top:657px;width:54px;height:1px;background:#213f3f;"></div>
<div style="left:57px;top:657px;width:38px;height:1px;background:#0a2048;"></div>
<div style="left:96px;top:657px;width:77px;height:1px;background:#213f3f;"></div>
<div style="left:174px;top:657px;width:40px;height:1px;background:#4a1414;"></div>
<div style="left:215px;top:657px;width:39px;height:1px;background:#213f3f;"></div>
<span class="t" style="left:-59.299999999999955px;top:661px;font-size:13.8px;line-height:21px;color:#000;font-weight:bold;letter-spacing:0.45px;width:100.45px;text-align:right;">15039.00</span>
<span class="t" style="left:135px;top:661px;font-size:13.8px;line-height:21px;color:#000090;font-weight:bold;letter-spacing:0.3px;width:36px;text-align:center;">4</span>
<div style="left:2px;top:679px;width:54px;height:1px;background:#213f3f;"></div>
<div style="left:57px;top:679px;width:38px;height:1px;background:#0a2048;"></div>
<div style="left:96px;top:679px;width:77px;height:1px;background:#213f3f;"></div>
<div style="left:174px;top:679px;width:40px;height:1px;background:#4a1414;"></div>
<div style="left:215px;top:679px;width:39px;height:1px;background:#213f3f;"></div>
<span class="t" style="left:-59.299999999999955px;top:682px;font-size:13.8px;line-height:21px;color:#000;font-weight:bold;letter-spacing:0.45px;width:100.45px;text-align:right;">15038.75</span>
<span class="t" style="left:135px;top:682px;font-size:13.8px;line-height:21px;color:#000090;font-weight:bold;letter-spacing:0.3px;width:36px;text-align:center;">1</span>
<div style="left:2px;top:700px;width:54px;height:1px;background:#213f3f;"></div>
<div style="left:57px;top:700px;width:38px;height:1px;background:#0a2048;"></div>
<div style="left:96px;top:700px;width:77px;height:1px;background:#213f3f;"></div>
<div style="left:174px;top:700px;width:40px;height:1px;background:#4a1414;"></div>
<div style="left:215px;top:700px;width:39px;height:1px;background:#213f3f;"></div>
<span class="t" style="left:-59.299999999999955px;top:703px;font-size:13.8px;line-height:21px;color:#000;font-weight:bold;letter-spacing:0.45px;width:100.45px;text-align:right;">15038.50</span>
<span class="t" style="left:96px;top:703px;font-size:13.8px;line-height:21px;color:#c80000;font-weight:bold;letter-spacing:0.3px;width:33.8px;text-align:right;">3</span>
<span class="t" style="left:135px;top:703px;font-size:13.8px;line-height:21px;color:#000090;font-weight:bold;letter-spacing:0.3px;width:36px;text-align:center;">2</span>
<div style="left:2px;top:721px;width:54px;height:1px;background:#213f3f;"></div>
<div style="left:57px;top:721px;width:38px;height:1px;background:#0a2048;"></div>
<div style="left:96px;top:721px;width:77px;height:1px;background:#213f3f;"></div>
<div style="left:174px;top:721px;width:40px;height:1px;background:#4a1414;"></div>
<div style="left:215px;top:721px;width:39px;height:1px;background:#213f3f;"></div>
<span class="t" style="left:-59.299999999999955px;top:724px;font-size:13.8px;line-height:21px;color:#000;font-weight:bold;letter-spacing:0.45px;width:100.45px;text-align:right;">15038.25</span>
<span class="t" style="left:96px;top:724px;font-size:13.8px;line-height:21px;color:#c80000;font-weight:bold;letter-spacing:0.3px;width:33.8px;text-align:right;">4</span>
<span class="t" style="left:135px;top:724px;font-size:13.8px;line-height:21px;color:#000090;font-weight:bold;letter-spacing:0.3px;width:36px;text-align:center;">1</span>
<div style="left:2px;top:742px;width:54px;height:1px;background:#213f3f;"></div>
<div style="left:57px;top:742px;width:38px;height:1px;background:#0a2048;"></div>
<div style="left:96px;top:742px;width:77px;height:1px;background:#213f3f;"></div>
<div style="left:174px;top:742px;width:40px;height:1px;background:#4a1414;"></div>
<div style="left:215px;top:742px;width:39px;height:1px;background:#213f3f;"></div>
<span class="t" style="left:-59.299999999999955px;top:746px;font-size:13.8px;line-height:21px;color:#000;font-weight:bold;letter-spacing:0.45px;width:100.45px;text-align:right;">15038.00</span>
<span class="t" style="left:96px;top:746px;font-size:13.8px;line-height:21px;color:#c80000;font-weight:bold;letter-spacing:0.3px;width:33.8px;text-align:right;">3</span>
<span class="t" style="left:135px;top:746px;font-size:13.8px;line-height:21px;color:#000090;font-weight:bold;letter-spacing:0.3px;width:36px;text-align:center;">17</span>
<div style="left:2px;top:764px;width:54px;height:1px;background:#213f3f;"></div>
<div style="left:57px;top:764px;width:38px;height:1px;background:#0a2048;"></div>
<div style="left:96px;top:764px;width:77px;height:1px;background:#213f3f;"></div>
<div style="left:174px;top:764px;width:40px;height:1px;background:#4a1414;"></div>
<div style="left:215px;top:764px;width:39px;height:1px;background:#213f3f;"></div>
<span class="t" style="left:-59.299999999999955px;top:767px;font-size:13.8px;line-height:21px;color:#000;font-weight:bold;letter-spacing:0.45px;width:100.45px;text-align:right;">15037.75</span>
<span class="t" style="left:135px;top:767px;font-size:13.8px;line-height:21px;color:#000090;font-weight:bold;letter-spacing:0.3px;width:36px;text-align:center;">8</span>
<div style="left:2px;top:785px;width:54px;height:1px;background:#213f3f;"></div>
<div style="left:57px;top:785px;width:38px;height:1px;background:#0a2048;"></div>
<div style="left:96px;top:785px;width:77px;height:1px;background:#213f3f;"></div>
<div style="left:174px;top:785px;width:40px;height:1px;background:#4a1414;"></div>
<div style="left:215px;top:785px;width:39px;height:1px;background:#213f3f;"></div>
<span class="t" style="left:-59.299999999999955px;top:788px;font-size:13.8px;line-height:21px;color:#000;font-weight:bold;letter-spacing:0.45px;width:100.45px;text-align:right;">15037.50</span>
<span class="t" style="left:96px;top:788px;font-size:13.8px;line-height:21px;color:#c80000;font-weight:bold;letter-spacing:0.3px;width:33.8px;text-align:right;">1</span>
<span class="t" style="left:135px;top:788px;font-size:13.8px;line-height:21px;color:#000090;font-weight:bold;letter-spacing:0.3px;width:36px;text-align:center;">17</span>
<div style="left:2px;top:806px;width:54px;height:1px;background:#213f3f;"></div>
<div style="left:57px;top:806px;width:38px;height:1px;background:#0a2048;"></div>
<div style="left:96px;top:806px;width:77px;height:1px;background:#213f3f;"></div>
<div style="left:174px;top:806px;width:40px;height:1px;background:#4a1414;"></div>
<div style="left:215px;top:806px;width:39px;height:1px;background:#213f3f;"></div>
<span class="t" style="left:-59.299999999999955px;top:810px;font-size:13.8px;line-height:21px;color:#000;font-weight:bold;letter-spacing:0.45px;width:100.45px;text-align:right;">15037.25</span>
<span class="t" style="left:96px;top:810px;font-size:13.8px;line-height:21px;color:#c80000;font-weight:bold;letter-spacing:0.3px;width:33.8px;text-align:right;">7</span>
<span class="t" style="left:135px;top:810px;font-size:13.8px;line-height:21px;color:#000090;font-weight:bold;letter-spacing:0.3px;width:36px;text-align:center;">15</span>
<div style="left:2px;top:828px;width:54px;height:1px;background:#213f3f;"></div>
<div style="left:57px;top:828px;width:38px;height:1px;background:#0a2048;"></div>
<div style="left:96px;top:828px;width:77px;height:1px;background:#213f3f;"></div>
<div style="left:174px;top:828px;width:40px;height:1px;background:#4a1414;"></div>
<div style="left:215px;top:828px;width:39px;height:1px;background:#213f3f;"></div>
<span class="t" style="left:-59.299999999999955px;top:831px;font-size:13.8px;line-height:21px;color:#000;font-weight:bold;letter-spacing:0.45px;width:100.45px;text-align:right;">15037.00</span>
<span class="t" style="left:96px;top:831px;font-size:13.8px;line-height:21px;color:#c80000;font-weight:bold;letter-spacing:0.3px;width:33.8px;text-align:right;">8</span>
<span class="t" style="left:135px;top:831px;font-size:13.8px;line-height:21px;color:#000090;font-weight:bold;letter-spacing:0.3px;width:36px;text-align:center;">21</span>
<div style="left:2px;top:849px;width:54px;height:1px;background:#213f3f;"></div>
<div style="left:57px;top:849px;width:38px;height:1px;background:#0a2048;"></div>
<div style="left:96px;top:849px;width:77px;height:1px;background:#213f3f;"></div>
<div style="left:174px;top:849px;width:40px;height:1px;background:#4a1414;"></div>
<div style="left:215px;top:849px;width:39px;height:1px;background:#213f3f;"></div>
<span class="t" style="left:-59.299999999999955px;top:852px;font-size:13.8px;line-height:21px;color:#000;font-weight:bold;letter-spacing:0.45px;width:100.45px;text-align:right;">15036.75</span>
<span class="t" style="left:96px;top:852px;font-size:13.8px;line-height:21px;color:#c80000;font-weight:bold;letter-spacing:0.3px;width:33.8px;text-align:right;">8</span>
<span class="t" style="left:135px;top:852px;font-size:13.8px;line-height:21px;color:#000090;font-weight:bold;letter-spacing:0.3px;width:36px;text-align:center;">2</span>
<div style="left:2px;top:870px;width:54px;height:1px;background:#213f3f;"></div>
<div style="left:57px;top:870px;width:38px;height:1px;background:#0a2048;"></div>
<div style="left:96px;top:870px;width:77px;height:1px;background:#213f3f;"></div>
<div style="left:174px;top:870px;width:40px;height:1px;background:#4a1414;"></div>
<div style="left:215px;top:870px;width:39px;height:1px;background:#213f3f;"></div>
<span class="t" style="left:-59.299999999999955px;top:873px;font-size:13.8px;line-height:21px;color:#000;font-weight:bold;letter-spacing:0.45px;width:100.45px;text-align:right;">15036.50</span>
<span class="t" style="left:96px;top:873px;font-size:13.8px;line-height:21px;color:#c80000;font-weight:bold;letter-spacing:0.3px;width:33.8px;text-align:right;">1</span>
<span class="t" style="left:135px;top:873px;font-size:13.8px;line-height:21px;color:#000090;font-weight:bold;letter-spacing:0.3px;width:36px;text-align:center;">26</span>
<div style="left:2px;top:891px;width:54px;height:1px;background:#213f3f;"></div>
<div style="left:57px;top:891px;width:38px;height:1px;background:#0a2048;"></div>
<div style="left:96px;top:891px;width:77px;height:1px;background:#213f3f;"></div>
<div style="left:174px;top:891px;width:40px;height:1px;background:#4a1414;"></div>
<div style="left:215px;top:891px;width:39px;height:1px;background:#213f3f;"></div>
<div style="left:2px;top:-2px;width:55px;height:27px;background:#c0c0c0;"></div>
<div style="left:95px;top:-2px;width:79px;height:30px;background:#c0c0c0;"></div>
<div style="left:214px;top:-2px;width:43px;height:30px;background:#c0c0c0;"></div>
<div style="left:57px;top:-2px;width:38px;height:30px;background:#000050;"></div>
<div style="left:174px;top:-2px;width:40px;height:30px;background:#960000;"></div>
<span class="t" style="left:56px;top:7px;font-size:13.4px;line-height:18px;color:#80ff80;font-weight:bold;letter-spacing:0.9px;width:39px;text-align:center;">Buy</span>
<span class="t" style="left:172.5px;top:7px;font-size:13.7px;line-height:18px;color:#ff8080;font-weight:bold;letter-spacing:0.1px;width:41px;text-align:center;">Sell</span>
<div style="left:134px;top:-2px;width:1px;height:900px;background:#213f3f;"></div>
<div style="left:0px;top:-2px;width:1px;height:900px;background:#707070;"></div>
<div style="left:1px;top:-2px;width:1px;height:900px;background:#000;"></div>
</div>
<div style="left:1404px;top:1px;width:241px;height:940px;overflow:hidden">
<div class="win" style="left:-12px;top:0;width:253px;height:960px;border-radius:4px 4px 0 0"></div>
</div>
<div style="left:1403px;top:11px;width:15px;height:12px;background:#f4f4f4;border:1px solid #8a8a8a;border-radius:1px"></div>
<div style="left:1405px;top:13px;width:6px;height:8px;background:linear-gradient(#4a7fb0,#3a9a60)"></div>
<div style="left:1415px;top:13px;width:1px;height:4px;background:#2060c0"></div>
<span class="t" style="left:1421px;top:10px;font-size:12px;line-height:16px;color:#9a9a9a;letter-spacing:-0.84px;">RTYU23_FUT_CME [...</span>
<div class="wb" style="left:1535px;top:9px;width:31px;height:18px"></div>
<div style="left:1545px;top:17px;width:11px;height:5px;background:#f4f4f4;border:1px solid #3c3c50;border-radius:1.5px"></div>
<div class="wb" style="left:1569px;top:9px;width:31px;height:18px"></div>
<div style="left:1579px;top:13px;width:11px;height:9px;background:#f4f4f4;border:1px solid #3c3c50;border-radius:1.5px"></div>
<div style="left:1582px;top:15.5px;width:5px;height:3.5px;background:#c6d4e6;border:1px solid #3c3c50"></div>
<div class="wb" style="left:1603px;top:9px;width:31px;height:18px"></div>
<svg style="position:absolute;left:1612.5px;top:13px" width="12" height="9" viewBox="0 0 12 9"><path d="M.6 .6H4L6 2.900 8 .6h3.400L7.900 4.500l3.500 3.900H8L6 6.100 4 8.400H.6l3.500-3.900z" fill="#f4f4f4" stroke="#3c3c50" stroke-width="1.100" stroke-linejoin="round"/></svg>
<div style="left:1404px;top:30px;width:233px;height:885px;background:#c0c0c0;overflow:hidden;border-top:2px solid #696969;border-right:1px solid #fff">
<div style="left:34px;top:-2px;width:38px;height:900px;background:#000050;"></div>
<div style="left:151px;top:-2px;width:40px;height:900px;background:#960000;"></div>
<div style="left:151px;top:275px;width:40px;height:212px;background:#800000;"></div>
<span class="t" style="left:-81px;top:22px;font-size:13.8px;line-height:21px;color:#000;font-weight:bold;letter-spacing:0.45px;width:100.45px;text-align:right;">1883.1</span>
<span class="t" style="left:73px;top:22px;font-size:13.8px;line-height:21px;color:#c80000;font-weight:bold;letter-spacing:0.3px;width:33.8px;text-align:right;">18</span>
<div style="left:-1px;top:40px;width:34px;height:1px;background:#213f3f;"></div>
<div style="left:34px;top:40px;width:38px;height:1px;background:#0a2048;"></div>
<div style="left:73px;top:40px;width:77px;height:1px;background:#213f3f;"></div>
<div style="left:151px;top:40px;width:40px;height:1px;background:#4a1414;"></div>
<div style="left:192px;top:40px;width:39px;height:1px;background:#213f3f;"></div>
<span class="t" style="left:-81px;top:43px;font-size:13.8px;line-height:21px;color:#000;font-weight:bold;letter-spacing:0.45px;width:100.45px;text-align:right;">1883.0</span>
<span class="t" style="left:73px;top:43px;font-size:13.8px;line-height:21px;color:#c80000;font-weight:bold;letter-spacing:0.3px;width:33.8px;text-align:right;">1</span>
<div style="left:-1px;top:61px;width:34px;height:1px;background:#213f3f;"></div>
<div style="left:34px;top:61px;width:38px;height:1px;background:#0a2048;"></div>
<div style="left:73px;top:61px;width:77px;height:1px;background:#213f3f;"></div>
<div style="left:151px;top:61px;width:40px;height:1px;background:#4a1414;"></div>
<div style="left:192px;top:61px;width:39px;height:1px;background:#213f3f;"></div>
<span class="t" style="left:-81px;top:65px;font-size:13.8px;line-height:21px;color:#000;font-weight:bold;letter-spacing:0.45px;width:100.45px;text-align:right;">1882.9</span>
<span class="t" style="left:73px;top:65px;font-size:13.8px;line-height:21px;color:#c80000;font-weight:bold;letter-spacing:0.3px;width:33.8px;text-align:right;">13</span>
<span class="t" style="left:112px;top:65px;font-size:13.8px;line-height:21px;color:#000090;font-weight:bold;letter-spacing:0.3px;width:37.0px;text-align:center;">2</span>
<div style="left:-1px;top:83px;width:34px;height:1px;background:#213f3f;"></div>
<div style="left:34px;top:83px;width:38px;height:1px;background:#0a2048;"></div>
<div style="left:73px;top:83px;width:77px;height:1px;background:#213f3f;"></div>
<div style="left:151px;top:83px;width:40px;height:1px;background:#4a1414;"></div>
<div style="left:192px;top:83px;width:39px;height:1px;background:#213f3f;"></div>
<span class="t" style="left:-81px;top:86px;font-size:13.8px;line-height:21px;color:#000;font-weight:bold;letter-spacing:0.45px;width:100.45px;text-align:right;">1882.8</span>
<span class="t" style="left:73px;top:86px;font-size:13.8px;line-height:21px;color:#c80000;font-weight:bold;letter-spacing:0.3px;width:33.8px;text-align:right;">3</span>
<span class="t" style="left:112px;top:86px;font-size:13.8px;line-height:21px;color:#000090;font-weight:bold;letter-spacing:0.3px;width:37.0px;text-align:center;">1</span>
<div style="left:-1px;top:104px;width:34px;height:1px;background:#213f3f;"></div>
<div style="left:34px;top:104px;width:38px;height:1px;background:#0a2048;"></div>
<div style="left:73px;top:104px;width:77px;height:1px;background:#213f3f;"></div>
<div style="left:151px;top:104px;width:40px;height:1px;background:#4a1414;"></div>
<div style="left:192px;top:104px;width:39px;height:1px;background:#213f3f;"></div>
<span class="t" style="left:-81px;top:107px;font-size:13.8px;line-height:21px;color:#000;font-weight:bold;letter-spacing:0.45px;width:100.45px;text-align:right;">1882.7</span>
<span class="t" style="left:73px;top:107px;font-size:13.8px;line-height:21px;color:#c80000;font-weight:bold;letter-spacing:0.3px;width:33.8px;text-align:right;">16</span>
<span class="t" style="left:112px;top:107px;font-size:13.8px;line-height:21px;color:#000090;font-weight:bold;letter-spacing:0.3px;width:37.0px;text-align:center;">27</span>
<div style="left:-1px;top:125px;width:34px;height:1px;background:#213f3f;"></div>
<div style="left:34px;top:125px;width:38px;height:1px;background:#0a2048;"></div>
<div style="left:73px;top:125px;width:77px;height:1px;background:#213f3f;"></div>
<div style="left:151px;top:125px;width:40px;height:1px;background:#4a1414;"></div>
<div style="left:192px;top:125px;width:39px;height:1px;background:#213f3f;"></div>
<span class="t" style="left:-81px;top:128px;font-size:13.8px;line-height:21px;color:#000;font-weight:bold;letter-spacing:0.45px;width:100.45px;text-align:right;">1882.6</span>
<span class="t" style="left:73px;top:128px;font-size:13.8px;line-height:21px;color:#c80000;font-weight:bold;letter-spacing:0.3px;width:33.8px;text-align:right;">16</span>
<span class="t" style="left:112px;top:128px;font-size:13.8px;line-height:21px;color:#000090;font-weight:bold;letter-spacing:0.3px;width:37.0px;text-align:center;">10</span>
<div style="left:-1px;top:146px;width:34px;height:1px;background:#213f3f;"></div>
<div style="left:34px;top:146px;width:38px;height:1px;background:#0a2048;"></div>
<div style="left:73px;top:146px;width:77px;height:1px;background:#213f3f;"></div>
<div style="left:151px;top:146px;width:40px;height:1px;background:#4a1414;"></div>
<div style="left:192px;top:146px;width:39px;height:1px;background:#213f3f;"></div>
<span class="t" style="left:-81px;top:150px;font-size:13.8px;line-height:21px;color:#000;font-weight:bold;letter-spacing:0.45px;width:100.45px;text-align:right;">1882.5</span>
<span class="t" style="left:73px;top:150px;font-size:13.8px;line-height:21px;color:#c80000;font-weight:bold;letter-spacing:0.3px;width:33.8px;text-align:right;">10</span>
<span class="t" style="left:112px;top:150px;font-size:13.8px;line-height:21px;color:#000090;font-weight:bold;letter-spacing:0.3px;width:37.0px;text-align:center;">33</span>
<div style="left:-1px;top:168px;width:34px;height:1px;background:#213f3f;"></div>
<div style="left:34px;top:168px;width:38px;height:1px;background:#0a2048;"></div>
<div style="left:73px;top:168px;width:77px;height:1px;background:#213f3f;"></div>
<div style="left:151px;top:168px;width:40px;height:1px;background:#4a1414;"></div>
<div style="left:192px;top:168px;width:39px;height:1px;background:#213f3f;"></div>
<span class="t" style="left:-81px;top:171px;font-size:13.8px;line-height:21px;color:#000;font-weight:bold;letter-spacing:0.45px;width:100.45px;text-align:right;">1882.4</span>
<span class="t" style="left:73px;top:171px;font-size:13.8px;line-height:21px;color:#c80000;font-weight:bold;letter-spacing:0.3px;width:33.8px;text-align:right;">11</span>
<div style="left:-1px;top:189px;width:34px;height:1px;background:#213f3f;"></div>
<div style="left:34px;top:189px;width:38px;height:1px;background:#0a2048;"></div>
<div style="left:73px;top:189px;width:77px;height:1px;background:#213f3f;"></div>
<div style="left:151px;top:189px;width:40px;height:1px;background:#4a1414;"></div>
<div style="left:192px;top:189px;width:39px;height:1px;background:#213f3f;"></div>
<span class="t" style="left:-81px;top:192px;font-size:13.8px;line-height:21px;color:#000;font-weight:bold;letter-spacing:0.45px;width:100.45px;text-align:right;">1882.3</span>
<span class="t" style="left:73px;top:192px;font-size:13.8px;line-height:21px;color:#c80000;font-weight:bold;letter-spacing:0.3px;width:33.8px;text-align:right;">5</span>
<div style="left:-1px;top:210px;width:34px;height:1px;background:#213f3f;"></div>
<div style="left:34px;top:210px;width:38px;height:1px;background:#0a2048;"></div>
<div style="left:73px;top:210px;width:77px;height:1px;background:#213f3f;"></div>
<div style="left:151px;top:210px;width:40px;height:1px;background:#4a1414;"></div>
<div style="left:192px;top:210px;width:39px;height:1px;background:#213f3f;"></div>
<span class="t" style="left:-81px;top:214px;font-size:13.8px;line-height:21px;color:#000;font-weight:bold;letter-spacing:0.45px;width:100.45px;text-align:right;">1882.2</span>
<span class="t" style="left:112px;top:214px;font-size:13.8px;line-height:21px;color:#000090;font-weight:bold;letter-spacing:0.3px;width:37.0px;text-align:center;">18</span>
<span class="t" style="left:151px;top:208px;font-size:13.8px;line-height:21px;color:#000;font-weight:bold;letter-spacing:0.3px;width:40px;text-align:center;">0.2</span>
<div style="left:-1px;top:232px;width:34px;height:1px;background:#213f3f;"></div>
<div style="left:34px;top:232px;width:38px;height:1px;background:#0a2048;"></div>
<div style="left:73px;top:232px;width:77px;height:1px;background:#213f3f;"></div>
<div style="left:151px;top:232px;width:40px;height:1px;background:#4a1414;"></div>
<div style="left:192px;top:232px;width:39px;height:1px;background:#213f3f;"></div>
<span class="t" style="left:-81px;top:235px;font-size:13.8px;line-height:21px;color:#000;font-weight:bold;letter-spacing:0.45px;width:100.45px;text-align:right;">1882.1</span>
<span class="t" style="left:73px;top:235px;font-size:13.8px;line-height:21px;color:#c80000;font-weight:bold;letter-spacing:0.3px;width:33.8px;text-align:right;">38</span>
<span class="t" style="left:151px;top:230px;font-size:13.8px;line-height:21px;color:#303030;font-weight:bold;letter-spacing:0.3px;width:40px;text-align:center;">41%</span>
<div style="left:-1px;top:253px;width:34px;height:1px;background:#213f3f;"></div>
<div style="left:34px;top:253px;width:38px;height:1px;background:#0a2048;"></div>
<div style="left:73px;top:253px;width:77px;height:1px;background:#213f3f;"></div>
<div style="left:151px;top:253px;width:40px;height:1px;background:#4a1414;"></div>
<div style="left:192px;top:253px;width:39px;height:1px;background:#213f3f;"></div>
<span class="t" style="left:-81px;top:256px;font-size:13.8px;line-height:21px;color:#000;font-weight:bold;letter-spacing:0.45px;width:100.45px;text-align:right;">1882.0</span>
<span class="t" style="left:73px;top:256px;font-size:13.8px;line-height:21px;color:#c80000;font-weight:bold;letter-spacing:0.3px;width:33.8px;text-align:right;">6</span>
<span class="t" style="left:151px;top:253px;font-size:13.8px;line-height:21px;color:#303030;font-weight:bold;letter-spacing:0.3px;width:40px;text-align:center;">111</span>
<div style="left:-1px;top:274px;width:34px;height:1px;background:#213f3f;"></div>
<div style="left:34px;top:274px;width:38px;height:1px;background:#0a2048;"></div>
<div style="left:73px;top:274px;width:77px;height:1px;background:#213f3f;"></div>
<div style="left:151px;top:274px;width:40px;height:1px;background:#4a1414;"></div>
<div style="left:192px;top:274px;width:39px;height:1px;background:#213f3f;"></div>
<span class="t" style="left:-81px;top:277px;font-size:13.8px;line-height:21px;color:#000;font-weight:bold;letter-spacing:0.45px;width:100.45px;text-align:right;">1881.9</span>
<span class="t" style="left:73px;top:277px;font-size:13.8px;line-height:21px;color:#c80000;font-weight:bold;letter-spacing:0.3px;width:33.8px;text-align:right;">6</span>
<span class="t" style="left:151px;top:277px;font-size:13.8px;line-height:21px;color:#fff;font-weight:bold;letter-spacing:0.3px;width:40px;text-align:center;">16</span>
<div style="left:-1px;top:295px;width:34px;height:1px;background:#213f3f;"></div>
<div style="left:34px;top:295px;width:38px;height:1px;background:#0a2048;"></div>
<div style="left:73px;top:295px;width:77px;height:1px;background:#213f3f;"></div>
<div style="left:151px;top:295px;width:40px;height:1px;background:#4a1414;"></div>
<div style="left:192px;top:295px;width:39px;height:1px;background:#213f3f;"></div>
<span class="t" style="left:-81px;top:299px;font-size:13.8px;line-height:21px;color:#000;font-weight:bold;letter-spacing:0.45px;width:100.45px;text-align:right;">1881.8</span>
<span class="t" style="left:73px;top:299px;font-size:13.8px;line-height:21px;color:#c80000;font-weight:bold;letter-spacing:0.3px;width:33.8px;text-align:right;">2</span>
<span class="t" style="left:151px;top:299px;font-size:13.8px;line-height:21px;color:#fff;font-weight:bold;letter-spacing:0.3px;width:40px;text-align:center;">10</span>
<div style="left:-1px;top:317px;width:34px;height:1px;background:#213f3f;"></div>
<div style="left:34px;top:317px;width:38px;height:1px;background:#0a2048;"></div>
<div style="left:73px;top:317px;width:77px;height:1px;background:#213f3f;"></div>
<div style="left:151px;top:317px;width:40px;height:1px;background:#4a1414;"></div>
<div style="left:192px;top:317px;width:39px;height:1px;background:#213f3f;"></div>
<span class="t" style="left:-81px;top:320px;font-size:13.8px;line-height:21px;color:#000;font-weight:bold;letter-spacing:0.45px;width:100.45px;text-align:right;">1881.7</span>
<span class="t" style="left:73px;top:320px;font-size:13.8px;line-height:21px;color:#c80000;font-weight:bold;letter-spacing:0.3px;width:33.8px;text-align:right;">1</span>
<span class="t" style="left:151px;top:320px;font-size:13.8px;line-height:21px;color:#fff;font-weight:bold;letter-spacing:0.3px;width:40px;text-align:center;">9</span>
<div style="left:-1px;top:338px;width:34px;height:1px;background:#213f3f;"></div>
<div style="left:34px;top:338px;width:38px;height:1px;background:#0a2048;"></div>
<div style="left:73px;top:338px;width:77px;height:1px;background:#213f3f;"></div>
<div style="left:151px;top:338px;width:40px;height:1px;background:#4a1414;"></div>
<div style="left:192px;top:338px;width:39px;height:1px;background:#213f3f;"></div>
<span class="t" style="left:-81px;top:341px;font-size:13.8px;line-height:21px;color:#000;font-weight:bold;letter-spacing:0.45px;width:100.45px;text-align:right;">1881.6</span>
<span class="t" style="left:73px;top:341px;font-size:13.8px;line-height:21px;color:#c80000;font-weight:bold;letter-spacing:0.3px;width:33.8px;text-align:right;">4</span>
<span class="t" style="left:151px;top:341px;font-size:13.8px;line-height:21px;color:#fff;font-weight:bold;letter-spacing:0.3px;width:40px;text-align:center;">16</span>
<div style="left:-1px;top:359px;width:34px;height:1px;background:#213f3f;"></div>
<div style="left:34px;top:359px;width:38px;height:1px;background:#0a2048;"></div>
<div style="left:73px;top:359px;width:77px;height:1px;background:#213f3f;"></div>
<div style="left:151px;top:359px;width:40px;height:1px;background:#4a1414;"></div>
<div style="left:192px;top:359px;width:39px;height:1px;background:#213f3f;"></div>
<span class="t" style="left:-81px;top:363px;font-size:13.8px;line-height:21px;color:#000;font-weight:bold;letter-spacing:0.45px;width:100.45px;text-align:right;">1881.5</span>
<span class="t" style="left:73px;top:363px;font-size:13.8px;line-height:21px;color:#c80000;font-weight:bold;letter-spacing:0.3px;width:33.8px;text-align:right;">6</span>
<span class="t" style="left:112px;top:363px;font-size:13.8px;line-height:21px;color:#000090;font-weight:bold;letter-spacing:0.3px;width:37.0px;text-align:center;">5</span>
<span class="t" style="left:151px;top:363px;font-size:13.8px;line-height:21px;color:#fff;font-weight:bold;letter-spacing:0.3px;width:40px;text-align:center;">8</span>
<div style="left:-1px;top:381px;width:34px;height:1px;background:#213f3f;"></div>
<div style="left:34px;top:381px;width:38px;height:1px;background:#0a2048;"></div>
<div style="left:73px;top:381px;width:77px;height:1px;background:#213f3f;"></div>
<div style="left:151px;top:381px;width:40px;height:1px;background:#4a1414;"></div>
<div style="left:192px;top:381px;width:39px;height:1px;background:#213f3f;"></div>
<span class="t" style="left:-81px;top:384px;font-size:13.8px;line-height:21px;color:#000;font-weight:bold;letter-spacing:0.45px;width:100.45px;text-align:right;">1881.4</span>
<span class="t" style="left:73px;top:384px;font-size:13.8px;line-height:21px;color:#c80000;font-weight:bold;letter-spacing:0.3px;width:33.8px;text-align:right;">1</span>
<span class="t" style="left:151px;top:384px;font-size:13.8px;line-height:21px;color:#fff;font-weight:bold;letter-spacing:0.3px;width:40px;text-align:center;">10</span>
<div style="left:-1px;top:402px;width:34px;height:1px;background:#213f3f;"></div>
<div style="left:34px;top:402px;width:38px;height:1px;background:#0a2048;"></div>
<div style="left:73px;top:402px;width:77px;height:1px;background:#213f3f;"></div>
<div style="left:151px;top:402px;width:40px;height:1px;background:#4a1414;"></div>
<div style="left:192px;top:402px;width:39px;height:1px;background:#213f3f;"></div>
<span class="t" style="left:-81px;top:405px;font-size:13.8px;line-height:21px;color:#000;font-weight:bold;letter-spacing:0.45px;width:100.45px;text-align:right;">1881.3</span>
<span class="t" style="left:73px;top:405px;font-size:13.8px;line-height:21px;color:#c80000;font-weight:bold;letter-spacing:0.3px;width:33.8px;text-align:right;">1</span>
<span class="t" style="left:151px;top:405px;font-size:13.8px;line-height:21px;color:#fff;font-weight:bold;letter-spacing:0.3px;width:40px;text-align:center;">14</span>
<div style="left:-1px;top:423px;width:34px;height:1px;background:#213f3f;"></div>
<div style="left:34px;top:423px;width:38px;height:1px;background:#0a2048;"></div>
<div style="left:73px;top:423px;width:77px;height:1px;background:#213f3f;"></div>
<div style="left:151px;top:423px;width:40px;height:1px;background:#4a1414;"></div>
<div style="left:192px;top:423px;width:39px;height:1px;background:#213f3f;"></div>
<span class="t" style="left:-81px;top:426px;font-size:13.8px;line-height:21px;color:#000;font-weight:bold;letter-spacing:0.45px;width:100.45px;text-align:right;">1881.2</span>
<span class="t" style="left:151px;top:426px;font-size:13.8px;line-height:21px;color:#fff;font-weight:bold;letter-spacing:0.3px;width:40px;text-align:center;">9</span>
<div style="left:-1px;top:444px;width:34px;height:1px;background:#213f3f;"></div>
<div style="left:34px;top:444px;width:38px;height:1px;background:#0a2048;"></div>
<div style="left:73px;top:444px;width:77px;height:1px;background:#213f3f;"></div>
<div style="left:151px;top:444px;width:40px;height:1px;background:#4a1414;"></div>
<div style="left:192px;top:444px;width:39px;height:1px;background:#213f3f;"></div>
<span class="t" style="left:-81px;top:448px;font-size:13.8px;line-height:21px;color:#000;font-weight:bold;letter-spacing:0.45px;width:100.45px;text-align:right;">1881.1</span>
<span class="t" style="left:73px;top:448px;font-size:13.8px;line-height:21px;color:#c80000;font-weight:bold;letter-spacing:0.3px;width:33.8px;text-align:right;">4</span>
<span class="t" style="left:112px;top:448px;font-size:13.8px;line-height:21px;color:#000090;font-weight:bold;letter-spacing:0.3px;width:37.0px;text-align:center;">2</span>
<span class="t" style="left:151px;top:448px;font-size:13.8px;line-height:21px;color:#fff;font-weight:bold;letter-spacing:0.3px;width:40px;text-align:center;">9</span>
<div style="left:-1px;top:466px;width:34px;height:1px;background:#213f3f;"></div>
<div style="left:-1px;top:467px;width:34px;height:2px;background:#000;"></div>
<div style="left:34px;top:466px;width:38px;height:1px;background:#0a2048;"></div>
<div style="left:34px;top:467px;width:38px;height:2px;background:#000;"></div>
<div style="left:73px;top:466px;width:77px;height:1px;background:#213f3f;"></div>
<div style="left:73px;top:467px;width:77px;height:2px;background:#000;"></div>
<div style="left:151px;top:466px;width:40px;height:1px;background:#4a1414;"></div>
<div style="left:151px;top:467px;width:40px;height:2px;background:#000;"></div>
<div style="left:192px;top:466px;width:39px;height:1px;background:#213f3f;"></div>
<div style="left:192px;top:467px;width:39px;height:2px;background:#000;"></div>
<span class="t" style="left:-81px;top:467px;font-size:13.8px;line-height:21px;color:#000;font-weight:bold;letter-spacing:0.45px;width:100.45px;text-align:right;">1881.0</span>
<span class="t" style="left:73px;top:467px;font-size:13.8px;line-height:21px;color:#c80000;font-weight:bold;letter-spacing:0.3px;width:33.8px;text-align:right;">3</span>
<div style="left:112px;top:469px;width:37px;height:20px;background:#fff;"></div>
<span class="t" style="left:112px;top:467px;font-size:13.8px;line-height:21px;color:#000;font-weight:bold;letter-spacing:0.3px;width:37.0px;text-align:center;">1</span>
<span class="t" style="left:151px;top:467px;font-size:13.8px;line-height:21px;color:#fff;font-weight:bold;letter-spacing:0.3px;width:40px;text-align:center;">10</span>
<div style="left:-1px;top:487px;width:34px;height:1px;background:#213f3f;"></div>
<div style="left:34px;top:487px;width:38px;height:1px;background:#0a2048;"></div>
<div style="left:73px;top:487px;width:77px;height:1px;background:#213f3f;"></div>
<div style="left:151px;top:487px;width:40px;height:1px;background:#4a1414;"></div>
<div style="left:192px;top:487px;width:39px;height:1px;background:#213f3f;"></div>
<span class="t" style="left:-81px;top:490px;font-size:13.8px;line-height:21px;color:#000;font-weight:bold;letter-spacing:0.45px;width:100.45px;text-align:right;">1880.9</span>
<span class="t" style="left:73px;top:490px;font-size:13.8px;line-height:21px;color:#c80000;font-weight:bold;letter-spacing:0.3px;width:33.8px;text-align:right;">1</span>
<span class="t" style="left:112px;top:490px;font-size:13.8px;line-height:21px;color:#000090;font-weight:bold;letter-spacing:0.3px;width:37.0px;text-align:center;">4</span>
<div style="left:-1px;top:508px;width:34px;height:1px;background:#213f3f;"></div>
<div style="left:34px;top:508px;width:38px;height:1px;background:#0a2048;"></div>
<div style="left:73px;top:508px;width:77px;height:1px;background:#213f3f;"></div>
<div style="left:151px;top:508px;width:40px;height:1px;background:#4a1414;"></div>
<div style="left:192px;top:508px;width:39px;height:1px;background:#213f3f;"></div>
<div style="left:-1px;top:509px;width:34px;height:21px;background:#ffff00;"></div>
<span class="t" style="left:-81px;top:512px;font-size:13.8px;line-height:21px;color:#000;font-weight:bold;letter-spacing:0.45px;width:100.45px;text-align:right;">1880.8</span>
<span class="t" style="left:34px;top:512px;font-size:13.8px;line-height:21px;color:#fff;font-weight:bold;letter-spacing:0.3px;width:38px;text-align:center;">8</span>
<div style="left:73px;top:509px;width:38px;height:21px;background:#ff8080;"></div>
<span class="t" style="left:73px;top:512px;font-size:13.8px;line-height:21px;color:#c80000;font-weight:bold;letter-spacing:0.3px;width:33.8px;text-align:right;">2</span>
<span class="t" style="left:112px;top:512px;font-size:13.8px;line-height:21px;color:#000090;font-weight:bold;letter-spacing:0.3px;width:37.0px;text-align:center;">1</span>
<div style="left:192px;top:509px;width:39px;height:21px;background:#808080;"></div>
<span class="t" style="left:192px;top:512px;font-size:13.8px;line-height:21px;color:#000;font-weight:bold;letter-spacing:0.3px;width:39px;text-align:center;">2</span>
<div style="left:-1px;top:530px;width:34px;height:1px;background:#213f3f;"></div>
<div style="left:34px;top:530px;width:38px;height:1px;background:#0a2048;"></div>
<div style="left:73px;top:530px;width:77px;height:1px;background:#213f3f;"></div>
<div style="left:151px;top:530px;width:40px;height:1px;background:#4a1414;"></div>
<div style="left:192px;top:530px;width:39px;height:1px;background:#213f3f;"></div>
<span class="t" style="left:-81px;top:533px;font-size:13.8px;line-height:21px;color:#000;font-weight:bold;letter-spacing:0.45px;width:100.45px;text-align:right;">1880.7</span>
<span class="t" style="left:34px;top:533px;font-size:13.8px;line-height:21px;color:#fff;font-weight:bold;letter-spacing:0.3px;width:38px;text-align:center;">9</span>
<span class="t" style="left:112px;top:533px;font-size:13.8px;line-height:21px;color:#000090;font-weight:bold;letter-spacing:0.3px;width:37.0px;text-align:center;">6</span>
<div style="left:-1px;top:551px;width:34px;height:1px;background:#213f3f;"></div>
<div style="left:34px;top:551px;width:38px;height:1px;background:#0a2048;"></div>
<div style="left:73px;top:551px;width:77px;height:1px;background:#213f3f;"></div>
<div style="left:151px;top:551px;width:40px;height:1px;background:#4a1414;"></div>
<div style="left:192px;top:551px;width:39px;height:1px;background:#213f3f;"></div>
<span class="t" style="left:-81px;top:554px;font-size:13.8px;line-height:21px;color:#000;font-weight:bold;letter-spacing:0.45px;width:100.45px;text-align:right;">1880.6</span>
<span class="t" style="left:34px;top:554px;font-size:13.8px;line-height:21px;color:#fff;font-weight:bold;letter-spacing:0.3px;width:38px;text-align:center;">15</span>
<span class="t" style="left:73px;top:554px;font-size:13.8px;line-height:21px;color:#c80000;font-weight:bold;letter-spacing:0.3px;width:33.8px;text-align:right;">2</span>
<span class="t" style="left:112px;top:554px;font-size:13.8px;line-height:21px;color:#000090;font-weight:bold;letter-spacing:0.3px;width:37.0px;text-align:center;">2</span>
<div style="left:-1px;top:572px;width:34px;height:1px;background:#213f3f;"></div>
<div style="left:34px;top:572px;width:38px;height:1px;background:#0a2048;"></div>
<div style="left:73px;top:572px;width:77px;height:1px;background:#213f3f;"></div>
<div style="left:151px;top:572px;width:40px;height:1px;background:#4a1414;"></div>
<div style="left:192px;top:572px;width:39px;height:1px;background:#213f3f;"></div>
<span class="t" style="left:-81px;top:575px;font-size:13.8px;line-height:21px;color:#000;font-weight:bold;letter-spacing:0.45px;width:100.45px;text-align:right;">1880.5</span>
<span class="t" style="left:34px;top:575px;font-size:13.8px;line-height:21px;color:#fff;font-weight:bold;letter-spacing:0.3px;width:38px;text-align:center;">13</span>
<span class="t" style="left:112px;top:575px;font-size:13.8px;line-height:21px;color:#000090;font-weight:bold;letter-spacing:0.3px;width:37.0px;text-align:center;">10</span>
<div style="left:-1px;top:593px;width:34px;height:1px;background:#213f3f;"></div>
<div style="left:34px;top:593px;width:38px;height:1px;background:#0a2048;"></div>
<div style="left:73px;top:593px;width:77px;height:1px;background:#213f3f;"></div>
<div style="left:151px;top:593px;width:40px;height:1px;background:#4a1414;"></div>
<div style="left:192px;top:593px;width:39px;height:1px;background:#213f3f;"></div>
<span class="t" style="left:-81px;top:597px;font-size:13.8px;line-height:21px;color:#000;font-weight:bold;letter-spacing:0.45px;width:100.45px;text-align:right;">1880.4</span>
<span class="t" style="left:34px;top:597px;font-size:13.8px;line-height:21px;color:#fff;font-weight:bold;letter-spacing:0.3px;width:38px;text-align:center;">17</span>
<span class="t" style="left:112px;top:597px;font-size:13.8px;line-height:21px;color:#000090;font-weight:bold;letter-spacing:0.3px;width:37.0px;text-align:center;">3</span>
<div style="left:-1px;top:615px;width:34px;height:1px;background:#213f3f;"></div>
<div style="left:34px;top:615px;width:38px;height:1px;background:#0a2048;"></div>
<div style="left:73px;top:615px;width:77px;height:1px;background:#213f3f;"></div>
<div style="left:151px;top:615px;width:40px;height:1px;background:#4a1414;"></div>
<div style="left:192px;top:615px;width:39px;height:1px;background:#213f3f;"></div>
<span class="t" style="left:-81px;top:618px;font-size:13.8px;line-height:21px;color:#000;font-weight:bold;letter-spacing:0.45px;width:100.45px;text-align:right;">1880.3</span>
<span class="t" style="left:34px;top:618px;font-size:13.8px;line-height:21px;color:#fff;font-weight:bold;letter-spacing:0.3px;width:38px;text-align:center;">16</span>
<span class="t" style="left:112px;top:618px;font-size:13.8px;line-height:21px;color:#000090;font-weight:bold;letter-spacing:0.3px;width:37.0px;text-align:center;">8</span>
<div style="left:-1px;top:636px;width:34px;height:1px;background:#213f3f;"></div>
<div style="left:34px;top:636px;width:38px;height:1px;background:#0a2048;"></div>
<div style="left:73px;top:636px;width:77px;height:1px;background:#213f3f;"></div>
<div style="left:151px;top:636px;width:40px;height:1px;background:#4a1414;"></div>
<div style="left:192px;top:636px;width:39px;height:1px;background:#213f3f;"></div>
<span class="t" style="left:-81px;top:639px;font-size:13.8px;line-height:21px;color:#000;font-weight:bold;letter-spacing:0.45px;width:100.45px;text-align:right;">1880.2</span>
<span class="t" style="left:34px;top:639px;font-size:13.8px;line-height:21px;color:#fff;font-weight:bold;letter-spacing:0.3px;width:38px;text-align:center;">21</span>
<span class="t" style="left:112px;top:639px;font-size:13.8px;line-height:21px;color:#000090;font-weight:bold;letter-spacing:0.3px;width:37.0px;text-align:center;">42</span>
<div style="left:-1px;top:657px;width:34px;height:1px;background:#213f3f;"></div>
<div style="left:34px;top:657px;width:38px;height:1px;background:#0a2048;"></div>
<div style="left:73px;top:657px;width:77px;height:1px;background:#213f3f;"></div>
<div style="left:151px;top:657px;width:40px;height:1px;background:#4a1414;"></div>
<div style="left:192px;top:657px;width:39px;height:1px;background:#213f3f;"></div>
<span class="t" style="left:-81px;top:661px;font-size:13.8px;line-height:21px;color:#000;font-weight:bold;letter-spacing:0.45px;width:100.45px;text-align:right;">1880.1</span>
<span class="t" style="left:34px;top:661px;font-size:13.8px;line-height:21px;color:#fff;font-weight:bold;letter-spacing:0.3px;width:38px;text-align:center;">18</span>
<span class="t" style="left:112px;top:661px;font-size:13.8px;line-height:21px;color:#000090;font-weight:bold;letter-spacing:0.3px;width:37.0px;text-align:center;">1</span>
<div style="left:-1px;top:679px;width:34px;height:1px;background:#213f3f;"></div>
<div style="left:34px;top:679px;width:38px;height:1px;background:#0a2048;"></div>
<div style="left:73px;top:679px;width:77px;height:1px;background:#213f3f;"></div>
<div style="left:151px;top:679px;width:40px;height:1px;background:#4a1414;"></div>
<div style="left:192px;top:679px;width:39px;height:1px;background:#213f3f;"></div>
<span class="t" style="left:-81px;top:682px;font-size:13.8px;line-height:21px;color:#000;font-weight:bold;letter-spacing:0.45px;width:100.45px;text-align:right;">1880.0</span>
<span class="t" style="left:34px;top:682px;font-size:13.8px;line-height:21px;color:#fff;font-weight:bold;letter-spacing:0.3px;width:38px;text-align:center;">26</span>
<span class="t" style="left:112px;top:682px;font-size:13.8px;line-height:21px;color:#000090;font-weight:bold;letter-spacing:0.3px;width:37.0px;text-align:center;">172</span>
<div style="left:-1px;top:700px;width:34px;height:1px;background:#213f3f;"></div>
<div style="left:34px;top:700px;width:38px;height:1px;background:#0a2048;"></div>
<div style="left:73px;top:700px;width:77px;height:1px;background:#213f3f;"></div>
<div style="left:151px;top:700px;width:40px;height:1px;background:#4a1414;"></div>
<div style="left:192px;top:700px;width:39px;height:1px;background:#213f3f;"></div>
<span class="t" style="left:-81px;top:703px;font-size:13.8px;line-height:21px;color:#000;font-weight:bold;letter-spacing:0.45px;width:100.45px;text-align:right;">1889.9</span>
<span class="t" style="left:34px;top:703px;font-size:13.8px;line-height:21px;color:#fff;font-weight:bold;letter-spacing:0.3px;width:38px;text-align:center;">15</span>
<span class="t" style="left:73px;top:703px;font-size:13.8px;line-height:21px;color:#c80000;font-weight:bold;letter-spacing:0.3px;width:33.8px;text-align:right;">158</span>
<span class="t" style="left:112px;top:703px;font-size:13.8px;line-height:21px;color:#000090;font-weight:bold;letter-spacing:0.3px;width:37.0px;text-align:center;">8</span>
<div style="left:-1px;top:721px;width:34px;height:1px;background:#213f3f;"></div>
<div style="left:34px;top:721px;width:38px;height:1px;background:#0a2048;"></div>
<div style="left:73px;top:721px;width:77px;height:1px;background:#213f3f;"></div>
<div style="left:151px;top:721px;width:40px;height:1px;background:#4a1414;"></div>
<div style="left:192px;top:721px;width:39px;height:1px;background:#213f3f;"></div>
<span class="t" style="left:-81px;top:724px;font-size:13.8px;line-height:21px;color:#000;font-weight:bold;letter-spacing:0.45px;width:100.45px;text-align:right;">1889.8</span>
<span class="t" style="left:34px;top:725px;font-size:13.8px;line-height:21px;color:#383838;font-weight:bold;letter-spacing:0.3px;width:38px;text-align:center;">158</span>
<div style="left:-1px;top:742px;width:34px;height:1px;background:#213f3f;"></div>
<div style="left:34px;top:742px;width:38px;height:1px;background:#0a2048;"></div>
<div style="left:73px;top:742px;width:77px;height:1px;background:#213f3f;"></div>
<div style="left:151px;top:742px;width:40px;height:1px;background:#4a1414;"></div>
<div style="left:192px;top:742px;width:39px;height:1px;background:#213f3f;"></div>
<span class="t" style="left:-81px;top:746px;font-size:13.8px;line-height:21px;color:#000;font-weight:bold;letter-spacing:0.45px;width:100.45px;text-align:right;">1889.7</span>
<span class="t" style="left:34px;top:748px;font-size:13.8px;line-height:21px;color:#383838;font-weight:bold;letter-spacing:0.3px;width:38px;text-align:center;">59%</span>
<span class="t" style="left:112px;top:746px;font-size:13.8px;line-height:21px;color:#000090;font-weight:bold;letter-spacing:0.3px;width:37.0px;text-align:center;">4</span>
<div style="left:-1px;top:764px;width:34px;height:1px;background:#213f3f;"></div>
<div style="left:34px;top:764px;width:38px;height:1px;background:#0a2048;"></div>
<div style="left:73px;top:764px;width:77px;height:1px;background:#213f3f;"></div>
<div style="left:151px;top:764px;width:40px;height:1px;background:#4a1414;"></div>
<div style="left:192px;top:764px;width:39px;height:1px;background:#213f3f;"></div>
<span class="t" style="left:-81px;top:767px;font-size:13.8px;line-height:21px;color:#000;font-weight:bold;letter-spacing:0.45px;width:100.45px;text-align:right;">1889.6</span>
<span class="t" style="left:73px;top:767px;font-size:13.8px;line-height:21px;color:#c80000;font-weight:bold;letter-spacing:0.3px;width:33.8px;text-align:right;">3</span>
<span class="t" style="left:112px;top:767px;font-size:13.8px;line-height:21px;color:#000090;font-weight:bold;letter-spacing:0.3px;width:37.0px;text-align:center;">1</span>
<div style="left:-1px;top:785px;width:34px;height:1px;background:#213f3f;"></div>
<div style="left:34px;top:785px;width:38px;height:1px;background:#0a2048;"></div>
<div style="left:73px;top:785px;width:77px;height:1px;background:#213f3f;"></div>
<div style="left:151px;top:785px;width:40px;height:1px;background:#4a1414;"></div>
<div style="left:192px;top:785px;width:39px;height:1px;background:#213f3f;"></div>
<span class="t" style="left:-81px;top:788px;font-size:13.8px;line-height:21px;color:#000;font-weight:bold;letter-spacing:0.45px;width:100.45px;text-align:right;">1889.5</span>
<div style="left:-1px;top:806px;width:34px;height:1px;background:#213f3f;"></div>
<div style="left:34px;top:806px;width:38px;height:1px;background:#0a2048;"></div>
<div style="left:73px;top:806px;width:77px;height:1px;background:#213f3f;"></div>
<div style="left:151px;top:806px;width:40px;height:1px;background:#4a1414;"></div>
<div style="left:192px;top:806px;width:39px;height:1px;background:#213f3f;"></div>
<span class="t" style="left:-81px;top:810px;font-size:13.8px;line-height:21px;color:#000;font-weight:bold;letter-spacing:0.45px;width:100.45px;text-align:right;">1889.4</span>
<span class="t" style="left:112px;top:810px;font-size:13.8px;line-height:21px;color:#000090;font-weight:bold;letter-spacing:0.3px;width:37.0px;text-align:center;">5</span>
<div style="left:-1px;top:828px;width:34px;height:1px;background:#213f3f;"></div>
<div style="left:34px;top:828px;width:38px;height:1px;background:#0a2048;"></div>
<div style="left:73px;top:828px;width:77px;height:1px;background:#213f3f;"></div>
<div style="left:151px;top:828px;width:40px;height:1px;background:#4a1414;"></div>
<div style="left:192px;top:828px;width:39px;height:1px;background:#213f3f;"></div>
<span class="t" style="left:-81px;top:831px;font-size:13.8px;line-height:21px;color:#000;font-weight:bold;letter-spacing:0.45px;width:100.45px;text-align:right;">1889.3</span>
<span class="t" style="left:112px;top:831px;font-size:13.8px;line-height:21px;color:#000090;font-weight:bold;letter-spacing:0.3px;width:37.0px;text-align:center;">15</span>
<div style="left:-1px;top:849px;width:34px;height:1px;background:#213f3f;"></div>
<div style="left:34px;top:849px;width:38px;height:1px;background:#0a2048;"></div>
<div style="left:73px;top:849px;width:77px;height:1px;background:#213f3f;"></div>
<div style="left:151px;top:849px;width:40px;height:1px;background:#4a1414;"></div>
<div style="left:192px;top:849px;width:39px;height:1px;background:#213f3f;"></div>
<span class="t" style="left:-81px;top:852px;font-size:13.8px;line-height:21px;color:#000;font-weight:bold;letter-spacing:0.45px;width:100.45px;text-align:right;">1889.2</span>
<span class="t" style="left:73px;top:852px;font-size:13.8px;line-height:21px;color:#c80000;font-weight:bold;letter-spacing:0.3px;width:33.8px;text-align:right;">5</span>
<span class="t" style="left:112px;top:852px;font-size:13.8px;line-height:21px;color:#000090;font-weight:bold;letter-spacing:0.3px;width:37.0px;text-align:center;">3</span>
<div style="left:-1px;top:870px;width:34px;height:1px;background:#213f3f;"></div>
<div style="left:34px;top:870px;width:38px;height:1px;background:#0a2048;"></div>
<div style="left:73px;top:870px;width:77px;height:1px;background:#213f3f;"></div>
<div style="left:151px;top:870px;width:40px;height:1px;background:#4a1414;"></div>
<div style="left:192px;top:870px;width:39px;height:1px;background:#213f3f;"></div>
<span class="t" style="left:-81px;top:873px;font-size:13.8px;line-height:21px;color:#000;font-weight:bold;letter-spacing:0.45px;width:100.45px;text-align:right;">1889.1</span>
<span class="t" style="left:73px;top:873px;font-size:13.8px;line-height:21px;color:#c80000;font-weight:bold;letter-spacing:0.3px;width:33.8px;text-align:right;">2</span>
<div style="left:-1px;top:891px;width:34px;height:1px;background:#213f3f;"></div>
<div style="left:34px;top:891px;width:38px;height:1px;background:#0a2048;"></div>
<div style="left:73px;top:891px;width:77px;height:1px;background:#213f3f;"></div>
<div style="left:151px;top:891px;width:40px;height:1px;background:#4a1414;"></div>
<div style="left:192px;top:891px;width:39px;height:1px;background:#213f3f;"></div>
<div style="left:-1px;top:-2px;width:35px;height:27px;background:#c0c0c0;"></div>
<div style="left:72px;top:-2px;width:79px;height:30px;background:#c0c0c0;"></div>
<div style="left:191px;top:-2px;width:43px;height:30px;background:#c0c0c0;"></div>
<div style="left:34px;top:-2px;width:38px;height:30px;background:#000050;"></div>
<div style="left:151px;top:-2px;width:40px;height:30px;background:#960000;"></div>
<span class="t" style="left:33px;top:7px;font-size:13.4px;line-height:18px;color:#80ff80;font-weight:bold;letter-spacing:0.9px;width:39px;text-align:center;">Buy</span>
<span class="t" style="left:149.5px;top:7px;font-size:13.7px;line-height:18px;color:#ff8080;font-weight:bold;letter-spacing:0.1px;width:41px;text-align:center;">Sell</span>
<div style="left:111px;top:-2px;width:1px;height:900px;background:#213f3f;"></div>
</div>
<div style="left:1644px;top:0px;width:255px;height:940px;overflow:hidden">
<div class="win" style="left:0px;top:0;width:255px;height:960px;border-radius:4px 4px 0 0"></div>
</div>
<div style="left:1654px;top:10px;width:15px;height:12px;background:#f4f4f4;border:1px solid #8a8a8a;border-radius:1px"></div>
<div style="left:1656px;top:12px;width:6px;height:8px;background:linear-gradient(#4a7fb0,#3a9a60)"></div>
<div style="left:1666px;top:12px;width:1px;height:4px;background:#2060c0"></div>
<span class="t" style="left:1674px;top:9px;font-size:12px;line-height:16px;color:#9a9a9a;letter-spacing:-0.61px;">YMU23_FUT_CME [...</span>
<div class="wb" style="left:1789px;top:8px;width:31px;height:18px"></div>
<div style="left:1799px;top:16px;width:11px;height:5px;background:#f4f4f4;border:1px solid #3c3c50;border-radius:1.5px"></div>
<div class="wb" style="left:1823px;top:8px;width:31px;height:18px"></div>
<div style="left:1833px;top:12px;width:11px;height:9px;background:#f4f4f4;border:1px solid #3c3c50;border-radius:1.5px"></div>
<div style="left:1836px;top:14.5px;width:5px;height:3.5px;background:#c6d4e6;border:1px solid #3c3c50"></div>
<div class="wb" style="left:1857px;top:8px;width:31px;height:18px"></div>
<svg style="position:absolute;left:1866.5px;top:12px" width="12" height="9" viewBox="0 0 12 9"><path d="M.6 .6H4L6 2.900 8 .6h3.400L7.900 4.500l3.500 3.900H8L6 6.100 4 8.400H.6l3.500-3.900z" fill="#f4f4f4" stroke="#3c3c50" stroke-width="1.100" stroke-linejoin="round"/></svg>
<div style="left:1653px;top:29px;width:237px;height:886px;background:#c0c0c0;overflow:hidden;border-top:2px solid #696969;border-right:1px solid #fff">
<div style="left:39px;top:-2px;width:38px;height:900px;background:#000050;"></div>
<div style="left:156px;top:-2px;width:40px;height:900px;background:#960000;"></div>
<div style="left:156px;top:105px;width:40px;height:212px;background:#800000;"></div>
<span class="t" style="left:-78px;top:22px;font-size:13.8px;line-height:21px;color:#000;font-weight:bold;letter-spacing:0.45px;width:100.45px;text-align:right;">34260</span>
<span class="t" style="left:78px;top:22px;font-size:13.8px;line-height:21px;color:#c80000;font-weight:bold;letter-spacing:0.3px;width:33.3px;text-align:right;">3</span>
<div style="left:2px;top:40px;width:36px;height:1px;background:#213f3f;"></div>
<div style="left:39px;top:40px;width:38px;height:1px;background:#0a2048;"></div>
<div style="left:78px;top:40px;width:77px;height:1px;background:#213f3f;"></div>
<div style="left:156px;top:40px;width:40px;height:1px;background:#4a1414;"></div>
<div style="left:197px;top:40px;width:39px;height:1px;background:#213f3f;"></div>
<span class="t" style="left:-78px;top:43px;font-size:13.8px;line-height:21px;color:#000;font-weight:bold;letter-spacing:0.45px;width:100.45px;text-align:right;">34259</span>
<span class="t" style="left:78px;top:43px;font-size:13.8px;line-height:21px;color:#c80000;font-weight:bold;letter-spacing:0.3px;width:33.3px;text-align:right;">3</span>
<span class="t" style="left:156px;top:37px;font-size:13.8px;line-height:21px;color:#000;font-weight:bold;letter-spacing:0.3px;width:40px;text-align:center;">2</span>
<div style="left:2px;top:61px;width:36px;height:1px;background:#213f3f;"></div>
<div style="left:39px;top:61px;width:38px;height:1px;background:#0a2048;"></div>
<div style="left:78px;top:61px;width:77px;height:1px;background:#213f3f;"></div>
<div style="left:156px;top:61px;width:40px;height:1px;background:#4a1414;"></div>
<div style="left:197px;top:61px;width:39px;height:1px;background:#213f3f;"></div>
<span class="t" style="left:-78px;top:65px;font-size:13.8px;line-height:21px;color:#000;font-weight:bold;letter-spacing:0.45px;width:100.45px;text-align:right;">34258</span>
<span class="t" style="left:156px;top:60px;font-size:13.8px;line-height:21px;color:#303030;font-weight:bold;letter-spacing:0.3px;width:40px;text-align:center;">49%</span>
<div style="left:2px;top:83px;width:36px;height:1px;background:#213f3f;"></div>
<div style="left:39px;top:83px;width:38px;height:1px;background:#0a2048;"></div>
<div style="left:78px;top:83px;width:77px;height:1px;background:#213f3f;"></div>
<div style="left:156px;top:83px;width:40px;height:1px;background:#4a1414;"></div>
<div style="left:197px;top:83px;width:39px;height:1px;background:#213f3f;"></div>
<span class="t" style="left:-78px;top:86px;font-size:13.8px;line-height:21px;color:#000;font-weight:bold;letter-spacing:0.45px;width:100.45px;text-align:right;">34257</span>
<span class="t" style="left:117px;top:86px;font-size:13.8px;line-height:21px;color:#000090;font-weight:bold;letter-spacing:0.3px;width:37.0px;text-align:center;">2</span>
<span class="t" style="left:156px;top:83px;font-size:13.8px;line-height:21px;color:#303030;font-weight:bold;letter-spacing:0.3px;width:40px;text-align:center;">62</span>
<div style="left:2px;top:104px;width:36px;height:1px;background:#213f3f;"></div>
<div style="left:39px;top:104px;width:38px;height:1px;background:#0a2048;"></div>
<div style="left:78px;top:104px;width:77px;height:1px;background:#213f3f;"></div>
<div style="left:156px;top:104px;width:40px;height:1px;background:#4a1414;"></div>
<div style="left:197px;top:104px;width:39px;height:1px;background:#213f3f;"></div>
<span class="t" style="left:-78px;top:107px;font-size:13.8px;line-height:21px;color:#000;font-weight:bold;letter-spacing:0.45px;width:100.45px;text-align:right;">34256</span>
<span class="t" style="left:78px;top:107px;font-size:13.8px;line-height:21px;color:#c80000;font-weight:bold;letter-spacing:0.3px;width:33.3px;text-align:right;">5</span>
<span class="t" style="left:117px;top:107px;font-size:13.8px;line-height:21px;color:#000090;font-weight:bold;letter-spacing:0.3px;width:37.0px;text-align:center;">1</span>
<span class="t" style="left:156px;top:107px;font-size:13.8px;line-height:21px;color:#fff;font-weight:bold;letter-spacing:0.3px;width:40px;text-align:center;">7</span>
<div style="left:2px;top:125px;width:36px;height:1px;background:#213f3f;"></div>
<div style="left:39px;top:125px;width:38px;height:1px;background:#0a2048;"></div>
<div style="left:78px;top:125px;width:77px;height:1px;background:#213f3f;"></div>
<div style="left:156px;top:125px;width:40px;height:1px;background:#4a1414;"></div>
<div style="left:197px;top:125px;width:39px;height:1px;background:#213f3f;"></div>
<span class="t" style="left:-78px;top:128px;font-size:13.8px;line-height:21px;color:#000;font-weight:bold;letter-spacing:0.45px;width:100.45px;text-align:right;">34255</span>
<span class="t" style="left:117px;top:128px;font-size:13.8px;line-height:21px;color:#000090;font-weight:bold;letter-spacing:0.3px;width:37.0px;text-align:center;">1</span>
<span class="t" style="left:156px;top:128px;font-size:13.8px;line-height:21px;color:#fff;font-weight:bold;letter-spacing:0.3px;width:40px;text-align:center;">5</span>
<div style="left:2px;top:146px;width:36px;height:1px;background:#213f3f;"></div>
<div style="left:39px;top:146px;width:38px;height:1px;background:#0a2048;"></div>
<div style="left:78px;top:146px;width:77px;height:1px;background:#213f3f;"></div>
<div style="left:156px;top:146px;width:40px;height:1px;background:#4a1414;"></div>
<div style="left:197px;top:146px;width:39px;height:1px;background:#213f3f;"></div>
<span class="t" style="left:-78px;top:150px;font-size:13.8px;line-height:21px;color:#000;font-weight:bold;letter-spacing:0.45px;width:100.45px;text-align:right;">34254</span>
<span class="t" style="left:117px;top:150px;font-size:13.8px;line-height:21px;color:#000090;font-weight:bold;letter-spacing:0.3px;width:37.0px;text-align:center;">7</span>
<span class="t" style="left:156px;top:150px;font-size:13.8px;line-height:21px;color:#fff;font-weight:bold;letter-spacing:0.3px;width:40px;text-align:center;">7</span>
<div style="left:2px;top:168px;width:36px;height:1px;background:#213f3f;"></div>
<div style="left:39px;top:168px;width:38px;height:1px;background:#0a2048;"></div>
<div style="left:78px;top:168px;width:77px;height:1px;background:#213f3f;"></div>
<div style="left:156px;top:168px;width:40px;height:1px;background:#4a1414;"></div>
<div style="left:197px;top:168px;width:39px;height:1px;background:#213f3f;"></div>
<span class="t" style="left:-78px;top:171px;font-size:13.8px;line-height:21px;color:#000;font-weight:bold;letter-spacing:0.45px;width:100.45px;text-align:right;">34253</span>
<span class="t" style="left:78px;top:171px;font-size:13.8px;line-height:21px;color:#c80000;font-weight:bold;letter-spacing:0.3px;width:33.3px;text-align:right;">4</span>
<span class="t" style="left:156px;top:171px;font-size:13.8px;line-height:21px;color:#fff;font-weight:bold;letter-spacing:0.3px;width:40px;text-align:center;">6</span>
<div style="left:2px;top:189px;width:36px;height:1px;background:#213f3f;"></div>
<div style="left:39px;top:189px;width:38px;height:1px;background:#0a2048;"></div>
<div style="left:78px;top:189px;width:77px;height:1px;background:#213f3f;"></div>
<div style="left:156px;top:189px;width:40px;height:1px;background:#4a1414;"></div>
<div style="left:197px;top:189px;width:39px;height:1px;background:#213f3f;"></div>
<span class="t" style="left:-78px;top:192px;font-size:13.8px;line-height:21px;color:#000;font-weight:bold;letter-spacing:0.45px;width:100.45px;text-align:right;">34252</span>
<span class="t" style="left:117px;top:192px;font-size:13.8px;line-height:21px;color:#000090;font-weight:bold;letter-spacing:0.3px;width:37.0px;text-align:center;">5</span>
<span class="t" style="left:156px;top:192px;font-size:13.8px;line-height:21px;color:#fff;font-weight:bold;letter-spacing:0.3px;width:40px;text-align:center;">8</span>
<div style="left:2px;top:210px;width:36px;height:1px;background:#213f3f;"></div>
<div style="left:39px;top:210px;width:38px;height:1px;background:#0a2048;"></div>
<div style="left:78px;top:210px;width:77px;height:1px;background:#213f3f;"></div>
<div style="left:156px;top:210px;width:40px;height:1px;background:#4a1414;"></div>
<div style="left:197px;top:210px;width:39px;height:1px;background:#213f3f;"></div>
<span class="t" style="left:-78px;top:214px;font-size:13.8px;line-height:21px;color:#000;font-weight:bold;letter-spacing:0.45px;width:100.45px;text-align:right;">34251</span>
<span class="t" style="left:78px;top:214px;font-size:13.8px;line-height:21px;color:#c80000;font-weight:bold;letter-spacing:0.3px;width:33.3px;text-align:right;">7</span>
<span class="t" style="left:156px;top:214px;font-size:13.8px;line-height:21px;color:#fff;font-weight:bold;letter-spacing:0.3px;width:40px;text-align:center;">6</span>
<div style="left:2px;top:232px;width:36px;height:1px;background:#213f3f;"></div>
<div style="left:39px;top:232px;width:38px;height:1px;background:#0a2048;"></div>
<div style="left:78px;top:232px;width:77px;height:1px;background:#213f3f;"></div>
<div style="left:156px;top:232px;width:40px;height:1px;background:#4a1414;"></div>
<div style="left:197px;top:232px;width:39px;height:1px;background:#213f3f;"></div>
<span class="t" style="left:-78px;top:235px;font-size:13.8px;line-height:21px;color:#000;font-weight:bold;letter-spacing:0.45px;width:100.45px;text-align:right;">34250</span>
<span class="t" style="left:117px;top:235px;font-size:13.8px;line-height:21px;color:#000090;font-weight:bold;letter-spacing:0.3px;width:37.0px;text-align:center;">2</span>
<span class="t" style="left:156px;top:235px;font-size:13.8px;line-height:21px;color:#fff;font-weight:bold;letter-spacing:0.3px;width:40px;text-align:center;">10</span>
<div style="left:2px;top:253px;width:36px;height:1px;background:#213f3f;"></div>
<div style="left:39px;top:253px;width:38px;height:1px;background:#0a2048;"></div>
<div style="left:78px;top:253px;width:77px;height:1px;background:#213f3f;"></div>
<div style="left:156px;top:253px;width:40px;height:1px;background:#4a1414;"></div>
<div style="left:197px;top:253px;width:39px;height:1px;background:#213f3f;"></div>
<span class="t" style="left:-78px;top:256px;font-size:13.8px;line-height:21px;color:#000;font-weight:bold;letter-spacing:0.45px;width:100.45px;text-align:right;">34249</span>
<span class="t" style="left:78px;top:256px;font-size:13.8px;line-height:21px;color:#c80000;font-weight:bold;letter-spacing:0.3px;width:33.3px;text-align:right;">6</span>
<span class="t" style="left:156px;top:256px;font-size:13.8px;line-height:21px;color:#fff;font-weight:bold;letter-spacing:0.3px;width:40px;text-align:center;">6</span>
<div style="left:2px;top:274px;width:36px;height:1px;background:#213f3f;"></div>
<div style="left:39px;top:274px;width:38px;height:1px;background:#0a2048;"></div>
<div style="left:78px;top:274px;width:77px;height:1px;background:#213f3f;"></div>
<div style="left:156px;top:274px;width:40px;height:1px;background:#4a1414;"></div>
<div style="left:197px;top:274px;width:39px;height:1px;background:#213f3f;"></div>
<span class="t" style="left:-78px;top:277px;font-size:13.8px;line-height:21px;color:#000;font-weight:bold;letter-spacing:0.45px;width:100.45px;text-align:right;">34248</span>
<span class="t" style="left:117px;top:277px;font-size:13.8px;line-height:21px;color:#000090;font-weight:bold;letter-spacing:0.3px;width:37.0px;text-align:center;">4</span>
<span class="t" style="left:156px;top:277px;font-size:13.8px;line-height:21px;color:#fff;font-weight:bold;letter-spacing:0.3px;width:40px;text-align:center;">5</span>
<div style="left:2px;top:295px;width:36px;height:1px;background:#213f3f;"></div>
<div style="left:39px;top:295px;width:38px;height:1px;background:#0a2048;"></div>
<div style="left:78px;top:295px;width:77px;height:1px;background:#213f3f;"></div>
<div style="left:156px;top:295px;width:40px;height:1px;background:#4a1414;"></div>
<div style="left:197px;top:295px;width:39px;height:1px;background:#213f3f;"></div>
<span class="t" style="left:-78px;top:299px;font-size:13.8px;line-height:21px;color:#000;font-weight:bold;letter-spacing:0.45px;width:100.45px;text-align:right;">34247</span>
<span class="t" style="left:78px;top:299px;font-size:13.8px;line-height:21px;color:#c80000;font-weight:bold;letter-spacing:0.3px;width:33.3px;text-align:right;">1</span>
<div style="left:117px;top:296px;width:37px;height:21px;background:#fff;"></div>
<span class="t" style="left:117px;top:299px;font-size:13.8px;line-height:21px;color:#000;font-weight:bold;letter-spacing:0.3px;width:37.0px;text-align:center;">2</span>
<span class="t" style="left:156px;top:299px;font-size:13.8px;line-height:21px;color:#fff;font-weight:bold;letter-spacing:0.3px;width:40px;text-align:center;">2</span>
<div style="left:2px;top:317px;width:36px;height:1px;background:#213f3f;"></div>
<div style="left:39px;top:317px;width:38px;height:1px;background:#0a2048;"></div>
<div style="left:78px;top:317px;width:77px;height:1px;background:#213f3f;"></div>
<div style="left:156px;top:317px;width:40px;height:1px;background:#4a1414;"></div>
<div style="left:197px;top:317px;width:39px;height:1px;background:#213f3f;"></div>
<div style="left:2px;top:318px;width:36px;height:20px;background:#ffff00;"></div>
<span class="t" style="left:-78px;top:320px;font-size:13.8px;line-height:21px;color:#000;font-weight:bold;letter-spacing:0.45px;width:100.45px;text-align:right;">34246</span>
<div style="left:78px;top:318px;width:38px;height:20px;background:#ff8080;"></div>
<span class="t" style="left:78px;top:320px;font-size:13.8px;line-height:21px;color:#c80000;font-weight:bold;letter-spacing:0.3px;width:33.3px;text-align:right;">1</span>
<span class="t" style="left:117px;top:320px;font-size:13.8px;line-height:21px;color:#000090;font-weight:bold;letter-spacing:0.3px;width:37.0px;text-align:center;">1</span>
<div style="left:197px;top:318px;width:39px;height:20px;background:#808080;"></div>
<span class="t" style="left:197px;top:320px;font-size:13.8px;line-height:21px;color:#000;font-weight:bold;letter-spacing:0.3px;width:39px;text-align:center;">1</span>
<div style="left:2px;top:338px;width:36px;height:1px;background:#213f3f;"></div>
<div style="left:39px;top:338px;width:38px;height:1px;background:#0a2048;"></div>
<div style="left:78px;top:338px;width:77px;height:1px;background:#213f3f;"></div>
<div style="left:156px;top:338px;width:40px;height:1px;background:#4a1414;"></div>
<div style="left:197px;top:338px;width:39px;height:1px;background:#213f3f;"></div>
<span class="t" style="left:-78px;top:341px;font-size:13.8px;line-height:21px;color:#000;font-weight:bold;letter-spacing:0.45px;width:100.45px;text-align:right;">34245</span>
<span class="t" style="left:39px;top:341px;font-size:13.8px;line-height:21px;color:#fff;font-weight:bold;letter-spacing:0.3px;width:38px;text-align:center;">4</span>
<div style="left:2px;top:359px;width:36px;height:1px;background:#213f3f;"></div>
<div style="left:39px;top:359px;width:38px;height:1px;background:#0a2048;"></div>
<div style="left:78px;top:359px;width:77px;height:1px;background:#213f3f;"></div>
<div style="left:156px;top:359px;width:40px;height:1px;background:#4a1414;"></div>
<div style="left:197px;top:359px;width:39px;height:1px;background:#213f3f;"></div>
<span class="t" style="left:-78px;top:363px;font-size:13.8px;line-height:21px;color:#000;font-weight:bold;letter-spacing:0.45px;width:100.45px;text-align:right;">34244</span>
<span class="t" style="left:39px;top:363px;font-size:13.8px;line-height:21px;color:#fff;font-weight:bold;letter-spacing:0.3px;width:38px;text-align:center;">7</span>
<span class="t" style="left:117px;top:363px;font-size:13.8px;line-height:21px;color:#000090;font-weight:bold;letter-spacing:0.3px;width:37.0px;text-align:center;">3</span>
<div style="left:2px;top:381px;width:36px;height:1px;background:#213f3f;"></div>
<div style="left:39px;top:381px;width:38px;height:1px;background:#0a2048;"></div>
<div style="left:78px;top:381px;width:77px;height:1px;background:#213f3f;"></div>
<div style="left:156px;top:381px;width:40px;height:1px;background:#4a1414;"></div>
<div style="left:197px;top:381px;width:39px;height:1px;background:#213f3f;"></div>
<span class="t" style="left:-78px;top:384px;font-size:13.8px;line-height:21px;color:#000;font-weight:bold;letter-spacing:0.45px;width:100.45px;text-align:right;">34243</span>
<span class="t" style="left:39px;top:384px;font-size:13.8px;line-height:21px;color:#fff;font-weight:bold;letter-spacing:0.3px;width:38px;text-align:center;">2</span>
<span class="t" style="left:117px;top:384px;font-size:13.8px;line-height:21px;color:#000090;font-weight:bold;letter-spacing:0.3px;width:37.0px;text-align:center;">1</span>
<div style="left:2px;top:402px;width:36px;height:1px;background:#213f3f;"></div>
<div style="left:39px;top:402px;width:38px;height:1px;background:#0a2048;"></div>
<div style="left:78px;top:402px;width:77px;height:1px;background:#213f3f;"></div>
<div style="left:156px;top:402px;width:40px;height:1px;background:#4a1414;"></div>
<div style="left:197px;top:402px;width:39px;height:1px;background:#213f3f;"></div>
<span class="t" style="left:-78px;top:405px;font-size:13.8px;line-height:21px;color:#000;font-weight:bold;letter-spacing:0.45px;width:100.45px;text-align:right;">34242</span>
<span class="t" style="left:39px;top:405px;font-size:13.8px;line-height:21px;color:#fff;font-weight:bold;letter-spacing:0.3px;width:38px;text-align:center;">5</span>
<div style="left:2px;top:423px;width:36px;height:1px;background:#213f3f;"></div>
<div style="left:39px;top:423px;width:38px;height:1px;background:#0a2048;"></div>
<div style="left:78px;top:423px;width:77px;height:1px;background:#213f3f;"></div>
<div style="left:156px;top:423px;width:40px;height:1px;background:#4a1414;"></div>
<div style="left:197px;top:423px;width:39px;height:1px;background:#213f3f;"></div>
<span class="t" style="left:-78px;top:426px;font-size:13.8px;line-height:21px;color:#000;font-weight:bold;letter-spacing:0.45px;width:100.45px;text-align:right;">34241</span>
<span class="t" style="left:39px;top:426px;font-size:13.8px;line-height:21px;color:#fff;font-weight:bold;letter-spacing:0.3px;width:38px;text-align:center;">7</span>
<span class="t" style="left:117px;top:426px;font-size:13.8px;line-height:21px;color:#000090;font-weight:bold;letter-spacing:0.3px;width:37.0px;text-align:center;">1</span>
<div style="left:2px;top:444px;width:36px;height:1px;background:#213f3f;"></div>
<div style="left:2px;top:445px;width:36px;height:2px;background:#000;"></div>
<div style="left:39px;top:444px;width:38px;height:1px;background:#0a2048;"></div>
<div style="left:39px;top:445px;width:38px;height:2px;background:#000;"></div>
<div style="left:78px;top:444px;width:77px;height:1px;background:#213f3f;"></div>
<div style="left:78px;top:445px;width:77px;height:2px;background:#000;"></div>
<div style="left:156px;top:444px;width:40px;height:1px;background:#4a1414;"></div>
<div style="left:156px;top:445px;width:40px;height:2px;background:#000;"></div>
<div style="left:197px;top:444px;width:39px;height:1px;background:#213f3f;"></div>
<div style="left:197px;top:445px;width:39px;height:2px;background:#000;"></div>
<span class="t" style="left:-78px;top:446px;font-size:13.8px;line-height:21px;color:#000;font-weight:bold;letter-spacing:0.45px;width:100.45px;text-align:right;">34240</span>
<span class="t" style="left:39px;top:446px;font-size:13.8px;line-height:21px;color:#fff;font-weight:bold;letter-spacing:0.3px;width:38px;text-align:center;">9</span>
<span class="t" style="left:117px;top:446px;font-size:13.8px;line-height:21px;color:#000090;font-weight:bold;letter-spacing:0.3px;width:37.0px;text-align:center;">1</span>
<div style="left:2px;top:466px;width:36px;height:1px;background:#213f3f;"></div>
<div style="left:39px;top:466px;width:38px;height:1px;background:#0a2048;"></div>
<div style="left:78px;top:466px;width:77px;height:1px;background:#213f3f;"></div>
<div style="left:156px;top:466px;width:40px;height:1px;background:#4a1414;"></div>
<div style="left:197px;top:466px;width:39px;height:1px;background:#213f3f;"></div>
<span class="t" style="left:-78px;top:469px;font-size:13.8px;line-height:21px;color:#000;font-weight:bold;letter-spacing:0.45px;width:100.45px;text-align:right;">34239</span>
<span class="t" style="left:39px;top:469px;font-size:13.8px;line-height:21px;color:#fff;font-weight:bold;letter-spacing:0.3px;width:38px;text-align:center;">9</span>
<span class="t" style="left:117px;top:469px;font-size:13.8px;line-height:21px;color:#000090;font-weight:bold;letter-spacing:0.3px;width:37.0px;text-align:center;">1</span>
<div style="left:2px;top:487px;width:36px;height:1px;background:#213f3f;"></div>
<div style="left:39px;top:487px;width:38px;height:1px;background:#0a2048;"></div>
<div style="left:78px;top:487px;width:77px;height:1px;background:#213f3f;"></div>
<div style="left:156px;top:487px;width:40px;height:1px;background:#4a1414;"></div>
<div style="left:197px;top:487px;width:39px;height:1px;background:#213f3f;"></div>
<span class="t" style="left:-78px;top:490px;font-size:13.8px;line-height:21px;color:#000;font-weight:bold;letter-spacing:0.45px;width:100.45px;text-align:right;">34238</span>
<span class="t" style="left:39px;top:490px;font-size:13.8px;line-height:21px;color:#fff;font-weight:bold;letter-spacing:0.3px;width:38px;text-align:center;">8</span>
<span class="t" style="left:117px;top:490px;font-size:13.8px;line-height:21px;color:#000090;font-weight:bold;letter-spacing:0.3px;width:37.0px;text-align:center;">2</span>
<div style="left:2px;top:508px;width:36px;height:1px;background:#213f3f;"></div>
<div style="left:39px;top:508px;width:38px;height:1px;background:#0a2048;"></div>
<div style="left:78px;top:508px;width:77px;height:1px;background:#213f3f;"></div>
<div style="left:156px;top:508px;width:40px;height:1px;background:#4a1414;"></div>
<div style="left:197px;top:508px;width:39px;height:1px;background:#213f3f;"></div>
<span class="t" style="left:-78px;top:512px;font-size:13.8px;line-height:21px;color:#000;font-weight:bold;letter-spacing:0.45px;width:100.45px;text-align:right;">34237</span>
<span class="t" style="left:39px;top:512px;font-size:13.8px;line-height:21px;color:#fff;font-weight:bold;letter-spacing:0.3px;width:38px;text-align:center;">6</span>
<span class="t" style="left:117px;top:512px;font-size:13.8px;line-height:21px;color:#000090;font-weight:bold;letter-spacing:0.3px;width:37.0px;text-align:center;">1</span>
<div style="left:2px;top:530px;width:36px;height:1px;background:#213f3f;"></div>
<div style="left:39px;top:530px;width:38px;height:1px;background:#0a2048;"></div>
<div style="left:78px;top:530px;width:77px;height:1px;background:#213f3f;"></div>
<div style="left:156px;top:530px;width:40px;height:1px;background:#4a1414;"></div>
<div style="left:197px;top:530px;width:39px;height:1px;background:#213f3f;"></div>
<span class="t" style="left:-78px;top:533px;font-size:13.8px;line-height:21px;color:#000;font-weight:bold;letter-spacing:0.45px;width:100.45px;text-align:right;">34236</span>
<span class="t" style="left:39px;top:533px;font-size:13.8px;line-height:21px;color:#fff;font-weight:bold;letter-spacing:0.3px;width:38px;text-align:center;">7</span>
<span class="t" style="left:117px;top:533px;font-size:13.8px;line-height:21px;color:#000090;font-weight:bold;letter-spacing:0.3px;width:37.0px;text-align:center;">1</span>
<div style="left:2px;top:551px;width:36px;height:1px;background:#213f3f;"></div>
<div style="left:39px;top:551px;width:38px;height:1px;background:#0a2048;"></div>
<div style="left:78px;top:551px;width:77px;height:1px;background:#213f3f;"></div>
<div style="left:156px;top:551px;width:40px;height:1px;background:#4a1414;"></div>
<div style="left:197px;top:551px;width:39px;height:1px;background:#213f3f;"></div>
<span class="t" style="left:-78px;top:554px;font-size:13.8px;line-height:21px;color:#000;font-weight:bold;letter-spacing:0.45px;width:100.45px;text-align:right;">34235</span>
<span class="t" style="left:39px;top:555px;font-size:13.8px;line-height:21px;color:#383838;font-weight:bold;letter-spacing:0.3px;width:38px;text-align:center;">64</span>
<span class="t" style="left:117px;top:554px;font-size:13.8px;line-height:21px;color:#000090;font-weight:bold;letter-spacing:0.3px;width:37.0px;text-align:center;">7</span>
<div style="left:2px;top:572px;width:36px;height:1px;background:#213f3f;"></div>
<div style="left:39px;top:572px;width:38px;height:1px;background:#0a2048;"></div>
<div style="left:78px;top:572px;width:77px;height:1px;background:#213f3f;"></div>
<div style="left:156px;top:572px;width:40px;height:1px;background:#4a1414;"></div>
<div style="left:197px;top:572px;width:39px;height:1px;background:#213f3f;"></div>
<span class="t" style="left:-78px;top:575px;font-size:13.8px;line-height:21px;color:#000;font-weight:bold;letter-spacing:0.45px;width:100.45px;text-align:right;">34234</span>
<span class="t" style="left:39px;top:577px;font-size:13.8px;line-height:21px;color:#383838;font-weight:bold;letter-spacing:0.3px;width:38px;text-align:center;">51%</span>
<span class="t" style="left:117px;top:575px;font-size:13.8px;line-height:21px;color:#000090;font-weight:bold;letter-spacing:0.3px;width:37.0px;text-align:center;">5</span>
<div style="left:2px;top:593px;width:36px;height:1px;background:#213f3f;"></div>
<div style="left:39px;top:593px;width:38px;height:1px;background:#0a2048;"></div>
<div style="left:78px;top:593px;width:77px;height:1px;background:#213f3f;"></div>
<div style="left:156px;top:593px;width:40px;height:1px;background:#4a1414;"></div>
<div style="left:197px;top:593px;width:39px;height:1px;background:#213f3f;"></div>
<span class="t" style="left:-78px;top:597px;font-size:13.8px;line-height:21px;color:#000;font-weight:bold;letter-spacing:0.45px;width:100.45px;text-align:right;">34233</span>
<span class="t" style="left:117px;top:597px;font-size:13.8px;line-height:21px;color:#000090;font-weight:bold;letter-spacing:0.3px;width:37.0px;text-align:center;">4</span>
<div style="left:2px;top:615px;width:36px;height:1px;background:#213f3f;"></div>
<div style="left:39px;top:615px;width:38px;height:1px;background:#0a2048;"></div>
<div style="left:78px;top:615px;width:77px;height:1px;background:#213f3f;"></div>
<div style="left:156px;top:615px;width:40px;height:1px;background:#4a1414;"></div>
<div style="left:197px;top:615px;width:39px;height:1px;background:#213f3f;"></div>
<span class="t" style="left:-78px;top:618px;font-size:13.8px;line-height:21px;color:#000;font-weight:bold;letter-spacing:0.45px;width:100.45px;text-align:right;">34232</span>
<span class="t" style="left:78px;top:618px;font-size:13.8px;line-height:21px;color:#c80000;font-weight:bold;letter-spacing:0.3px;width:33.3px;text-align:right;">1</span>
<span class="t" style="left:117px;top:618px;font-size:13.8px;line-height:21px;color:#000090;font-weight:bold;letter-spacing:0.3px;width:37.0px;text-align:center;">10</span>
<div style="left:2px;top:636px;width:36px;height:1px;background:#213f3f;"></div>
<div style="left:39px;top:636px;width:38px;height:1px;background:#0a2048;"></div>
<div style="left:78px;top:636px;width:77px;height:1px;background:#213f3f;"></div>
<div style="left:156px;top:636px;width:40px;height:1px;background:#4a1414;"></div>
<div style="left:197px;top:636px;width:39px;height:1px;background:#213f3f;"></div>
<span class="t" style="left:-78px;top:639px;font-size:13.8px;line-height:21px;color:#000;font-weight:bold;letter-spacing:0.45px;width:100.45px;text-align:right;">34231</span>
<span class="t" style="left:78px;top:639px;font-size:13.8px;line-height:21px;color:#c80000;font-weight:bold;letter-spacing:0.3px;width:33.3px;text-align:right;">2</span>
<span class="t" style="left:117px;top:639px;font-size:13.8px;line-height:21px;color:#000090;font-weight:bold;letter-spacing:0.3px;width:37.0px;text-align:center;">3</span>
<div style="left:2px;top:657px;width:36px;height:1px;background:#213f3f;"></div>
<div style="left:39px;top:657px;width:38px;height:1px;background:#0a2048;"></div>
<div style="left:78px;top:657px;width:77px;height:1px;background:#213f3f;"></div>
<div style="left:156px;top:657px;width:40px;height:1px;background:#4a1414;"></div>
<div style="left:197px;top:657px;width:39px;height:1px;background:#213f3f;"></div>
<span class="t" style="left:-78px;top:661px;font-size:13.8px;line-height:21px;color:#000;font-weight:bold;letter-spacing:0.45px;width:100.45px;text-align:right;">34230</span>
<span class="t" style="left:117px;top:661px;font-size:13.8px;line-height:21px;color:#000090;font-weight:bold;letter-spacing:0.3px;width:37.0px;text-align:center;">1</span>
<div style="left:2px;top:679px;width:36px;height:1px;background:#213f3f;"></div>
<div style="left:39px;top:679px;width:38px;height:1px;background:#0a2048;"></div>
<div style="left:78px;top:679px;width:77px;height:1px;background:#213f3f;"></div>
<div style="left:156px;top:679px;width:40px;height:1px;background:#4a1414;"></div>
<div style="left:197px;top:679px;width:39px;height:1px;background:#213f3f;"></div>
<span class="t" style="left:-78px;top:682px;font-size:13.8px;line-height:21px;color:#000;font-weight:bold;letter-spacing:0.45px;width:100.45px;text-align:right;">34229</span>
<span class="t" style="left:117px;top:682px;font-size:13.8px;line-height:21px;color:#000090;font-weight:bold;letter-spacing:0.3px;width:37.0px;text-align:center;">10</span>
<div style="left:2px;top:700px;width:36px;height:1px;background:#213f3f;"></div>
<div style="left:39px;top:700px;width:38px;height:1px;background:#0a2048;"></div>
<div style="left:78px;top:700px;width:77px;height:1px;background:#213f3f;"></div>
<div style="left:156px;top:700px;width:40px;height:1px;background:#4a1414;"></div>
<div style="left:197px;top:700px;width:39px;height:1px;background:#213f3f;"></div>
<span class="t" style="left:-78px;top:703px;font-size:13.8px;line-height:21px;color:#000;font-weight:bold;letter-spacing:0.45px;width:100.45px;text-align:right;">34228</span>
<span class="t" style="left:78px;top:703px;font-size:13.8px;line-height:21px;color:#c80000;font-weight:bold;letter-spacing:0.3px;width:33.3px;text-align:right;">10</span>
<span class="t" style="left:117px;top:703px;font-size:13.8px;line-height:21px;color:#000090;font-weight:bold;letter-spacing:0.3px;width:37.0px;text-align:center;">19</span>
<div style="left:2px;top:721px;width:36px;height:1px;background:#213f3f;"></div>
<div style="left:39px;top:721px;width:38px;height:1px;background:#0a2048;"></div>
<div style="left:78px;top:721px;width:77px;height:1px;background:#213f3f;"></div>
<div style="left:156px;top:721px;width:40px;height:1px;background:#4a1414;"></div>
<div style="left:197px;top:721px;width:39px;height:1px;background:#213f3f;"></div>
<span class="t" style="left:-78px;top:724px;font-size:13.8px;line-height:21px;color:#000;font-weight:bold;letter-spacing:0.45px;width:100.45px;text-align:right;">34227</span>
<span class="t" style="left:78px;top:724px;font-size:13.8px;line-height:21px;color:#c80000;font-weight:bold;letter-spacing:0.3px;width:33.3px;text-align:right;">16</span>
<span class="t" style="left:117px;top:724px;font-size:13.8px;line-height:21px;color:#000090;font-weight:bold;letter-spacing:0.3px;width:37.0px;text-align:center;">24</span>
<div style="left:2px;top:742px;width:36px;height:1px;background:#213f3f;"></div>
<div style="left:39px;top:742px;width:38px;height:1px;background:#0a2048;"></div>
<div style="left:78px;top:742px;width:77px;height:1px;background:#213f3f;"></div>
<div style="left:156px;top:742px;width:40px;height:1px;background:#4a1414;"></div>
<div style="left:197px;top:742px;width:39px;height:1px;background:#213f3f;"></div>
<span class="t" style="left:-78px;top:746px;font-size:13.8px;line-height:21px;color:#000;font-weight:bold;letter-spacing:0.45px;width:100.45px;text-align:right;">34226</span>
<span class="t" style="left:78px;top:746px;font-size:13.8px;line-height:21px;color:#c80000;font-weight:bold;letter-spacing:0.3px;width:33.3px;text-align:right;">6</span>
<span class="t" style="left:117px;top:746px;font-size:13.8px;line-height:21px;color:#000090;font-weight:bold;letter-spacing:0.3px;width:37.0px;text-align:center;">1</span>
<div style="left:2px;top:764px;width:36px;height:1px;background:#213f3f;"></div>
<div style="left:39px;top:764px;width:38px;height:1px;background:#0a2048;"></div>
<div style="left:78px;top:764px;width:77px;height:1px;background:#213f3f;"></div>
<div style="left:156px;top:764px;width:40px;height:1px;background:#4a1414;"></div>
<div style="left:197px;top:764px;width:39px;height:1px;background:#213f3f;"></div>
<span class="t" style="left:-78px;top:767px;font-size:13.8px;line-height:21px;color:#000;font-weight:bold;letter-spacing:0.45px;width:100.45px;text-align:right;">34225</span>
<span class="t" style="left:117px;top:767px;font-size:13.8px;line-height:21px;color:#000090;font-weight:bold;letter-spacing:0.3px;width:37.0px;text-align:center;">10</span>
<div style="left:2px;top:785px;width:36px;height:1px;background:#213f3f;"></div>
<div style="left:39px;top:785px;width:38px;height:1px;background:#0a2048;"></div>
<div style="left:78px;top:785px;width:77px;height:1px;background:#213f3f;"></div>
<div style="left:156px;top:785px;width:40px;height:1px;background:#4a1414;"></div>
<div style="left:197px;top:785px;width:39px;height:1px;background:#213f3f;"></div>
<span class="t" style="left:-78px;top:788px;font-size:13.8px;line-height:21px;color:#000;font-weight:bold;letter-spacing:0.45px;width:100.45px;text-align:right;">34224</span>
<span class="t" style="left:117px;top:788px;font-size:13.8px;line-height:21px;color:#000090;font-weight:bold;letter-spacing:0.3px;width:37.0px;text-align:center;">2</span>
<div style="left:2px;top:806px;width:36px;height:1px;background:#213f3f;"></div>
<div style="left:39px;top:806px;width:38px;height:1px;background:#0a2048;"></div>
<div style="left:78px;top:806px;width:77px;height:1px;background:#213f3f;"></div>
<div style="left:156px;top:806px;width:40px;height:1px;background:#4a1414;"></div>
<div style="left:197px;top:806px;width:39px;height:1px;background:#213f3f;"></div>
<span class="t" style="left:-78px;top:810px;font-size:13.8px;line-height:21px;color:#000;font-weight:bold;letter-spacing:0.45px;width:100.45px;text-align:right;">34223</span>
<span class="t" style="left:78px;top:810px;font-size:13.8px;line-height:21px;color:#c80000;font-weight:bold;letter-spacing:0.3px;width:33.3px;text-align:right;">1</span>
<span class="t" style="left:117px;top:810px;font-size:13.8px;line-height:21px;color:#000090;font-weight:bold;letter-spacing:0.3px;width:37.0px;text-align:center;">19</span>
<div style="left:2px;top:828px;width:36px;height:1px;background:#213f3f;"></div>
<div style="left:39px;top:828px;width:38px;height:1px;background:#0a2048;"></div>
<div style="left:78px;top:828px;width:77px;height:1px;background:#213f3f;"></div>
<div style="left:156px;top:828px;width:40px;height:1px;background:#4a1414;"></div>
<div style="left:197px;top:828px;width:39px;height:1px;background:#213f3f;"></div>
<span class="t" style="left:-78px;top:831px;font-size:13.8px;line-height:21px;color:#000;font-weight:bold;letter-spacing:0.45px;width:100.45px;text-align:right;">34222</span>
<span class="t" style="left:78px;top:831px;font-size:13.8px;line-height:21px;color:#c80000;font-weight:bold;letter-spacing:0.3px;width:33.3px;text-align:right;">11</span>
<span class="t" style="left:117px;top:831px;font-size:13.8px;line-height:21px;color:#000090;font-weight:bold;letter-spacing:0.3px;width:37.0px;text-align:center;">41</span>
<div style="left:2px;top:849px;width:36px;height:1px;background:#213f3f;"></div>
<div style="left:39px;top:849px;width:38px;height:1px;background:#0a2048;"></div>
<div style="left:78px;top:849px;width:77px;height:1px;background:#213f3f;"></div>
<div style="left:156px;top:849px;width:40px;height:1px;background:#4a1414;"></div>
<div style="left:197px;top:849px;width:39px;height:1px;background:#213f3f;"></div>
<span class="t" style="left:-78px;top:852px;font-size:13.8px;line-height:21px;color:#000;font-weight:bold;letter-spacing:0.45px;width:100.45px;text-align:right;">34221</span>
<span class="t" style="left:78px;top:852px;font-size:13.8px;line-height:21px;color:#c80000;font-weight:bold;letter-spacing:0.3px;width:33.3px;text-align:right;">21</span>
<span class="t" style="left:117px;top:852px;font-size:13.8px;line-height:21px;color:#000090;font-weight:bold;letter-spacing:0.3px;width:37.0px;text-align:center;">14</span>
<div style="left:2px;top:870px;width:36px;height:1px;background:#213f3f;"></div>
<div style="left:39px;top:870px;width:38px;height:1px;background:#0a2048;"></div>
<div style="left:78px;top:870px;width:77px;height:1px;background:#213f3f;"></div>
<div style="left:156px;top:870px;width:40px;height:1px;background:#4a1414;"></div>
<div style="left:197px;top:870px;width:39px;height:1px;background:#213f3f;"></div>
<span class="t" style="left:-78px;top:873px;font-size:13.8px;line-height:21px;color:#000;font-weight:bold;letter-spacing:0.45px;width:100.45px;text-align:right;">34220</span>
<span class="t" style="left:78px;top:873px;font-size:13.8px;line-height:21px;color:#c80000;font-weight:bold;letter-spacing:0.3px;width:33.3px;text-align:right;">5</span>
<span class="t" style="left:117px;top:873px;font-size:13.8px;line-height:21px;color:#000090;font-weight:bold;letter-spacing:0.3px;width:37.0px;text-align:center;">2</span>
<div style="left:2px;top:891px;width:36px;height:1px;background:#213f3f;"></div>
<div style="left:39px;top:891px;width:38px;height:1px;background:#0a2048;"></div>
<div style="left:78px;top:891px;width:77px;height:1px;background:#213f3f;"></div>
<div style="left:156px;top:891px;width:40px;height:1px;background:#4a1414;"></div>
<div style="left:197px;top:891px;width:39px;height:1px;background:#213f3f;"></div>
<div style="left:2px;top:-2px;width:37px;height:28px;background:#c0c0c0;"></div>
<div style="left:77px;top:-2px;width:79px;height:31px;background:#c0c0c0;"></div>
<div style="left:196px;top:-2px;width:43px;height:31px;background:#c0c0c0;"></div>
<div style="left:39px;top:-2px;width:38px;height:31px;background:#000050;"></div>
<div style="left:156px;top:-2px;width:40px;height:31px;background:#960000;"></div>
<span class="t" style="left:38px;top:7px;font-size:13.4px;line-height:18px;color:#80ff80;font-weight:bold;letter-spacing:0.9px;width:39px;text-align:center;">Buy</span>
<span class="t" style="left:154.5px;top:7px;font-size:13.7px;line-height:18px;color:#ff8080;font-weight:bold;letter-spacing:0.1px;width:41px;text-align:center;">Sell</span>
<div style="left:116px;top:-2px;width:1px;height:900px;background:#213f3f;"></div>
<div style="left:0px;top:-2px;width:1px;height:900px;background:#707070;"></div>
<div style="left:1px;top:-2px;width:1px;height:900px;background:#000;"></div>
</div>
<div style="left:1899px;top:2px;width:2px;height:913px;background:#6a6a6a;"></div>
<div style="left:1901px;top:2px;width:19px;height:913px;background:#f0f0f0;"></div>
<div style="left:1902px;top:26px;width:15px;height:808px;background:#cdcdcd;"></div>
<svg style="position:absolute;left:1901px;top:2px" width="19" height="913" viewBox="1901 102 19 913"><g fill="none" stroke="#606060" stroke-width="1.800"><path d="M1906 114.500l3.500-4 3.500 4"/><path d="M1906 1004l3.500 4 3.500-4"/></g></svg>
</div>
<div style="left:982px;top:103px;width:147px;height:914px;background:#f0f0f0;box-shadow:0 2px 10px 1px rgba(0,0,0,0.45);border:1px solid #8c8c8c;border-top-color:#aaa"></div>
<div style="left:983px;top:104px;width:145px;height:48px;background:#fff;"></div>
<div style="left:991px;top:112px;width:15px;height:12px;background:#f4f4f4;border:1px solid #9a9a9a"></div>
<div style="left:993px;top:114px;width:6px;height:8px;background:linear-gradient(#4a7fb0,#3a9a60)"></div>
<svg style="position:absolute;left:983px;top:104px" width="145" height="30" viewBox="983 104 145 30"><g fill="none" stroke="#555" stroke-width="1"><path d="M1009 118.500h10"/><rect x="1054.500" y="113.500" width="9" height="9" stroke="#ddd"/><path d="M1100 113l10 10M1110 113l-10 10" stroke="#444"/></g></svg>
<span class="t" style="left:990.5px;top:136px;font-size:12px;line-height:16px;color:#444;letter-spacing:-0.44px;">Clear</span>
<span class="t" style="left:1031px;top:136px;font-size:12px;line-height:16px;color:#444;letter-spacing:-0.17px;">Settings</span>
<div style="left:986px;top:158px;width:141px;height:857px;background:#c0c0c0;border:1px solid #fff;border-top:1px solid #696969;border-left:2px solid #696969"></div>
<div style="left:988px;top:159px;width:121px;height:1px;background:#fff;"></div>
<div style="left:988px;top:159px;width:1px;height:34px;background:#fff;"></div>
<div style="left:989px;top:160px;width:120px;height:837px;overflow:hidden;background:#c0c0c0">
<div style="left:0;top:0;width:120px;height:33px;background:#a0a0a0"></div>
<span class="t" style="left:4.500px;top:0;font-size:20px;line-height:33px;font-weight:bold;color:#000">Volume</span>
<span class="t" style="left:84.500px;top:0;font-size:20px;line-height:33px;font-weight:bold;color:#000">Num</span>
<span class="t" style="left:2.500px;top:33px;font-size:20px;line-height:29px;font-weight:bold;color:#008000">1</span>
<span class="t" style="left:82px;top:33px;font-size:20px;line-height:29px;font-weight:bold;color:#008000">1</span>
<span class="t" style="left:2.500px;top:61px;font-size:20px;line-height:29px;font-weight:bold;color:#008000">1</span>
<span class="t" style="left:82px;top:61px;font-size:20px;line-height:29px;font-weight:bold;color:#008000">1</span>
<span class="t" style="left:2.500px;top:89px;font-size:20px;line-height:29px;font-weight:bold;color:#008000">9</span>
<span class="t" style="left:82px;top:89px;font-size:20px;line-height:29px;font-weight:bold;color:#008000">3</span>
<span class="t" style="left:2.500px;top:117px;font-size:20px;line-height:29px;font-weight:bold;color:#008000">1</span>
<span class="t" style="left:82px;top:117px;font-size:20px;line-height:29px;font-weight:bold;color:#008000">1</span>
<span class="t" style="left:2.500px;top:145px;font-size:20px;line-height:29px;font-weight:bold;color:#008000">1</span>
<span class="t" style="left:82px;top:145px;font-size:20px;line-height:29px;font-weight:bold;color:#008000">1</span>
<div style="left:0;top:173px;width:120px;height:28px;background:#808080"></div>
<span class="t" style="left:2.500px;top:173px;font-size:20px;line-height:29px;font-weight:bold;color:#ff0000">1</span>
<span class="t" style="left:82px;top:173px;font-size:20px;line-height:29px;font-weight:bold;color:#ff0000">1</span>
<span class="t" style="left:2.500px;top:201px;font-size:20px;line-height:29px;font-weight:bold;color:#008000">8</span>
<span class="t" style="left:82px;top:201px;font-size:20px;line-height:29px;font-weight:bold;color:#008000">4</span>
<div style="left:0;top:229px;width:120px;height:28px;background:#808080"></div>
<span class="t" style="left:2.500px;top:229px;font-size:20px;line-height:29px;font-weight:bold;color:#ff0000">1</span>
<span class="t" style="left:82px;top:229px;font-size:20px;line-height:29px;font-weight:bold;color:#ff0000">1</span>
<span class="t" style="left:2.500px;top:257px;font-size:20px;line-height:29px;font-weight:bold;color:#008000">1</span>
<span class="t" style="left:82px;top:257px;font-size:20px;line-height:29px;font-weight:bold;color:#008000">1</span>
<span class="t" style="left:2.500px;top:285px;font-size:20px;line-height:29px;font-weight:bold;color:#008000">1</span>
<span class="t" style="left:82px;top:285px;font-size:20px;line-height:29px;font-weight:bold;color:#008000">1</span>
<div style="left:0;top:313px;width:120px;height:28px;background:#808080"></div>
<span class="t" style="left:2.500px;top:313px;font-size:20px;line-height:29px;font-weight:bold;color:#ff0000">12</span>
<span class="t" style="left:82px;top:313px;font-size:20px;line-height:29px;font-weight:bold;color:#ff0000">3</span>
<div style="left:0;top:341px;width:120px;height:28px;background:#808080"></div>
<span class="t" style="left:2.500px;top:341px;font-size:20px;line-height:29px;font-weight:bold;color:#ff0000">2</span>
<span class="t" style="left:82px;top:341px;font-size:20px;line-height:29px;font-weight:bold;color:#ff0000">1</span>
<div style="left:0;top:369px;width:120px;height:28px;background:#808080"></div>
<span class="t" style="left:2.500px;top:369px;font-size:20px;line-height:29px;font-weight:bold;color:#ff0000">6</span>
<span class="t" style="left:82px;top:369px;font-size:20px;line-height:29px;font-weight:bold;color:#ff0000">4</span>
<span class="t" style="left:2.500px;top:397px;font-size:20px;line-height:29px;font-weight:bold;color:#008000">28</span>
<span class="t" style="left:82px;top:397px;font-size:20px;line-height:29px;font-weight:bold;color:#008000">16</span>
<span class="t" style="left:2.500px;top:425px;font-size:20px;line-height:29px;font-weight:bold;color:#008000">1</span>
<span class="t" style="left:82px;top:425px;font-size:20px;line-height:29px;font-weight:bold;color:#008000">1</span>
<span class="t" style="left:2.500px;top:453px;font-size:20px;line-height:29px;font-weight:bold;color:#008000">1</span>
<span class="t" style="left:82px;top:453px;font-size:20px;line-height:29px;font-weight:bold;color:#008000">1</span>
<span class="t" style="left:2.500px;top:481px;font-size:20px;line-height:29px;font-weight:bold;color:#008000">1</span>
<span class="t" style="left:82px;top:481px;font-size:20px;line-height:29px;font-weight:bold;color:#008000">1</span>
<div style="left:0;top:509px;width:120px;height:28px;background:#808080"></div>
<span class="t" style="left:2.500px;top:509px;font-size:20px;line-height:29px;font-weight:bold;color:#ff0000">1</span>
<span class="t" style="left:82px;top:509px;font-size:20px;line-height:29px;font-weight:bold;color:#ff0000">1</span>
<div style="left:0;top:537px;width:120px;height:28px;background:#808080"></div>
<span class="t" style="left:2.500px;top:537px;font-size:20px;line-height:29px;font-weight:bold;color:#ff0000">2</span>
<span class="t" style="left:82px;top:537px;font-size:20px;line-height:29px;font-weight:bold;color:#ff0000">1</span>
<div style="left:0;top:565px;width:120px;height:28px;background:#808080"></div>
<span class="t" style="left:2.500px;top:565px;font-size:20px;line-height:29px;font-weight:bold;color:#ff0000">1</span>
<span class="t" style="left:82px;top:565px;font-size:20px;line-height:29px;font-weight:bold;color:#ff0000">1</span>
<div style="left:0;top:593px;width:120px;height:28px;background:#808080"></div>
<span class="t" style="left:2.500px;top:593px;font-size:20px;line-height:29px;font-weight:bold;color:#ff0000">3</span>
<span class="t" style="left:82px;top:593px;font-size:20px;line-height:29px;font-weight:bold;color:#ff0000">1</span>
<div style="left:0;top:621px;width:120px;height:28px;background:#ffff00"></div>
<span class="t" style="left:2.500px;top:621px;font-size:20px;line-height:29px;font-weight:bold;color:#000">16</span>
<span class="t" style="left:82px;top:621px;font-size:20px;line-height:29px;font-weight:bold;color:#000">4</span>
<span class="t" style="left:2.500px;top:649px;font-size:20px;line-height:29px;font-weight:bold;color:#008000">24</span>
<span class="t" style="left:82px;top:649px;font-size:20px;line-height:29px;font-weight:bold;color:#008000">9</span>
<div style="left:0;top:677px;width:120px;height:28px;background:#808080"></div>
<span class="t" style="left:2.500px;top:677px;font-size:20px;line-height:29px;font-weight:bold;color:#ff0000">19</span>
<span class="t" style="left:82px;top:677px;font-size:20px;line-height:29px;font-weight:bold;color:#ff0000">6</span>
<div style="left:0;top:705px;width:120px;height:28px;background:#808080"></div>
<span class="t" style="left:2.500px;top:705px;font-size:20px;line-height:29px;font-weight:bold;color:#ff0000">5</span>
<span class="t" style="left:82px;top:705px;font-size:20px;line-height:29px;font-weight:bold;color:#ff0000">1</span>
<span class="t" style="left:2.500px;top:733px;font-size:20px;line-height:29px;font-weight:bold;color:#008000">2</span>
<span class="t" style="left:82px;top:733px;font-size:20px;line-height:29px;font-weight:bold;color:#008000">2</span>
<span class="t" style="left:2.500px;top:761px;font-size:20px;line-height:29px;font-weight:bold;color:#008000">1</span>
<span class="t" style="left:82px;top:761px;font-size:20px;line-height:29px;font-weight:bold;color:#008000">1</span>
<span class="t" style="left:2.500px;top:789px;font-size:20px;line-height:29px;font-weight:bold;color:#008000">25</span>
<span class="t" style="left:82px;top:789px;font-size:20px;line-height:29px;font-weight:bold;color:#008000">18</span>
</div>
<div style="left:1109px;top:160px;width:17px;height:837px;background:#f0f0f0;"></div>
<div style="left:1110px;top:177px;width:15px;height:16px;background:#cdcdcd;"></div>
<div style="left:989px;top:997px;width:137px;height:17px;background:#f0f0f0;"></div>
<div style="left:1005px;top:998px;width:17px;height:15px;background:#cdcdcd;"></div>
<svg style="position:absolute;left:983px;top:104px" width="145" height="913" viewBox="983 104 145 913"><g fill="none" stroke="#505050" stroke-width="1.800"><path d="M1113.500 171l4-4 4 4"/><path d="M1113.500 987l4 4 4-4"/><path d="M998 1001.500l-4 4 4 4"/><path d="M1098.500 1001.500l4 4-4 4"/></g><g fill="#b8b8b8"><rect x="1122" y="1004" width="2" height="2"/><rect x="1122" y="1008" width="2" height="2"/><rect x="1118" y="1008" width="2" height="2"/><rect x="1122" y="1012" width="2" height="1"/><rect x="1118" y="1012" width="2" height="1"/><rect x="1114" y="1012" width="2" height="1"/></g></svg>
<div style="left:0px;top:1017px;width:1920px;height:23px;background:#f0f0f0;"></div>
<div style="left:0px;top:1018px;width:146px;height:22px;background:#0078d7;"></div>
<span class="t" style="left:4px;top:1021px;font-size:12px;line-height:16px;color:#fff;letter-spacing:-0.74px;">ESU23_FUT_CME [CBV]  #3</span>
<span class="t" style="left:151px;top:1021px;font-size:12px;line-height:16px;color:#000;letter-spacing:-0.61px;">NQU23_FUT_CME [CBV]  #1</span>
<span class="t" style="left:304px;top:1021px;font-size:12px;line-height:16px;color:#000;letter-spacing:-0.75px;">RTYU23_FUT_CME [CBV]  #2</span>
<span class="t" style="left:459px;top:1021px;font-size:12px;line-height:16px;color:#000;letter-spacing:-0.57px;">YMU23_FUT_CME [CBV]  #4</span>
<span class="t" style="left:612px;top:1021px;font-size:12px;line-height:16px;color:#000;letter-spacing:-0.6px;">ESU23_FUT_CME [CV]  Daily  #5</span>
<div style="left:298px;top:1019px;width:1px;height:20px;background:#c8c8c8;"></div>
<div style="left:299px;top:1019px;width:1px;height:20px;background:#fff;"></div>
<div style="left:453px;top:1019px;width:1px;height:20px;background:#c8c8c8;"></div>
<div style="left:454px;top:1019px;width:1px;height:20px;background:#fff;"></div>
<div style="left:606px;top:1019px;width:1px;height:20px;background:#c8c8c8;"></div>
<div style="left:607px;top:1019px;width:1px;height:20px;background:#fff;"></div>
<div style="left:779px;top:1019px;width:1px;height:20px;background:#c8c8c8;"></div>
<div style="left:780px;top:1019px;width:1px;height:20px;background:#fff;"></div>
</body></html>
